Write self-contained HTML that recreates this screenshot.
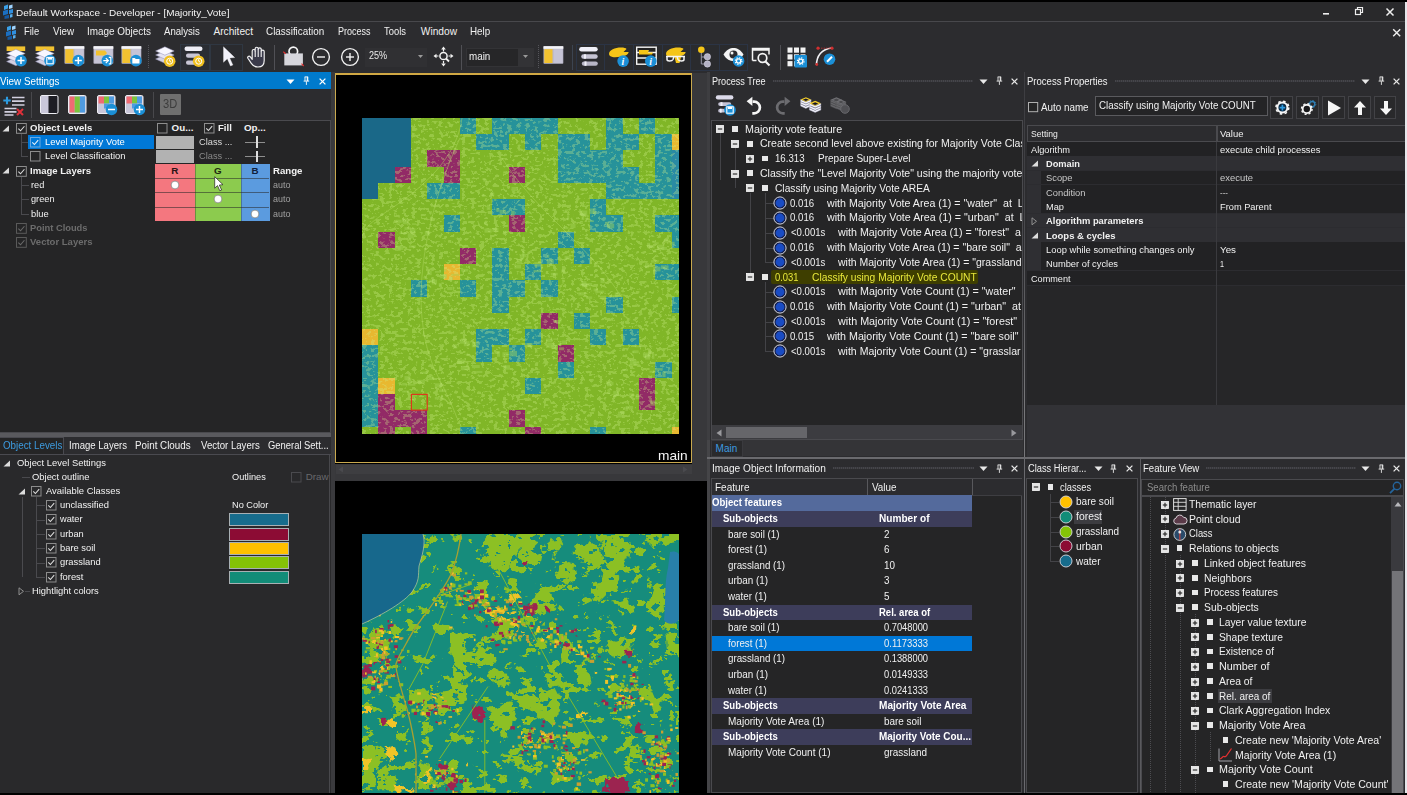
<!DOCTYPE html>
<html lang="en"><head><meta charset="utf-8"><title>Default Workspace - Developer - [Majority_Vote]</title>
<style>
html,body{margin:0;padding:0;}
body{width:1407px;height:795px;overflow:hidden;background:#2d2d30;position:relative;font-family:"Liberation Sans",sans-serif;}
body>div,body>span,body>svg{position:absolute;}
.t{white-space:pre;transform-origin:0 50%;display:block;}
svg{overflow:visible;}

</style></head>
<body>
<div style="left:0px;top:0px;width:1407px;height:795px;background:#2c2c2f;"></div>
<div style="left:0px;top:0px;width:1407px;height:2px;background:#000;"></div>
<div style="left:0px;top:2px;width:1407px;height:20px;background:#29292b;"></div>
<div style="left:0px;top:21.2px;width:1407px;height:1px;background:#48484c;"></div>
<div style="left:0px;top:22px;width:1407px;height:50px;background:#2c2c2f;"></div>
<svg style="left:2px;top:4px" width="12.0" height="15.0" viewBox="0 0 12 15"><path d="M2 2 L6 0.5 L6 4.5 L2 6z" fill="#3aa0e8"/><path d="M7 1.5 L10.5 0.5 L10.5 4 L7 5z" fill="#9fd4ff"/><path d="M1 7 L6 5.5 L6 10 L1 11.5z" fill="#1b6fc2"/><path d="M7 6 L11 5 L11 9 L7 10z" fill="#2f8fe0"/><path d="M2.5 12 L7 10.8 L7 14.2 L2.5 15z" fill="#1558a0"/><path d="M8 10.5 L10.5 10 L10.5 13 L8 13.8z" fill="#57b0f0"/></svg>
<svg style="left:5px;top:25px" width="12.0" height="15.0" viewBox="0 0 12 15"><path d="M2 2 L6 0.5 L6 4.5 L2 6z" fill="#3aa0e8"/><path d="M7 1.5 L10.5 0.5 L10.5 4 L7 5z" fill="#9fd4ff"/><path d="M1 7 L6 5.5 L6 10 L1 11.5z" fill="#1b6fc2"/><path d="M7 6 L11 5 L11 9 L7 10z" fill="#2f8fe0"/><path d="M2.5 12 L7 10.8 L7 14.2 L2.5 15z" fill="#1558a0"/><path d="M8 10.5 L10.5 10 L10.5 13 L8 13.8z" fill="#57b0f0"/></svg>
<span class="t" style="left:16.4px;top:6.6px;font-size:9.9px;line-height:11.88px;color:#f4f4f4;font-weight:400;transform:scaleX(1.011);">Default Workspace - Developer - [Majority_Vote]</span>
<svg style="left:1320px;top:5px" width="80" height="14" viewBox="0 0 80 14"><rect x="3" y="8" width="6" height="1.6" fill="#eee"/><rect x="35.5" y="4.5" width="5" height="5" fill="none" stroke="#eee" stroke-width="1.2"/><path d="M37.5 4.5V2.5h5v5h-2" fill="none" stroke="#eee" stroke-width="1.2"/><path d="M66.5 3.5l7 7M73.500 3.5l-7 7" stroke="#eee" stroke-width="1.5"/></svg>
<svg style="left:1392px;top:28px" width="10" height="10" viewBox="0 0 10 10"><path d="M1.200 1.200l7 7M8.200 1.200l-7 7" stroke="#eee" stroke-width="1.4"/></svg>
<span class="t" style="left:24.1px;top:25.71px;font-size:10.2px;line-height:12.24px;color:#f0f0f0;font-weight:400;transform:scaleX(0.926);">File</span>
<span class="t" style="left:52.7px;top:25.71px;font-size:10.2px;line-height:12.24px;color:#f0f0f0;font-weight:400;transform:scaleX(0.968);">View</span>
<span class="t" style="left:87px;top:25.71px;font-size:10.2px;line-height:12.24px;color:#f0f0f0;font-weight:400;transform:scaleX(0.974);">Image Objects</span>
<span class="t" style="left:164.4px;top:25.71px;font-size:10.2px;line-height:12.24px;color:#f0f0f0;font-weight:400;transform:scaleX(0.944);">Analysis</span>
<span class="t" style="left:213.4px;top:25.71px;font-size:10.2px;line-height:12.24px;color:#f0f0f0;font-weight:400;">Architect</span>
<span class="t" style="left:266.2px;top:25.71px;font-size:10.2px;line-height:12.24px;color:#f0f0f0;font-weight:400;transform:scaleX(0.969);">Classification</span>
<span class="t" style="left:338px;top:25.71px;font-size:10.2px;line-height:12.24px;color:#f0f0f0;font-weight:400;transform:scaleX(0.886);">Process</span>
<span class="t" style="left:384.3px;top:25.71px;font-size:10.2px;line-height:12.24px;color:#f0f0f0;font-weight:400;transform:scaleX(0.921);">Tools</span>
<span class="t" style="left:420.8px;top:25.71px;font-size:10.2px;line-height:12.24px;color:#f0f0f0;font-weight:400;">Window</span>
<span class="t" style="left:470.3px;top:25.71px;font-size:10.2px;line-height:12.24px;color:#f0f0f0;font-weight:400;transform:scaleX(0.964);">Help</span>
<svg style="left:6.4px;top:46px;" width="22" height="22" viewBox="0 0 22 22"><rect x="0.6" y="0.4" width="18.600" height="4.600" fill="#f2c230"/><path d="M0.6 15.5l9.300-4.200l9.300 4.200l-9.300 4.200z" fill="#d2d0e2" stroke="#8f8db0" stroke-width="0.500"/><path d="M0.6 11.5l9.300-4.200l9.300 4.200l-9.300 4.200z" fill="#e6e4f4" stroke="#8f8db0" stroke-width="0.500"/><path d="M0.6 7.5l9.300-4.200l9.300 4.200l-9.300 4.200z" fill="#f8f7ff" stroke="#8f8db0" stroke-width="0.500"/><circle cx="15" cy="14.6" r="5.8" fill="#1b8fd6"/><path d="M11.5 14.6h7M15 11.1v7" stroke="#fff" stroke-width="1.5"/></svg>
<svg style="left:35.2px;top:46px;" width="22" height="22" viewBox="0 0 22 22"><rect x="0.6" y="0.4" width="18.600" height="4.600" fill="#f2c230"/><path d="M0.6 15.5l9.300-4.200l9.300 4.200l-9.300 4.200z" fill="#d2d0e2" stroke="#8f8db0" stroke-width="0.500"/><path d="M0.6 11.5l9.300-4.200l9.300 4.200l-9.300 4.200z" fill="#e6e4f4" stroke="#8f8db0" stroke-width="0.500"/><path d="M0.6 7.5l9.300-4.200l9.300 4.200l-9.300 4.200z" fill="#f8f7ff" stroke="#8f8db0" stroke-width="0.500"/><circle cx="15" cy="14.6" r="5.8" fill="#1b8fd6"/><rect x="11.8" y="11.399999999999999" width="6.4" height="6.400" fill="none" stroke="#fff" stroke-width="1.100"/><rect x="13" y="11.399999999999999" width="4" height="2.200" fill="#fff"/></svg>
<svg style="left:64px;top:46px;" width="22" height="22" viewBox="0 0 22 22"><rect x="0.500" y="0.200" width="19.800" height="17.600" rx="0.800" fill="#b8b6c8"/><rect x="0.500" y="0.200" width="19.800" height="2.600" fill="#f4f4f8"/><rect x="1.300" y="3.200" width="8.200" height="13.800" fill="#f2c230"/><rect x="10.600" y="3.200" width="8.900" height="13.800" fill="#c6c4d6"/><circle cx="14.3" cy="14.6" r="5.8" fill="#1b8fd6"/><path d="M10.8 14.6h7M14.3 11.1v7" stroke="#fff" stroke-width="1.5"/></svg>
<svg style="left:92.7px;top:46px;" width="22" height="22" viewBox="0 0 22 22"><rect x="0.500" y="0.200" width="19.800" height="17.600" rx="0.800" fill="#b8b6c8"/><rect x="0.500" y="0.200" width="19.800" height="2.600" fill="#f4f4f8"/><rect x="1.300" y="3.200" width="18.200" height="13.800" fill="#c6c4d6"/><path d="M3 4.500h9l2 2.500l-2 2.500h-9z" fill="#f2c230"/><circle cx="14.3" cy="14.6" r="5.8" fill="#1b8fd6"/><path d="M10.3 14.6h4.500M12.8 12.1l2.500 2.500l-2.500 2.500" stroke="#fff" stroke-width="1.300" fill="none"/><path d="M15.8 11.399999999999999h2v6.400h-2" stroke="#fff" stroke-width="1.200" fill="none"/></svg>
<svg style="left:121.3px;top:46px;" width="22" height="22" viewBox="0 0 22 22"><rect x="0.500" y="0.200" width="19.800" height="17.600" rx="0.800" fill="#b8b6c8"/><rect x="0.500" y="0.200" width="19.800" height="2.600" fill="#f4f4f8"/><rect x="1.300" y="3.200" width="8.200" height="13.800" fill="#f2c230"/><rect x="10.600" y="3.200" width="8.900" height="13.800" fill="#c6c4d6"/><circle cx="14.9" cy="14.6" r="5.8" fill="#1b8fd6"/><path d="M11.3 12.1h2.500l1 1h3.700v4.500h-7.200z" fill="#fff"/></svg>
<div style="left:148px;top:45px;width:1px;height:24px;background:repeating-linear-gradient(#55555a 0 1px,transparent 1px 2px)"></div>
<svg style="left:154.8px;top:46px;" width="22" height="22" viewBox="0 0 22 22"><path d="M0.6 13.0l9.300-4.200l9.300 4.200l-9.300 4.200z" fill="#d2d0e2" stroke="#8f8db0" stroke-width="0.500"/><path d="M0.6 9.0l9.300-4.200l9.300 4.200l-9.300 4.200z" fill="#e6e4f4" stroke="#8f8db0" stroke-width="0.500"/><path d="M0.6 5.0l9.300-4.200l9.300 4.200l-9.300 4.200z" fill="#f8f7ff" stroke="#8f8db0" stroke-width="0.500"/><circle cx="14.7" cy="15.2" r="5.8" fill="#f0c020"/><circle cx="14.7" cy="15.2" r="3" fill="none" stroke="#fff" stroke-width="1"/><path d="M14.7 13.2v2l1.500 1" stroke="#fff" stroke-width="1" fill="none"/></svg>
<div style="left:180px;top:44px;width:30px;height:27px;background:#2a2d33;border:1px solid #2f3742;box-sizing:border-box;"></div>
<svg style="left:184px;top:46px;" width="22" height="22" viewBox="0 0 22 22"><rect x="0.500" y="0.500" width="18" height="4.500" rx="2.200" fill="#eeeef6"/><rect x="2" y="7.500" width="14" height="4.200" rx="2" fill="#c8c6d6"/><rect x="2" y="14.500" width="12" height="4.200" rx="2" fill="#c8c6d6"/><circle cx="14.7" cy="15.2" r="5.8" fill="#f0c020"/><circle cx="14.7" cy="15.2" r="3" fill="none" stroke="#fff" stroke-width="1"/><path d="M14.7 13.2v2l1.500 1" stroke="#fff" stroke-width="1" fill="none"/></svg>
<div style="left:210px;top:44px;width:32.5px;height:27px;background:#2a2b2f;border:1px solid #2f3742;box-sizing:border-box;"></div>
<svg style="left:222px;top:46px;" width="14" height="22" viewBox="0 0 14 22"><path d="M1.500 0.800v15.500l3.800-3.600l3.200 7.300l2.400-1.100l-3.200-7l5-0.300z" fill="#f2f2fa" stroke="#fff" stroke-width="0.300"/></svg>
<svg style="left:246.8px;top:46px;" width="21" height="22" viewBox="0 0 21 22"><path d="M4.300 17.400L0.900 12.300C0 10.800 2 9.400 3.100 10.700L5.200 13.400V5a1.500 1.500 0 0 1 3 0V2.700a1.500 1.500 0 0 1 3 0V3.300a1.500 1.500 0 0 1 3 0V5.600a1.500 1.500 0 0 1 3 0V14.500C17.200 18.500 15 21 11 21C8 21 6 20 4.300 17.400Z" fill="#3a3a4a" stroke="#f4f4f4" stroke-width="1.150" stroke-linejoin="round"/><path d="M8.200 5V11M11.200 3.300V11M14.200 5.600V11" stroke="#f4f4f4" stroke-width="1.100"/></svg>
<div style="left:274px;top:45px;width:1px;height:25px;background:#505055;"></div>
<svg style="left:283px;top:46px;" width="21" height="21" viewBox="0 0 21 21"><circle cx="10.300" cy="5.500" r="4.300" fill="none" stroke="#f6f6f6" stroke-width="1.700"/><path d="M1.300 7.400h18.600v12h-18.600z" fill="#d6d6dc"/><path d="M0.300 5.800l2.500 2M20.800 20l-2.300-2.300" stroke="#e03030" stroke-width="1.100"/></svg>
<svg style="left:310.8px;top:46.6px;" width="20" height="20" viewBox="0 0 20 20"><circle cx="10" cy="10" r="8.400" fill="none" stroke="#f2f2f2" stroke-width="1.400"/><path d="M6 10h8" stroke="#f2f2f2" stroke-width="1.400"/></svg>
<svg style="left:339.6px;top:46.6px;" width="20" height="20" viewBox="0 0 20 20"><circle cx="10" cy="10" r="8.400" fill="none" stroke="#f2f2f2" stroke-width="1.400"/><path d="M6 10h8" stroke="#f2f2f2" stroke-width="1.400"/><path d="M10 6v8" stroke="#f2f2f2" stroke-width="1.400"/></svg>
<div style="left:365px;top:47.5px;width:62px;height:19px;background:#303033;"></div>
<span class="t" style="left:368.6px;top:50.13px;font-size:10px;line-height:12.0px;color:#e8e8e8;font-weight:400;transform:scaleX(0.909);">25%</span>
<svg style="left:417px;top:54px;" width="8" height="5" viewBox="0 0 8 5"><path d="M1 1h5l-2.500 3z" fill="#9a9a9a"/></svg>
<svg style="left:433px;top:46px;" width="22" height="22" viewBox="0 0 22 22"><circle cx="10.500" cy="10" r="3.600" fill="none" stroke="#f2f2f2" stroke-width="1.500"/><path d="M13 12.500l3 3" stroke="#f2f2f2" stroke-width="1.800"/><path d="M10.500 0.500l2.300 3h-4.600zM10.500 20.500l2.300-3h-4.600zM0.500 10l3-2.300v4.600zM20.500 10l-3-2.300v4.600z" fill="#f2f2f2"/><path d="M10.500 3v2.500M10.500 15v2.500M3 10h2.500M15.500 10h2" stroke="#f2f2f2" stroke-width="1.200"/></svg>
<div style="left:461px;top:45px;width:1px;height:25px;background:#505055;"></div>
<div style="left:465.6px;top:47.5px;width:68.5px;height:19px;background:#333336;"></div>
<div style="left:466.6px;top:48.5px;width:51.5px;height:17px;background:#262628;"></div>
<span class="t" style="left:468.9px;top:49.91px;font-size:11.5px;line-height:13.8px;color:#f0f0f0;font-weight:400;transform:scaleX(0.854);">main</span>
<svg style="left:522px;top:54px;" width="8" height="5" viewBox="0 0 8 5"><path d="M1 1h5l-2.500 3z" fill="#9a9a9a"/></svg>
<div style="left:538px;top:45px;width:1px;height:24px;background:repeating-linear-gradient(#55555a 0 1px,transparent 1px 2px)"></div>
<svg style="left:543.3px;top:46px;" width="22" height="22" viewBox="0 0 22 22"><rect x="0.500" y="0.200" width="19.800" height="17.600" rx="0.800" fill="#b8b6c8"/><rect x="0.500" y="0.200" width="19.800" height="2.600" fill="#f4f4f8"/><rect x="1.300" y="3.200" width="8.200" height="13.800" fill="#f2c230"/><rect x="10.600" y="3.200" width="8.900" height="13.800" fill="#c6c4d6"/></svg>
<div style="left:572px;top:45px;width:1px;height:25px;background:#3c4450;"></div>
<div style="left:575.9px;top:44px;width:29.2px;height:27px;background:#2a2b2e;border:1px solid #2b3445;box-sizing:border-box;"></div>
<div style="left:604.1px;top:44px;width:29.8px;height:27px;background:#2a2b2e;border:1px solid #2b3445;box-sizing:border-box;"></div>
<div style="left:632.9px;top:44px;width:29.8px;height:27px;background:#2a2b2e;border:1px solid #2b3445;box-sizing:border-box;"></div>
<div style="left:661.7px;top:44px;width:29.1px;height:27px;background:#2a2b2e;border:1px solid #2b3445;box-sizing:border-box;"></div>
<div style="left:689.8px;top:44px;width:29.8px;height:27px;background:#2a2b2e;border:1px solid #2b3445;box-sizing:border-box;"></div>
<div style="left:718.6px;top:44px;width:29.5px;height:27px;background:#2a2b2e;border:1px solid #2b3445;box-sizing:border-box;"></div>
<svg style="left:579px;top:46px;" width="20" height="22" viewBox="0 0 20 22"><rect x="0.200" y="1" width="18.500" height="4.600" rx="2.300" fill="#f0f0f8"/><rect x="2.200" y="8.300" width="16.500" height="4.400" rx="2.200" fill="#c6c4d4"/><rect x="2.800" y="15.400" width="16" height="4.400" rx="2.200" fill="#b8b6c6"/><rect x="5" y="8.300" width="2" height="4.400" fill="#f0f0f8"/><rect x="5.500" y="15.400" width="2" height="4.400" fill="#f0f0f8"/></svg>
<svg style="left:607.5px;top:46px;" width="22" height="22" viewBox="0 0 22 22"><path d="M1 8c0-4 6-6.500 12-6.500c3 0 5 .5 5.500 1.500l-3 3h5c.5 1-1 2.500-3 3.500c-4 1.500-10 2-13 1.500c-2-.3-3.500-1.500-3.500-3z" fill="#f5c518"/><circle cx="15.1" cy="15.1" r="5.8" fill="#1b8fd6"/><text x="13.5" y="18.6" font-family="Liberation Serif,serif" font-style="italic" font-weight="700" font-size="10" fill="#fff">i</text></svg>
<svg style="left:636px;top:46px;" width="22" height="22" viewBox="0 0 22 22"><rect x="0.700" y="1.200" width="19.500" height="17" fill="#222" stroke="#f4f4f4" stroke-width="1.400"/><path d="M1 6.500h19M1 12h19" stroke="#f4f4f4" stroke-width="1.400"/><path d="M3 4h10l-1 2.500h5l-1 2h-13z" fill="#f5c518"/><circle cx="14.8" cy="15.1" r="5.8" fill="#1b8fd6"/><text x="13.200000000000001" y="18.6" font-family="Liberation Serif,serif" font-style="italic" font-weight="700" font-size="10" fill="#fff">i</text></svg>
<svg style="left:665px;top:46px;" width="22" height="22" viewBox="0 0 22 22"><path d="M1 8c0-4 6-6.500 12-6.500c3 0 5 .5 5.500 1.500l-3 3h5c.5 1-1 2.500-3 3.500c-4 1.500-10 2-13 1.500c-2-.3-3.500-1.500-3.500-3z" fill="#f5c518"/><path d="M9 9l2 8h3.500l1.500-6z" fill="#f5c518"/><path d="M1 10.500h19M2 10.500v3c0 2 5 2 6 0l1-3M12 10.500l1 3c1 2 6 2 6 0v-3" fill="none" stroke="#f4f4f4" stroke-width="1.500"/></svg>
<svg style="left:695px;top:46px;" width="22" height="22" viewBox="0 0 22 22"><path d="M6.300 6v12h5M6.300 11h5" fill="none" stroke="#9a9aa8" stroke-width="1"/><circle cx="6.300" cy="3.700" r="3.300" fill="#f5c518"/><circle cx="12.400" cy="10.800" r="3.200" fill="#b4b2c4" stroke="#dcdae8" stroke-width="0.500"/><circle cx="12.400" cy="18" r="3.200" fill="#b4b2c4" stroke="#dcdae8" stroke-width="0.500"/></svg>
<svg style="left:722.5px;top:46px;" width="24" height="22" viewBox="0 0 24 22"><path d="M0.500 8.500c3-5 6.500-6.500 10-6.500s7 1.500 10 6.500c-3 5-6.500 6.500-10 6.500s-7-1.500-10-6.500z" fill="#f4f4f4"/><circle cx="10.500" cy="8.500" r="4" fill="#2a2b2f"/><circle cx="9" cy="7" r="1.500" fill="#f4f4f4"/><circle cx="15.6" cy="15" r="5.8" fill="#1b8fd6"/><circle cx="15.6" cy="15" r="2.100" fill="none" stroke="#fff" stroke-width="1.300"/><circle cx="15.6" cy="15" r="3.300" fill="none" stroke="#fff" stroke-width="1.200" stroke-dasharray="1.296 1.296"/></svg>
<svg style="left:751px;top:46px;" width="22" height="22" viewBox="0 0 22 22"><path d="M1.500 14.500v-12h16.500v6" fill="none" stroke="#f4f4f4" stroke-width="1.500"/><path d="M1.500 3.500h16.500" stroke="#f4f4f4" stroke-width="2.500"/><circle cx="11.500" cy="12" r="4.300" fill="none" stroke="#f4f4f4" stroke-width="1.700"/><path d="M14.500 15.500l4 4" stroke="#f4f4f4" stroke-width="2.200"/><path d="M1.500 14.500h4" stroke="#f4f4f4" stroke-width="1.500"/></svg>
<div style="left:779.5px;top:45px;width:1px;height:25px;background:#505055;"></div>
<svg style="left:787px;top:46.5px;" width="22" height="22" viewBox="0 0 22 22"><rect x="0.5" y="0.5" width="5" height="5.200" fill="#f4f4f4"/><rect x="7.0" y="0.5" width="5" height="5.200" fill="#f4f4f4"/><rect x="13.5" y="0.5" width="5" height="5.200" fill="#f4f4f4"/><rect x="0.5" y="7.3" width="5" height="5.200" fill="#f4f4f4"/><rect x="7.0" y="7.3" width="5" height="5.200" fill="#f4f4f4"/><rect x="13.5" y="7.3" width="5" height="5.200" fill="#f4f4f4"/><rect x="0.5" y="14.1" width="5" height="5.200" fill="#f4f4f4"/><rect x="7.0" y="14.1" width="5" height="5.200" fill="#f4f4f4"/><rect x="13.5" y="14.1" width="5" height="5.200" fill="#f4f4f4"/><rect x="7.500" y="8" width="12.500" height="12.500" rx="1" fill="#1b8fd6"/><circle cx="13.7" cy="14.2" r="5.8" fill="#1b8fd6"/><circle cx="13.7" cy="14.2" r="2.100" fill="none" stroke="#fff" stroke-width="1.300"/><circle cx="13.7" cy="14.2" r="3.300" fill="none" stroke="#fff" stroke-width="1.200" stroke-dasharray="1.296 1.296"/></svg>
<svg style="left:815px;top:46px;" width="24" height="22" viewBox="0 0 24 22"><path d="M1.500 19c0-9 5-16 15.500-17" fill="none" stroke="#f0f0f4" stroke-width="1.600"/><path d="M3.500 2.200h13" stroke="#d03030" stroke-width="0.800" stroke-dasharray="1.500 1"/><circle cx="3" cy="2.200" r="1.600" fill="#d03030"/><circle cx="17" cy="2.200" r="1.600" fill="#d03030"/><circle cx="1.800" cy="18.500" r="1.400" fill="#d03030"/><circle cx="14.5" cy="13.2" r="5.8" fill="#1b8fd6"/><path d="M12.0 15.7l5-5" stroke="#fff" stroke-width="2"/></svg>
<div style="left:0px;top:72px;width:330.5px;height:17px;background:#007acc;"></div>
<span class="t" style="left:-0.5px;top:75.93px;font-size:10px;line-height:12.0px;color:#ffffff;font-weight:400;transform:scaleX(0.985);">View Settings</span>
<svg style="left:286.0px;top:78.5px;" width="9" height="6" viewBox="0 0 9 6"><path d="M0.500 0.500h8l-4 4.500z" fill="#ffffff"/></svg>
<svg style="left:303.3px;top:76.4px;" width="7" height="10" viewBox="0 0 7 10"><path d="M1.700 0.900h3.400M2 0.900v4.200M4.800 0.900v4.200M0.600 5.100h5.600M3.400 5.300v3.600" stroke="#ffffff" stroke-width="0.900" fill="none"/><path d="M4.300 0.900v4.200" stroke="#ffffff" stroke-width="1.100"/></svg>
<svg style="left:318.9px;top:77.5px;" width="7" height="7" viewBox="0 0 7 7"><path d="M0.600 0.600l5.800 5.800M6.400 0.600l-5.800 5.800" stroke="#ffffff" stroke-width="1.300"/></svg>
<div style="left:0px;top:89px;width:330.5px;height:31px;background:#2c2c2f;"></div>
<div style="left:330.5px;top:72px;width:4px;height:723px;background:#3a3a3d;"></div>
<svg style="left:2.5px;top:94.5px;" width="22" height="21" viewBox="0 0 22 21"><path d="M9 2.500h12.500M9 6.200h12.500M9 10h12.500M1.500 13.500h12M1.500 16.800h12M1.500 20h9" stroke="#d2d0e0" stroke-width="1.700"/><path d="M0.300 5.500h7.400M4 1.800v7.400" stroke="#2d9be0" stroke-width="2.100"/><path d="M14 14l6 6M20 14l-6 6" stroke="#e0303a" stroke-width="2"/></svg>
<div style="left:31px;top:92px;width:1px;height:26px;background:#48484c;"></div>
<svg style="left:39.5px;top:94.5px;" width="21" height="21" viewBox="0 0 21 21"><rect x="0.500" y="0.500" width="17.500" height="18" rx="1.500" fill="#1d1d24" stroke="#eeeef4" stroke-width="1"/><rect x="1" y="1" width="7.500" height="17" fill="#c9c7da"/></svg>
<svg style="left:68px;top:94.5px;" width="21" height="21" viewBox="0 0 21 21"><rect x="0.500" y="0.500" width="17.500" height="18" rx="1.500" fill="#c9c7da" stroke="#eeeef4" stroke-width="1"/><rect x="1.500" y="1.500" width="5.200" height="16" fill="#f06a72"/><rect x="6.700" y="1.500" width="5.200" height="16" fill="#7cc43c"/><rect x="11.900" y="1.500" width="5.200" height="16" fill="#4f9be0"/></svg>
<svg style="left:96.5px;top:94.5px;" width="21" height="21" viewBox="0 0 21 21"><rect x="0.500" y="0.500" width="17.500" height="18" rx="1.500" fill="#c9c7da" stroke="#eeeef4" stroke-width="1"/><rect x="1.500" y="1.500" width="5.500" height="7" fill="#f06a72"/><rect x="7" y="1.500" width="5" height="7" fill="#7cc43c"/><rect x="12" y="1.500" width="5" height="7" fill="#4f9be0"/><rect x="7" y="8.500" width="5" height="5" fill="#4f9be0"/><circle cx="14.5" cy="14.5" r="5.8" fill="#1b8fd6"/><path d="M11 14.500h7" stroke="#fff" stroke-width="1.500"/></svg>
<svg style="left:125px;top:94.5px;" width="21" height="21" viewBox="0 0 21 21"><rect x="0.500" y="0.500" width="17.500" height="18" rx="1.500" fill="#c9c7da" stroke="#eeeef4" stroke-width="1"/><rect x="1.500" y="1.500" width="5.500" height="7" fill="#f06a72"/><rect x="7" y="1.500" width="5" height="7" fill="#7cc43c"/><rect x="12" y="1.500" width="5" height="7" fill="#4f9be0"/><rect x="7" y="8.500" width="5" height="5" fill="#4f9be0"/><circle cx="14.5" cy="14.5" r="5.8" fill="#1b8fd6"/><path d="M11.0 14.5h7M14.5 11.0v7" stroke="#fff" stroke-width="1.5"/></svg>
<div style="left:152.5px;top:92px;width:1px;height:26px;background:#48484c;"></div>
<div style="left:160px;top:94.2px;width:21px;height:21px;background:#6f6f6f;border-radius:1px"></div>
<span class="t" style="left:163.2px;top:97.19px;font-size:12.5px;line-height:15.0px;color:#3c3c3c;font-weight:400;transform:scaleX(0.888);">3D</span>
<div style="left:0px;top:119.5px;width:330.5px;height:313px;background:#252526;border:1px solid #4a4a4e;box-sizing:border-box;border-left:none"></div>
<svg style="left:2px;top:124.5px;" width="8" height="7" viewBox="0 0 8 7"><path d="M7 0.500v6h-6.500z" fill="#dcdcdc"/></svg>
<svg style="left:15.7px;top:122.8px;" width="10.8" height="10.8" viewBox="0 0 10.8 10.8"><rect x="0.500" y="0.500" width="9.8" height="9.8" fill="transparent" stroke="#8c8c8c" stroke-width="1"/><path d="M2.3760000000000003 5.6160000000000005l2.16 2.16l3.888-4.5360000000000005" fill="none" stroke="#dcdcdc" stroke-width="1.100"/></svg>
<span class="t" style="left:30.2px;top:121.76px;font-size:9.8px;line-height:11.76px;color:#f2f2f2;font-weight:700;transform:scaleX(0.979);">Object Levels</span>
<svg style="left:157px;top:122.8px;" width="10.5" height="10.5" viewBox="0 0 10.5 10.5"><rect x="0.500" y="0.500" width="9.5" height="9.5" fill="transparent" stroke="#8e8e8e" stroke-width="1"/></svg>
<span class="t" style="left:171.6px;top:121.76px;font-size:9.8px;line-height:11.76px;color:#f2f2f2;font-weight:700;">Ou...</span>
<svg style="left:203.5px;top:122.8px;" width="10.5" height="10.5" viewBox="0 0 10.5 10.5"><rect x="0.500" y="0.500" width="9.5" height="9.5" fill="transparent" stroke="#8e8e8e" stroke-width="1"/><path d="M2.31 5.46l2.1 2.1l3.78-4.41" fill="none" stroke="#dcdcdc" stroke-width="1.100"/></svg>
<span class="t" style="left:217.5px;top:121.76px;font-size:9.8px;line-height:11.76px;color:#f2f2f2;font-weight:700;transform:scaleX(0.975);">Fill</span>
<span class="t" style="left:244px;top:121.76px;font-size:9.8px;line-height:11.76px;color:#f2f2f2;font-weight:700;">Op...</span>
<div style="left:27.8px;top:135.2px;width:126.4px;height:13.8px;background:#0078d7;"></div>
<svg style="left:30.2px;top:136.8px;" width="10.5" height="10.5" viewBox="0 0 10.5 10.5"><rect x="0.500" y="0.500" width="9.5" height="9.5" fill="transparent" stroke="#6aa8e0" stroke-width="1"/><path d="M2.31 5.46l2.1 2.1l3.78-4.41" fill="none" stroke="#e8f0fa" stroke-width="1.100"/></svg>
<span class="t" style="left:44.7px;top:135.96px;font-size:9.8px;line-height:11.76px;color:#fff;font-weight:400;transform:scaleX(0.964);">Level Majority Vote</span>
<svg style="left:30.2px;top:151.2px;" width="10.5" height="10.5" viewBox="0 0 10.5 10.5"><rect x="0.500" y="0.500" width="9.5" height="9.5" fill="transparent" stroke="#8c8c8c" stroke-width="1"/></svg>
<span class="t" style="left:44.7px;top:150.26px;font-size:9.8px;line-height:11.76px;color:#f2f2f2;font-weight:400;transform:scaleX(0.960);">Level Classification</span>
<div style="left:155.9px;top:135.6px;width:38.6px;height:13px;background:#b2b2b2;"></div>
<div style="left:155.9px;top:150.1px;width:38.6px;height:12.7px;background:#b2b2b2;"></div>
<span class="t" style="left:198.6px;top:135.96px;font-size:9.8px;line-height:11.76px;color:#dcdcdc;font-weight:400;transform:scaleX(0.944);">Class ...</span>
<span class="t" style="left:198.6px;top:150.26px;font-size:9.8px;line-height:11.76px;color:#8a8a8a;font-weight:400;transform:scaleX(0.944);">Class ...</span>
<div style="left:245.3px;top:141.89999999999998px;width:19.3px;height:1px;background:#8e8e8e;"></div>
<div style="left:255.6px;top:136.39999999999998px;width:2.7px;height:11.6px;background:#dedede;"></div>
<div style="left:245.3px;top:156.2px;width:19.3px;height:1px;background:#8e8e8e;"></div>
<div style="left:255.6px;top:150.7px;width:2.7px;height:11.6px;background:#dedede;"></div>
<div style="left:20.5px;top:134px;width:1px;height:22.5px;background:#4a4a4e;"></div>
<div style="left:20.5px;top:142px;width:7px;height:1px;background:#4a4a4e;"></div>
<div style="left:20.5px;top:156px;width:7px;height:1px;background:#4a4a4e;"></div>
<svg style="left:2px;top:167.3px;" width="8" height="7" viewBox="0 0 8 7"><path d="M7 0.500v6h-6.500z" fill="#dcdcdc"/></svg>
<svg style="left:15.7px;top:165.5px;" width="10.8" height="10.8" viewBox="0 0 10.8 10.8"><rect x="0.500" y="0.500" width="9.8" height="9.8" fill="transparent" stroke="#8c8c8c" stroke-width="1"/><path d="M2.3760000000000003 5.6160000000000005l2.16 2.16l3.888-4.5360000000000005" fill="none" stroke="#dcdcdc" stroke-width="1.100"/></svg>
<span class="t" style="left:30.2px;top:164.56px;font-size:9.8px;line-height:11.76px;color:#f2f2f2;font-weight:700;transform:scaleX(0.975);">Image Layers</span>
<div style="left:155.1px;top:164.2px;width:40.2px;height:56.8px;background:#f4777f;"></div>
<div style="left:195.3px;top:164.2px;width:45.7px;height:56.8px;background:#8ccb4e;"></div>
<div style="left:241px;top:164.2px;width:28.5px;height:56.8px;background:#5b9bdf;"></div>
<div style="left:155.1px;top:178.3px;width:114.4px;height:1px;background:rgba(40,40,40,.55);"></div>
<div style="left:155.1px;top:192.4px;width:114.4px;height:1px;background:rgba(40,40,40,.55);"></div>
<div style="left:155.1px;top:206.6px;width:114.4px;height:1px;background:rgba(40,40,40,.55);"></div>
<div style="left:195.3px;top:164.2px;width:1px;height:56.8px;background:rgba(40,40,40,.35);"></div>
<div style="left:241px;top:164.2px;width:1px;height:56.8px;background:rgba(40,40,40,.35);"></div>
<span class="t" style="left:171.3px;top:164.66px;font-size:9.8px;line-height:11.76px;color:#2a1416;font-weight:700;">R</span>
<span class="t" style="left:214px;top:164.66px;font-size:9.8px;line-height:11.76px;color:#1c2a10;font-weight:700;">G</span>
<span class="t" style="left:251.6px;top:164.66px;font-size:9.8px;line-height:11.76px;color:#10203a;font-weight:700;">B</span>
<span class="t" style="left:272.6px;top:164.66px;font-size:9.8px;line-height:11.76px;color:#f2f2f2;font-weight:700;transform:scaleX(0.985);">Range</span>
<span class="t" style="left:30.7px;top:178.86px;font-size:9.8px;line-height:11.76px;color:#f2f2f2;font-weight:400;transform:scaleX(0.938);">red</span>
<span class="t" style="left:272.6px;top:178.86px;font-size:9.8px;line-height:11.76px;color:#a0a0a0;font-weight:400;transform:scaleX(0.912);">auto</span>
<svg style="left:169.7px;top:180.1px;" width="10" height="10" viewBox="0 0 10 10"><circle cx="5" cy="5" r="3.900" fill="#fff" stroke="#777" stroke-width="0.700"/></svg>
<div style="left:20.5px;top:185.1px;width:8px;height:1px;background:#4a4a4e;"></div>
<span class="t" style="left:30.7px;top:193.21px;font-size:9.8px;line-height:11.76px;color:#f2f2f2;font-weight:400;transform:scaleX(0.938);">green</span>
<span class="t" style="left:272.6px;top:193.21px;font-size:9.8px;line-height:11.76px;color:#a0a0a0;font-weight:400;transform:scaleX(0.912);">auto</span>
<svg style="left:213px;top:194.45px;" width="10" height="10" viewBox="0 0 10 10"><circle cx="5" cy="5" r="3.900" fill="#fff" stroke="#777" stroke-width="0.700"/></svg>
<div style="left:20.5px;top:199.45px;width:8px;height:1px;background:#4a4a4e;"></div>
<span class="t" style="left:30.7px;top:207.56px;font-size:9.8px;line-height:11.76px;color:#f2f2f2;font-weight:400;transform:scaleX(0.950);">blue</span>
<span class="t" style="left:272.6px;top:207.56px;font-size:9.8px;line-height:11.76px;color:#a0a0a0;font-weight:400;transform:scaleX(0.912);">auto</span>
<svg style="left:250px;top:208.79999999999998px;" width="10" height="10" viewBox="0 0 10 10"><circle cx="5" cy="5" r="3.900" fill="#fff" stroke="#777" stroke-width="0.700"/></svg>
<div style="left:20.5px;top:213.79999999999998px;width:8px;height:1px;background:#4a4a4e;"></div>
<div style="left:20.5px;top:177px;width:1px;height:37px;background:#4a4a4e;"></div>
<svg style="left:15.7px;top:222.5px;" width="10.8" height="10.8" viewBox="0 0 10.8 10.8"><rect x="0.500" y="0.500" width="9.8" height="9.8" fill="transparent" stroke="#5a5a5a" stroke-width="1"/><path d="M2.3760000000000003 5.6160000000000005l2.16 2.16l3.888-4.5360000000000005" fill="none" stroke="#6a6a6a" stroke-width="1.100"/></svg>
<span class="t" style="left:30.2px;top:221.76px;font-size:9.8px;line-height:11.76px;color:#6c6c6c;font-weight:700;transform:scaleX(0.952);">Point Clouds</span>
<svg style="left:15.7px;top:237px;" width="10.8" height="10.8" viewBox="0 0 10.8 10.8"><rect x="0.500" y="0.500" width="9.8" height="9.8" fill="transparent" stroke="#5a5a5a" stroke-width="1"/><path d="M2.3760000000000003 5.6160000000000005l2.16 2.16l3.888-4.5360000000000005" fill="none" stroke="#6a6a6a" stroke-width="1.100"/></svg>
<span class="t" style="left:30.2px;top:236.26px;font-size:9.8px;line-height:11.76px;color:#6c6c6c;font-weight:700;transform:scaleX(0.973);">Vector Layers</span>
<svg style="left:213.5px;top:176px;" width="11" height="16" viewBox="0 0 11 16"><path d="M0.700 0.700v11.500l2.800-2.600l2.300 5.200l1.800-0.800l-2.300-5l3.700-0.300z" fill="#fff" stroke="#222" stroke-width="0.700"/></svg>
<div style="left:0px;top:433px;width:330.5px;height:3.5px;background:#5a5a5e;"></div>
<div style="left:0px;top:436.5px;width:330.5px;height:18.5px;background:#2c2c2f;"></div>
<div style="left:-1px;top:437.4px;width:64.6px;height:17.2px;background:#252526;border:1px solid #4a4a50;box-sizing:border-box;"></div>
<span class="t" style="left:2.9px;top:439.94px;font-size:10px;line-height:12.0px;color:#3c9be0;font-weight:400;transform:scaleX(0.980);">Object Levels</span>
<span class="t" style="left:69.4px;top:439.94px;font-size:10px;line-height:12.0px;color:#f2f2f2;font-weight:400;transform:scaleX(0.957);">Image Layers</span>
<span class="t" style="left:135.3px;top:439.94px;font-size:10px;line-height:12.0px;color:#f2f2f2;font-weight:400;transform:scaleX(0.981);">Point Clouds</span>
<span class="t" style="left:201px;top:439.94px;font-size:10px;line-height:12.0px;color:#f2f2f2;font-weight:400;transform:scaleX(0.961);">Vector Layers</span>
<span class="t" style="left:267.5px;top:439.94px;font-size:10px;line-height:12.0px;color:#f2f2f2;font-weight:400;transform:scaleX(0.941);">General Sett...</span>
<div style="left:0px;top:454.4px;width:330.5px;height:1px;background:#4a4a50;"></div>
<div style="left:0px;top:455.4px;width:330.5px;height:339.6px;background:#29292b;"></div>
<div style="left:328.8px;top:455.4px;width:1.5px;height:338px;background:#48484c;"></div>
<svg style="left:3.2px;top:459.5px;" width="8" height="7" viewBox="0 0 8 7"><path d="M7 0.500v6h-6.500z" fill="#dcdcdc"/></svg>
<span class="t" style="left:17.4px;top:456.66px;font-size:9.8px;line-height:11.76px;color:#f2f2f2;font-weight:400;transform:scaleX(0.960);">Object Level Settings</span>
<span class="t" style="left:31.9px;top:470.66px;font-size:9.8px;line-height:11.76px;color:#f2f2f2;font-weight:400;transform:scaleX(0.960);">Object outline</span>
<span class="t" style="left:231.5px;top:470.66px;font-size:9.8px;line-height:11.76px;color:#f2f2f2;font-weight:400;transform:scaleX(0.940);">Outlines</span>
<svg style="left:291.2px;top:471.6px;" width="10.5" height="10.5" viewBox="0 0 10.5 10.5"><rect x="0.500" y="0.500" width="9.5" height="9.5" fill="transparent" stroke="#4a4a4e" stroke-width="1"/></svg>
<span class="t" style="left:305.7px;top:470.66px;font-size:9.8px;line-height:11.76px;color:#68686c;font-weight:400;">Draw</span>
<svg style="left:17.7px;top:487.7px;" width="8" height="7" viewBox="0 0 8 7"><path d="M7 0.500v6h-6.500z" fill="#dcdcdc"/></svg>
<svg style="left:31.4px;top:485.8px;" width="10.5" height="10.5" viewBox="0 0 10.5 10.5"><rect x="0.500" y="0.500" width="9.5" height="9.5" fill="transparent" stroke="#8c8c8c" stroke-width="1"/><path d="M2.31 5.46l2.1 2.1l3.78-4.41" fill="none" stroke="#dcdcdc" stroke-width="1.100"/></svg>
<span class="t" style="left:45.9px;top:484.86px;font-size:9.8px;line-height:11.76px;color:#f2f2f2;font-weight:400;transform:scaleX(0.962);">Available Classes</span>
<svg style="left:45.9px;top:500.09999999999997px;" width="10.5" height="10.5" viewBox="0 0 10.5 10.5"><rect x="0.500" y="0.500" width="9.5" height="9.5" fill="transparent" stroke="#8c8c8c" stroke-width="1"/><path d="M2.31 5.46l2.1 2.1l3.78-4.41" fill="none" stroke="#dcdcdc" stroke-width="1.100"/></svg>
<span class="t" style="left:60.4px;top:499.16px;font-size:9.8px;line-height:11.76px;color:#f2f2f2;font-weight:400;transform:scaleX(0.957);">unclassified</span>
<div style="left:36px;top:505.4px;width:9px;height:1px;background:#4a4a4e;"></div>
<svg style="left:45.9px;top:514.4px;" width="10.5" height="10.5" viewBox="0 0 10.5 10.5"><rect x="0.500" y="0.500" width="9.5" height="9.5" fill="transparent" stroke="#8c8c8c" stroke-width="1"/><path d="M2.31 5.46l2.1 2.1l3.78-4.41" fill="none" stroke="#dcdcdc" stroke-width="1.100"/></svg>
<span class="t" style="left:60.4px;top:513.46px;font-size:9.8px;line-height:11.76px;color:#f2f2f2;font-weight:400;transform:scaleX(0.939);">water</span>
<div style="left:36px;top:519.6999999999999px;width:9px;height:1px;background:#4a4a4e;"></div>
<div style="left:229.1px;top:513.3px;width:59.7px;height:13px;background:#176c8c;border:1px solid #a8b0b4;box-sizing:border-box;"></div>
<svg style="left:45.9px;top:528.7px;" width="10.5" height="10.5" viewBox="0 0 10.5 10.5"><rect x="0.500" y="0.500" width="9.5" height="9.5" fill="transparent" stroke="#8c8c8c" stroke-width="1"/><path d="M2.31 5.46l2.1 2.1l3.78-4.41" fill="none" stroke="#dcdcdc" stroke-width="1.100"/></svg>
<span class="t" style="left:60.4px;top:527.76px;font-size:9.8px;line-height:11.76px;color:#f2f2f2;font-weight:400;transform:scaleX(0.946);">urban</span>
<div style="left:36px;top:534.0px;width:9px;height:1px;background:#4a4a4e;"></div>
<div style="left:229.1px;top:527.6px;width:59.7px;height:13px;background:#8c0c34;border:1px solid #a8b0b4;box-sizing:border-box;"></div>
<svg style="left:45.9px;top:543.0px;" width="10.5" height="10.5" viewBox="0 0 10.5 10.5"><rect x="0.500" y="0.500" width="9.5" height="9.5" fill="transparent" stroke="#8c8c8c" stroke-width="1"/><path d="M2.31 5.46l2.1 2.1l3.78-4.41" fill="none" stroke="#dcdcdc" stroke-width="1.100"/></svg>
<span class="t" style="left:60.4px;top:542.06px;font-size:9.8px;line-height:11.76px;color:#f2f2f2;font-weight:400;transform:scaleX(0.953);">bare soil</span>
<div style="left:36px;top:548.3px;width:9px;height:1px;background:#4a4a4e;"></div>
<div style="left:229.1px;top:541.9px;width:59.7px;height:13px;background:#ffc000;border:1px solid #a8b0b4;box-sizing:border-box;"></div>
<svg style="left:45.9px;top:557.3000000000001px;" width="10.5" height="10.5" viewBox="0 0 10.5 10.5"><rect x="0.500" y="0.500" width="9.5" height="9.5" fill="transparent" stroke="#8c8c8c" stroke-width="1"/><path d="M2.31 5.46l2.1 2.1l3.78-4.41" fill="none" stroke="#dcdcdc" stroke-width="1.100"/></svg>
<span class="t" style="left:60.4px;top:556.36px;font-size:9.8px;line-height:11.76px;color:#f2f2f2;font-weight:400;transform:scaleX(0.956);">grassland</span>
<div style="left:36px;top:562.6px;width:9px;height:1px;background:#4a4a4e;"></div>
<div style="left:229.1px;top:556.2px;width:59.7px;height:13px;background:#84c206;border:1px solid #a8b0b4;box-sizing:border-box;"></div>
<svg style="left:45.9px;top:571.6px;" width="10.5" height="10.5" viewBox="0 0 10.5 10.5"><rect x="0.500" y="0.500" width="9.5" height="9.5" fill="transparent" stroke="#8c8c8c" stroke-width="1"/><path d="M2.31 5.46l2.1 2.1l3.78-4.41" fill="none" stroke="#dcdcdc" stroke-width="1.100"/></svg>
<span class="t" style="left:60.4px;top:570.66px;font-size:9.8px;line-height:11.76px;color:#f2f2f2;font-weight:400;transform:scaleX(0.954);">forest</span>
<div style="left:36px;top:576.9px;width:9px;height:1px;background:#4a4a4e;"></div>
<div style="left:229.1px;top:570.5px;width:59.7px;height:13px;background:#128c78;border:1px solid #a8b0b4;box-sizing:border-box;"></div>
<span class="t" style="left:231.5px;top:499.16px;font-size:9.8px;line-height:11.76px;color:#f2f2f2;font-weight:400;transform:scaleX(0.939);">No Color</span>
<div style="left:21.5px;top:497px;width:1px;height:80px;background:#4a4a4e;"></div>
<div style="left:36px;top:497px;width:1px;height:80px;background:#4a4a4e;"></div>
<div style="left:21.5px;top:476.9px;width:8px;height:1px;background:#4a4a4e;"></div>
<div style="left:25px;top:591.3px;width:5px;height:1px;background:#4a4a4e;"></div>
<svg style="left:17.5px;top:587.3px;" width="7" height="9" viewBox="0 0 7 9"><path d="M1 0.800l4.500 3.500l-4.500 3.500z" fill="none" stroke="#9a9a9a" stroke-width="0.900"/></svg>
<span class="t" style="left:31.9px;top:585.16px;font-size:9.8px;line-height:11.76px;color:#f2f2f2;font-weight:400;transform:scaleX(0.957);">Hightlight colors</span>
<div style="left:334.5px;top:73px;width:372.5px;height:722px;background:#000;"></div>
<div style="left:691.5px;top:73px;width:15.5px;height:408px;background:#38383b;"></div>
<div style="left:335px;top:73.2px;width:356.5px;height:390.3px;background:#000;border:1px solid #c9a94f;box-sizing:border-box;border-top:2px solid #d0a844"></div>
<svg style="left:362.25px;top:117.8px;overflow:hidden" width="316.75" height="316.3" viewBox="0 0 316.75 316.3"><defs><filter id="tx" x="0" y="0" width="100%" height="100%" color-interpolation-filters="sRGB"><feTurbulence type="fractalNoise" baseFrequency="0.22 0.3" numOctaves="3" seed="5"/><feColorMatrix type="matrix" values="0 0 0 0 0.82  0 0 0 0 0.95  0 0 0 0 0.55  0 14 0 0 -7.6"/></filter></defs><g shape-rendering="crispEdges"><rect width="318.75" height="318.3" fill="#80b627"/><rect x="97.80" y="0.00" width="16.30" height="16.24" fill="#26929a"/><rect x="130.40" y="0.00" width="65.20" height="16.24" fill="#26929a"/><rect x="244.50" y="0.00" width="16.30" height="16.24" fill="#26929a"/><rect x="277.10" y="0.00" width="16.30" height="16.24" fill="#26929a"/><rect x="114.10" y="16.24" width="32.60" height="16.24" fill="#26929a"/><rect x="163.00" y="16.24" width="16.30" height="16.24" fill="#26929a"/><rect x="195.60" y="16.24" width="32.60" height="16.24" fill="#26929a"/><rect x="244.50" y="16.24" width="32.60" height="16.24" fill="#26929a"/><rect x="293.40" y="16.24" width="16.30" height="16.24" fill="#26929a"/><rect x="309.70" y="16.24" width="7.05" height="16.24" fill="#e8b830"/><rect x="65.20" y="32.48" width="32.60" height="16.24" fill="#922a66"/><rect x="195.60" y="32.48" width="65.20" height="16.24" fill="#26929a"/><rect x="293.40" y="32.48" width="16.30" height="16.24" fill="#26929a"/><rect x="309.70" y="32.48" width="7.05" height="16.24" fill="#2a8aa4"/><rect x="32.60" y="48.72" width="16.30" height="16.24" fill="#922a66"/><rect x="81.50" y="48.72" width="16.30" height="16.24" fill="#922a66"/><rect x="146.70" y="48.72" width="16.30" height="16.24" fill="#922a66"/><rect x="195.60" y="48.72" width="81.50" height="16.24" fill="#26929a"/><rect x="293.40" y="48.72" width="16.30" height="16.24" fill="#26929a"/><rect x="309.70" y="48.72" width="7.05" height="16.24" fill="#2a8aa4"/><rect x="65.20" y="64.96" width="32.60" height="16.24" fill="#26929a"/><rect x="244.50" y="64.96" width="65.20" height="16.24" fill="#26929a"/><rect x="309.70" y="64.96" width="7.05" height="16.24" fill="#2a8aa4"/><rect x="130.40" y="81.20" width="32.60" height="16.24" fill="#26929a"/><rect x="228.20" y="81.20" width="16.30" height="16.24" fill="#26929a"/><rect x="81.50" y="97.44" width="16.30" height="16.24" fill="#26929a"/><rect x="146.70" y="97.44" width="16.30" height="16.24" fill="#922a66"/><rect x="228.20" y="97.44" width="32.60" height="16.24" fill="#26929a"/><rect x="293.40" y="97.44" width="23.35" height="16.24" fill="#26929a"/><rect x="16.30" y="113.68" width="16.30" height="16.24" fill="#922a66"/><rect x="195.60" y="113.68" width="16.30" height="16.24" fill="#26929a"/><rect x="309.70" y="113.68" width="7.05" height="16.24" fill="#26929a"/><rect x="97.80" y="129.92" width="16.30" height="16.24" fill="#922a66"/><rect x="130.40" y="129.92" width="16.30" height="16.24" fill="#26929a"/><rect x="179.30" y="129.92" width="16.30" height="16.24" fill="#26929a"/><rect x="211.90" y="129.92" width="16.30" height="16.24" fill="#26929a"/><rect x="81.50" y="146.16" width="16.30" height="16.24" fill="#e8b830"/><rect x="130.40" y="146.16" width="16.30" height="16.24" fill="#26929a"/><rect x="163.00" y="146.16" width="16.30" height="16.24" fill="#26929a"/><rect x="293.40" y="146.16" width="23.35" height="16.24" fill="#26929a"/><rect x="48.90" y="162.40" width="16.30" height="16.24" fill="#26929a"/><rect x="97.80" y="162.40" width="16.30" height="16.24" fill="#26929a"/><rect x="130.40" y="162.40" width="32.60" height="16.24" fill="#26929a"/><rect x="179.30" y="162.40" width="16.30" height="16.24" fill="#26929a"/><rect x="130.40" y="178.64" width="16.30" height="16.24" fill="#26929a"/><rect x="244.50" y="178.64" width="16.30" height="16.24" fill="#26929a"/><rect x="309.70" y="178.64" width="7.05" height="16.24" fill="#26929a"/><rect x="179.30" y="194.88" width="16.30" height="16.24" fill="#922a66"/><rect x="211.90" y="194.88" width="16.30" height="16.24" fill="#26929a"/><rect x="0.00" y="211.12" width="16.30" height="16.24" fill="#e8b830"/><rect x="114.10" y="211.12" width="32.60" height="16.24" fill="#26929a"/><rect x="163.00" y="211.12" width="16.30" height="16.24" fill="#26929a"/><rect x="228.20" y="211.12" width="16.30" height="16.24" fill="#26929a"/><rect x="260.80" y="211.12" width="16.30" height="16.24" fill="#26929a"/><rect x="0.00" y="227.36" width="16.30" height="16.24" fill="#26929a"/><rect x="114.10" y="227.36" width="16.30" height="16.24" fill="#26929a"/><rect x="146.70" y="227.36" width="16.30" height="16.24" fill="#26929a"/><rect x="195.60" y="227.36" width="16.30" height="16.24" fill="#922a66"/><rect x="0.00" y="243.60" width="16.30" height="16.24" fill="#26929a"/><rect x="195.60" y="243.60" width="16.30" height="16.24" fill="#26929a"/><rect x="293.40" y="243.60" width="16.30" height="16.24" fill="#26929a"/><rect x="0.00" y="259.84" width="16.30" height="16.24" fill="#26929a"/><rect x="16.30" y="259.84" width="16.30" height="16.24" fill="#e8b830"/><rect x="163.00" y="259.84" width="16.30" height="16.24" fill="#26929a"/><rect x="277.10" y="259.84" width="16.30" height="16.24" fill="#922a66"/><rect x="0.00" y="276.08" width="16.30" height="16.24" fill="#26929a"/><rect x="16.30" y="276.08" width="16.30" height="16.24" fill="#922a66"/><rect x="277.10" y="276.08" width="16.30" height="16.24" fill="#922a66"/><rect x="0.00" y="292.32" width="16.30" height="16.24" fill="#26929a"/><rect x="16.30" y="292.32" width="48.90" height="16.24" fill="#922a66"/><rect x="146.70" y="292.32" width="16.30" height="16.24" fill="#922a66"/><rect x="16.30" y="308.56" width="16.30" height="7.74" fill="#922a66"/><rect x="48.90" y="308.56" width="16.30" height="7.74" fill="#922a66"/><rect x="97.80" y="308.56" width="16.30" height="7.74" fill="#26929a"/><rect x="163.00" y="308.56" width="16.30" height="7.74" fill="#922a66"/><rect x="228.20" y="308.56" width="16.30" height="7.74" fill="#26929a"/><rect x="309.70" y="308.56" width="7.05" height="7.74" fill="#e8b830"/></g><rect x="73.0" y="153.0" width="5.9" height="1.8" fill="#a6d45a" opacity="0.45"/><rect x="81.4" y="157.3" width="2.3" height="3.5" fill="#a6d45a" opacity="0.45"/><rect x="61.5" y="158.7" width="2.4" height="1.9" fill="#a6d45a" opacity="0.45"/><rect x="77.0" y="166.5" width="2.7" height="2.4" fill="#a6d45a" opacity="0.45"/><rect x="85.1" y="169.0" width="5.5" height="3.1" fill="#a6d45a" opacity="0.45"/><rect x="99.1" y="150.9" width="7.2" height="2.7" fill="#a6d45a" opacity="0.45"/><rect x="65.8" y="152.4" width="3.9" height="4.8" fill="#a6d45a" opacity="0.45"/><rect x="67.2" y="161.6" width="5.8" height="3.0" fill="#a6d45a" opacity="0.45"/><rect x="81.9" y="151.3" width="2.4" height="2.3" fill="#a6d45a" opacity="0.45"/><rect x="87.2" y="158.6" width="3.9" height="3.8" fill="#a6d45a" opacity="0.45"/><rect x="78.1" y="156.0" width="6.8" height="4.3" fill="#a6d45a" opacity="0.45"/><rect x="69.8" y="161.5" width="5.2" height="5.0" fill="#a6d45a" opacity="0.45"/><rect x="89.2" y="155.8" width="7.9" height="2.0" fill="#a6d45a" opacity="0.45"/><rect x="76.7" y="165.1" width="2.9" height="3.5" fill="#a6d45a" opacity="0.45"/><rect x="152.4" y="146.7" width="6.6" height="3.8" fill="#a6d45a" opacity="0.45"/><rect x="202.5" y="137.8" width="6.2" height="3.9" fill="#a6d45a" opacity="0.45"/><rect x="184.8" y="141.4" width="7.0" height="5.3" fill="#a6d45a" opacity="0.45"/><rect x="178.4" y="146.6" width="2.4" height="4.3" fill="#a6d45a" opacity="0.45"/><rect x="188.8" y="154.8" width="6.9" height="2.6" fill="#a6d45a" opacity="0.45"/><rect x="173.1" y="146.7" width="2.1" height="3.3" fill="#a6d45a" opacity="0.45"/><rect x="160.1" y="132.9" width="2.4" height="4.6" fill="#a6d45a" opacity="0.45"/><rect x="157.8" y="136.2" width="4.3" height="5.0" fill="#a6d45a" opacity="0.45"/><rect x="154.8" y="141.2" width="5.3" height="5.0" fill="#a6d45a" opacity="0.45"/><rect x="199.2" y="151.6" width="3.7" height="3.2" fill="#a6d45a" opacity="0.45"/><rect x="171.5" y="152.1" width="7.7" height="2.1" fill="#a6d45a" opacity="0.45"/><rect x="160.6" y="135.8" width="3.4" height="3.4" fill="#a6d45a" opacity="0.45"/><rect x="185.3" y="136.6" width="2.0" height="3.2" fill="#a6d45a" opacity="0.45"/><rect x="172.2" y="144.2" width="7.7" height="4.3" fill="#a6d45a" opacity="0.45"/><rect x="225.8" y="102.4" width="6.1" height="1.7" fill="#a6d45a" opacity="0.45"/><rect x="245.0" y="105.6" width="7.2" height="4.7" fill="#a6d45a" opacity="0.45"/><rect x="219.6" y="98.0" width="2.6" height="4.0" fill="#a6d45a" opacity="0.45"/><rect x="203.1" y="91.3" width="3.3" height="2.1" fill="#a6d45a" opacity="0.45"/><rect x="217.0" y="91.1" width="2.0" height="2.1" fill="#a6d45a" opacity="0.45"/><rect x="205.1" y="97.3" width="2.2" height="5.0" fill="#a6d45a" opacity="0.45"/><rect x="230.7" y="93.0" width="3.5" height="2.9" fill="#a6d45a" opacity="0.45"/><rect x="218.2" y="92.5" width="7.1" height="5.5" fill="#a6d45a" opacity="0.45"/><rect x="223.3" y="99.7" width="2.5" height="1.9" fill="#a6d45a" opacity="0.45"/><rect x="217.1" y="95.3" width="7.0" height="2.1" fill="#a6d45a" opacity="0.45"/><rect x="201.2" y="109.0" width="5.2" height="2.1" fill="#a6d45a" opacity="0.45"/><rect x="227.2" y="90.5" width="5.2" height="5.4" fill="#a6d45a" opacity="0.45"/><rect x="243.2" y="103.9" width="3.6" height="3.0" fill="#a6d45a" opacity="0.45"/><rect x="208.4" y="105.4" width="5.2" height="4.6" fill="#a6d45a" opacity="0.45"/><rect x="109.8" y="223.9" width="6.9" height="5.4" fill="#a6d45a" opacity="0.45"/><rect x="141.2" y="247.2" width="6.9" height="4.5" fill="#a6d45a" opacity="0.45"/><rect x="103.6" y="235.7" width="4.1" height="1.6" fill="#a6d45a" opacity="0.45"/><rect x="91.7" y="226.2" width="3.6" height="4.3" fill="#a6d45a" opacity="0.45"/><rect x="147.4" y="232.9" width="7.6" height="5.5" fill="#a6d45a" opacity="0.45"/><rect x="147.3" y="229.6" width="3.3" height="2.4" fill="#a6d45a" opacity="0.45"/><rect x="101.8" y="223.2" width="5.7" height="5.1" fill="#a6d45a" opacity="0.45"/><rect x="140.4" y="234.2" width="5.9" height="4.7" fill="#a6d45a" opacity="0.45"/><rect x="95.1" y="241.4" width="7.5" height="4.6" fill="#a6d45a" opacity="0.45"/><rect x="135.0" y="234.1" width="3.1" height="4.7" fill="#a6d45a" opacity="0.45"/><rect x="110.0" y="247.0" width="7.8" height="3.1" fill="#a6d45a" opacity="0.45"/><rect x="114.1" y="252.9" width="6.3" height="2.2" fill="#a6d45a" opacity="0.45"/><rect x="97.6" y="221.0" width="7.4" height="4.7" fill="#a6d45a" opacity="0.45"/><rect x="98.8" y="248.1" width="7.9" height="4.1" fill="#a6d45a" opacity="0.45"/><rect x="251.0" y="277.4" width="2.8" height="1.6" fill="#a6d45a" opacity="0.45"/><rect x="288.3" y="282.5" width="5.2" height="5.2" fill="#a6d45a" opacity="0.45"/><rect x="256.0" y="293.6" width="7.0" height="2.3" fill="#a6d45a" opacity="0.45"/><rect x="245.1" y="264.6" width="3.4" height="3.8" fill="#a6d45a" opacity="0.45"/><rect x="245.6" y="271.0" width="2.8" height="5.1" fill="#a6d45a" opacity="0.45"/><rect x="251.2" y="272.9" width="5.5" height="5.1" fill="#a6d45a" opacity="0.45"/><rect x="255.2" y="295.9" width="5.0" height="3.6" fill="#a6d45a" opacity="0.45"/><rect x="261.4" y="250.9" width="4.6" height="2.2" fill="#a6d45a" opacity="0.45"/><rect x="230.2" y="290.0" width="3.0" height="3.4" fill="#a6d45a" opacity="0.45"/><rect x="273.5" y="277.8" width="4.0" height="3.6" fill="#a6d45a" opacity="0.45"/><rect x="263.3" y="289.2" width="2.6" height="3.7" fill="#a6d45a" opacity="0.45"/><rect x="244.9" y="263.8" width="6.6" height="3.5" fill="#a6d45a" opacity="0.45"/><rect x="263.7" y="288.0" width="7.5" height="3.3" fill="#a6d45a" opacity="0.45"/><rect x="266.8" y="275.3" width="5.1" height="4.3" fill="#a6d45a" opacity="0.45"/><rect x="283.1" y="236.3" width="4.9" height="5.3" fill="#a6d45a" opacity="0.45"/><rect x="293.0" y="250.1" width="7.7" height="2.5" fill="#a6d45a" opacity="0.45"/><rect x="287.4" y="252.7" width="7.0" height="2.0" fill="#a6d45a" opacity="0.45"/><rect x="269.9" y="232.7" width="2.4" height="2.5" fill="#a6d45a" opacity="0.45"/><rect x="267.9" y="241.8" width="6.7" height="5.1" fill="#a6d45a" opacity="0.45"/><rect x="271.2" y="243.6" width="6.0" height="2.1" fill="#a6d45a" opacity="0.45"/><rect x="300.3" y="253.7" width="3.3" height="5.3" fill="#a6d45a" opacity="0.45"/><rect x="280.9" y="234.5" width="7.9" height="4.8" fill="#a6d45a" opacity="0.45"/><rect x="271.5" y="232.3" width="5.1" height="2.9" fill="#a6d45a" opacity="0.45"/><rect x="272.8" y="227.7" width="6.3" height="1.6" fill="#a6d45a" opacity="0.45"/><rect x="287.2" y="232.6" width="2.1" height="2.8" fill="#a6d45a" opacity="0.45"/><rect x="290.0" y="235.5" width="2.4" height="5.4" fill="#a6d45a" opacity="0.45"/><rect x="296.5" y="253.9" width="2.6" height="2.6" fill="#a6d45a" opacity="0.45"/><rect x="266.6" y="246.2" width="3.6" height="2.0" fill="#a6d45a" opacity="0.45"/><rect x="46.9" y="127.3" width="6.9" height="2.5" fill="#a6d45a" opacity="0.45"/><rect x="36.0" y="127.6" width="5.4" height="4.3" fill="#a6d45a" opacity="0.45"/><rect x="33.6" y="101.7" width="6.1" height="3.2" fill="#a6d45a" opacity="0.45"/><rect x="32.9" y="128.2" width="5.8" height="4.7" fill="#a6d45a" opacity="0.45"/><rect x="33.3" y="125.7" width="2.4" height="5.0" fill="#a6d45a" opacity="0.45"/><rect x="48.2" y="110.2" width="5.3" height="5.2" fill="#a6d45a" opacity="0.45"/><rect x="40.7" y="103.9" width="5.2" height="2.5" fill="#a6d45a" opacity="0.45"/><rect x="34.4" y="104.8" width="2.3" height="2.3" fill="#a6d45a" opacity="0.45"/><rect x="42.5" y="109.2" width="6.6" height="2.7" fill="#a6d45a" opacity="0.45"/><rect x="50.0" y="105.3" width="4.1" height="1.6" fill="#a6d45a" opacity="0.45"/><rect x="40.0" y="100.5" width="6.4" height="3.7" fill="#a6d45a" opacity="0.45"/><rect x="37.6" y="114.2" width="7.6" height="1.9" fill="#a6d45a" opacity="0.45"/><rect x="62.8" y="113.0" width="5.0" height="4.8" fill="#a6d45a" opacity="0.45"/><rect x="45.7" y="115.2" width="6.1" height="5.4" fill="#a6d45a" opacity="0.45"/><rect x="130.3" y="109.9" width="6.2" height="4.0" fill="#a6d45a" opacity="0.45"/><rect x="132.1" y="80.9" width="2.3" height="2.0" fill="#a6d45a" opacity="0.45"/><rect x="122.1" y="104.5" width="3.5" height="2.2" fill="#a6d45a" opacity="0.45"/><rect x="122.5" y="110.5" width="7.2" height="4.2" fill="#a6d45a" opacity="0.45"/><rect x="128.5" y="74.5" width="3.8" height="3.3" fill="#a6d45a" opacity="0.45"/><rect x="124.7" y="86.7" width="3.6" height="5.3" fill="#a6d45a" opacity="0.45"/><rect x="149.2" y="92.8" width="3.5" height="5.4" fill="#a6d45a" opacity="0.45"/><rect x="129.3" y="81.4" width="2.0" height="3.0" fill="#a6d45a" opacity="0.45"/><rect x="134.2" y="90.2" width="3.2" height="3.5" fill="#a6d45a" opacity="0.45"/><rect x="120.1" y="75.9" width="2.5" height="3.1" fill="#a6d45a" opacity="0.45"/><rect x="121.3" y="61.3" width="3.8" height="2.4" fill="#a6d45a" opacity="0.45"/><rect x="137.6" y="91.8" width="6.5" height="4.1" fill="#a6d45a" opacity="0.45"/><rect x="141.5" y="112.7" width="4.3" height="2.8" fill="#a6d45a" opacity="0.45"/><rect x="149.5" y="69.0" width="6.3" height="4.1" fill="#a6d45a" opacity="0.45"/><rect x="162.2" y="225.1" width="7.4" height="4.0" fill="#a6d45a" opacity="0.45"/><rect x="196.7" y="224.4" width="2.8" height="3.6" fill="#a6d45a" opacity="0.45"/><rect x="185.2" y="225.0" width="6.8" height="4.8" fill="#a6d45a" opacity="0.45"/><rect x="189.2" y="226.8" width="6.1" height="4.3" fill="#a6d45a" opacity="0.45"/><rect x="171.5" y="200.9" width="2.8" height="2.9" fill="#a6d45a" opacity="0.45"/><rect x="165.2" y="225.1" width="5.4" height="4.0" fill="#a6d45a" opacity="0.45"/><rect x="191.3" y="220.4" width="4.9" height="1.5" fill="#a6d45a" opacity="0.45"/><rect x="199.9" y="222.4" width="5.0" height="3.6" fill="#a6d45a" opacity="0.45"/><rect x="193.0" y="202.0" width="6.4" height="2.5" fill="#a6d45a" opacity="0.45"/><rect x="163.7" y="208.0" width="6.4" height="2.3" fill="#a6d45a" opacity="0.45"/><rect x="197.0" y="229.3" width="5.0" height="3.0" fill="#a6d45a" opacity="0.45"/><rect x="184.0" y="220.5" width="6.6" height="4.0" fill="#a6d45a" opacity="0.45"/><rect x="192.1" y="202.3" width="2.9" height="2.5" fill="#a6d45a" opacity="0.45"/><rect x="197.2" y="209.1" width="5.4" height="1.5" fill="#a6d45a" opacity="0.45"/><rect x="42.4" y="258.1" width="6.0" height="4.3" fill="#a6d45a" opacity="0.45"/><rect x="67.0" y="258.7" width="5.1" height="3.4" fill="#a6d45a" opacity="0.45"/><rect x="58.7" y="253.6" width="7.4" height="2.3" fill="#a6d45a" opacity="0.45"/><rect x="79.1" y="278.1" width="2.1" height="3.3" fill="#a6d45a" opacity="0.45"/><rect x="72.8" y="279.0" width="4.7" height="2.6" fill="#a6d45a" opacity="0.45"/><rect x="48.4" y="278.4" width="3.3" height="3.8" fill="#a6d45a" opacity="0.45"/><rect x="45.7" y="265.7" width="7.7" height="2.0" fill="#a6d45a" opacity="0.45"/><rect x="72.8" y="265.3" width="7.3" height="4.3" fill="#a6d45a" opacity="0.45"/><rect x="49.3" y="276.9" width="4.9" height="1.6" fill="#a6d45a" opacity="0.45"/><rect x="40.1" y="264.8" width="4.7" height="2.7" fill="#a6d45a" opacity="0.45"/><rect x="45.6" y="260.3" width="3.9" height="4.9" fill="#a6d45a" opacity="0.45"/><rect x="40.1" y="272.5" width="7.0" height="2.0" fill="#a6d45a" opacity="0.45"/><rect x="77.1" y="271.4" width="7.4" height="2.7" fill="#a6d45a" opacity="0.45"/><rect x="54.9" y="261.8" width="8.0" height="3.9" fill="#a6d45a" opacity="0.45"/><rect x="290.8" y="132.8" width="3.7" height="1.7" fill="#a6d45a" opacity="0.45"/><rect x="283.1" y="145.0" width="3.7" height="5.2" fill="#a6d45a" opacity="0.45"/><rect x="287.5" y="128.0" width="5.1" height="2.3" fill="#a6d45a" opacity="0.45"/><rect x="291.2" y="148.7" width="7.3" height="4.7" fill="#a6d45a" opacity="0.45"/><rect x="298.9" y="147.4" width="7.6" height="3.7" fill="#a6d45a" opacity="0.45"/><rect x="301.6" y="121.5" width="6.4" height="3.3" fill="#a6d45a" opacity="0.45"/><rect x="302.6" y="139.3" width="3.7" height="1.7" fill="#a6d45a" opacity="0.45"/><rect x="307.8" y="123.8" width="4.8" height="2.9" fill="#a6d45a" opacity="0.45"/><rect x="288.9" y="142.2" width="7.9" height="2.5" fill="#a6d45a" opacity="0.45"/><rect x="299.7" y="129.0" width="5.3" height="3.1" fill="#a6d45a" opacity="0.45"/><rect x="285.0" y="124.8" width="3.2" height="5.1" fill="#a6d45a" opacity="0.45"/><rect x="294.9" y="126.6" width="7.4" height="5.5" fill="#a6d45a" opacity="0.45"/><rect x="293.5" y="124.2" width="3.2" height="1.9" fill="#a6d45a" opacity="0.45"/><rect x="290.3" y="122.7" width="3.4" height="2.5" fill="#a6d45a" opacity="0.45"/><rect x="237.8" y="177.7" width="6.5" height="3.2" fill="#a6d45a" opacity="0.45"/><rect x="231.6" y="170.5" width="4.3" height="2.9" fill="#a6d45a" opacity="0.45"/><rect x="217.5" y="165.6" width="7.8" height="2.0" fill="#a6d45a" opacity="0.45"/><rect x="235.1" y="172.6" width="7.2" height="2.4" fill="#a6d45a" opacity="0.45"/><rect x="225.8" y="165.0" width="4.4" height="3.3" fill="#a6d45a" opacity="0.45"/><rect x="253.2" y="177.0" width="7.2" height="1.6" fill="#a6d45a" opacity="0.45"/><rect x="216.3" y="174.2" width="7.4" height="3.4" fill="#a6d45a" opacity="0.45"/><rect x="238.5" y="160.0" width="4.3" height="5.2" fill="#a6d45a" opacity="0.45"/><rect x="248.0" y="177.1" width="7.8" height="2.5" fill="#a6d45a" opacity="0.45"/><rect x="219.4" y="163.1" width="5.1" height="4.2" fill="#a6d45a" opacity="0.45"/><rect x="252.7" y="174.4" width="5.9" height="4.6" fill="#a6d45a" opacity="0.45"/><rect x="233.3" y="171.0" width="2.2" height="4.6" fill="#a6d45a" opacity="0.45"/><rect x="224.3" y="178.4" width="5.9" height="2.7" fill="#a6d45a" opacity="0.45"/><rect x="220.1" y="165.0" width="5.8" height="4.3" fill="#a6d45a" opacity="0.45"/><path d="M100 0C95 40 60 70 30 90S5 110 0 118M98 20C70 80 55 150 60 200S80 260 95 300M140 40C170 90 230 130 260 180" fill="none" stroke="#b4dc64" stroke-width="1" opacity="0.45"/><rect width="316.75" height="316.3" filter="url(#tx)" opacity="0.3"/><g shape-rendering="crispEdges"><rect x="0.00" y="0.00" width="48.90" height="16.24" fill="#1a6888"/><rect x="0.00" y="16.24" width="48.90" height="16.24" fill="#1a6888"/><rect x="0.00" y="32.48" width="48.90" height="16.24" fill="#1a6888"/><rect x="0.00" y="48.72" width="32.60" height="16.24" fill="#1a6888"/><rect x="0.00" y="64.96" width="16.30" height="16.24" fill="#1a6888"/></g><rect x="49.40" y="276.38" width="15.80" height="15.74" fill="none" stroke="#e2301c" stroke-width="1.100"/></svg>
<span class="t" style="left:658.3px;top:447.59px;font-size:13px;line-height:15.6px;color:#f4f4f4;font-weight:400;transform:scaleX(1.054);">main</span>
<div style="left:335px;top:463.5px;width:372px;height:17.5px;background:#38383b;"></div>
<div style="left:335.5px;top:465px;width:356px;height:9px;background:#3e3e41;"></div>
<svg style="left:338px;top:466px;" width="6" height="7" viewBox="0 0 6 7"><path d="M5 0.500v6l-4.500-3z" fill="#4a4a4e"/></svg>
<svg style="left:682px;top:466px;" width="6" height="7" viewBox="0 0 6 7"><path d="M1 0.500v6l4.500-3z" fill="#4a4a4e"/></svg>
<div style="left:707px;top:72px;width:2.6px;height:368px;background:#3e3e41;"></div>
<div style="left:706.7px;top:440px;width:3.3px;height:355px;background:#454548;"></div>
<svg style="left:362px;top:534px;" width="317" height="259" viewBox="0 0 317 259"><defs><filter id="rough" x="-5%" y="-5%" width="110%" height="110%" color-interpolation-filters="sRGB"><feTurbulence type="fractalNoise" baseFrequency="0.09" numOctaves="3" seed="4" result="n"/><feDisplacementMap in="SourceGraphic" in2="n" scale="14" xChannelSelector="R" yChannelSelector="G"/></filter><filter id="spk" x="0" y="0" width="100%" height="100%" color-interpolation-filters="sRGB"><feTurbulence type="fractalNoise" baseFrequency="0.07 0.1" numOctaves="4" seed="11"/><feColorMatrix type="matrix" values="0 0 0 0 0.55  0 0 0 0 0.753  0 0 0 0 0.14  0 40 0 0 -24.3"/></filter><filter id="spk2" x="0" y="0" width="100%" height="100%" color-interpolation-filters="sRGB"><feTurbulence type="fractalNoise" baseFrequency="0.1 0.14" numOctaves="3" seed="23"/><feColorMatrix type="matrix" values="0 0 0 0 0.086  0 0 0 0 0.55  0 0 0 0 0.486  40 0 0 0 -25.2"/></filter><clipPath id="mc"><rect width="317" height="259"/></clipPath></defs><g clip-path="url(#mc)"><rect width="317" height="259" fill="#168c7c"/><rect width="317" height="259" filter="url(#spk)"/><g filter="url(#rough)"><polygon points="121.7,2.3 135.2,0.0 178.0,0.0 173.5,6.8 157.7,13.5 153.2,24.8 144.2,40.6 132.9,36.0 126.2,22.5 119.4,13.5" fill="#8cc024"/><polygon points="157.7,9.0 171.2,6.8 180.2,13.5 178.0,29.3 166.7,33.8 157.7,24.8" fill="#8cc024"/><polygon points="187.0,4.5 198.3,3.4 200.5,13.5 191.5,22.5 185.9,15.8" fill="#8cc024"/><polygon points="211.8,13.5 225.3,6.8 238.8,13.5 242.2,29.3 234.3,36.0 223.0,27.0 211.8,24.8" fill="#8cc024"/><polygon points="234.3,0.0 265.9,0.0 268.1,18.0 261.3,38.3 247.8,56.3 236.6,67.6 227.6,58.6 238.8,42.8 243.3,22.5" fill="#8cc024"/><polygon points="196.0,29.3 214.0,31.5 216.3,45.1 202.8,51.8 193.8,42.8" fill="#8cc024"/><polygon points="171.2,56.3 189.3,58.6 196.0,74.3 180.2,81.1 169.0,72.1" fill="#8cc024"/><polygon points="290.6,49.6 301.9,47.3 303.0,74.3 292.9,85.6 283.9,74.3 288.4,60.8" fill="#8cc024"/><polygon points="270.4,31.5 277.1,29.3 278.2,45.1 270.4,47.3" fill="#8cc024"/><polygon points="277.1,0.0 315.4,0.0 315.4,6.8 292.9,11.3 279.4,9.0" fill="#8cc024"/><polygon points="130.7,85.6 146.4,83.4 153.2,99.1 146.4,108.1 135.2,105.9" fill="#8cc024"/><polygon points="87.9,99.1 99.1,96.9 105.9,117.2 126.2,112.7 135.2,121.7 130.7,130.0 90.1,130.0" fill="#8cc024"/><polygon points="247.8,105.9 265.9,101.4 270.4,117.2 256.8,126.2 245.6,119.4" fill="#8cc024"/><polygon points="301.9,90.1 317.0,87.9 317.0,121.7 304.2,119.4" fill="#8cc024"/><polygon points="198.3,112.7 209.5,117.2 211.8,130.0 198.3,130.0" fill="#8cc024"/><polygon points="144.2,45.1 157.7,47.3 155.5,58.6 141.9,56.3" fill="#8cc024"/><polygon points="252.3,67.6 265.9,65.3 270.4,76.6 259.1,81.1" fill="#8cc024"/><polygon points="6.8,99.1 18.0,94.6 27.0,105.9 24.8,121.7 9.0,126.2" fill="#8cc024"/><polygon points="56.3,74.3 67.6,72.1 69.8,81.1 58.6,85.6" fill="#8cc024"/><polygon points="90.1,130.0 105.9,130.0 108.1,139.0 99.1,152.5 90.1,148.0" fill="#8cc024"/><polygon points="74.3,157.0 105.9,152.5 108.1,168.3 90.1,172.8 72.1,168.3" fill="#8cc024"/><polygon points="157.7,154.8 180.2,152.5 196.0,159.3 198.3,175.1 193.8,193.1 180.2,186.3 166.7,175.1 155.5,168.3" fill="#8cc024"/><polygon points="128.4,172.8 146.4,168.3 153.2,179.6 148.7,197.6 139.7,204.3 130.7,188.6" fill="#8cc024"/><polygon points="211.8,195.3 225.3,193.1 227.6,204.3 216.3,215.6 207.3,208.9" fill="#8cc024"/><polygon points="265.9,208.9 277.1,211.1 279.4,224.6 268.1,226.9" fill="#8cc024"/><polygon points="283.9,152.5 290.6,154.8 299.7,175.1 292.9,177.3 283.9,163.8" fill="#8cc024"/><polygon points="0.0,204.3 13.5,206.6 18.0,224.6 13.5,256.2 0.0,256.2" fill="#8cc024"/><polygon points="18.0,240.4 36.0,242.7 38.3,256.2 18.0,256.2" fill="#8cc024"/><polygon points="139.7,220.1 157.7,222.4 178.0,235.9 175.7,242.7 155.5,231.4 139.7,226.9" fill="#8cc024"/><polygon points="36.0,195.3 45.1,197.6 42.8,206.6 33.8,204.3" fill="#8cc024"/><polygon points="180.2,139.0 202.8,141.3 205.0,152.5 191.5,154.8" fill="#8cc024"/><polygon points="211.8,134.5 225.3,139.0 227.6,152.5 216.3,148.0" fill="#8cc024"/><polygon points="58.6,226.9 67.6,229.1 69.8,256.2 56.3,256.2" fill="#8cc024"/><polygon points="313.2,172.8 317.0,172.8 317.0,190.8 313.2,188.6" fill="#8cc024"/><polygon points="45.1,154.8 67.6,157.0 69.8,168.3 49.6,170.6" fill="#8cc024"/><polygon points="126.2,134.5 144.2,136.8 146.4,150.3 135.2,154.8" fill="#8cc024"/><polygon points="0.0,170.6 9.0,172.8 9.0,181.8 0.0,182.9" fill="#f0c428"/><polygon points="29.3,184.1 36.0,188.6 31.5,195.3 24.8,190.8" fill="#f0c428"/><polygon points="22.5,213.4 33.8,211.1 38.3,222.4 27.0,229.1" fill="#f0c428"/><polygon points="0.0,224.6 9.0,222.4 6.8,235.9 0.0,235.9" fill="#f0c428"/><polygon points="214.0,179.6 225.3,177.3 223.0,186.3 214.0,186.3" fill="#f0c428"/><polygon points="31.5,251.7 49.6,252.8 51.8,258.4 33.8,258.4" fill="#f0c428"/><polygon points="60.8,235.9 67.6,235.9 67.6,247.2 60.8,247.2" fill="#f0c428"/><polygon points="126.2,74.3 144.2,78.9 141.9,84.5 126.2,78.9" fill="#f0c428"/><polygon points="146.4,60.8 155.5,63.1 153.2,69.8 146.4,67.6" fill="#f0c428"/><polygon points="268.1,94.6 272.6,93.5 271.5,101.4 268.1,101.4" fill="#f0c428"/><polygon points="9.0,103.6 15.8,102.5 15.8,108.1 9.0,108.1" fill="#f0c428"/><polygon points="110.4,172.8 122.8,172.8 122.8,186.3 110.4,186.3" fill="#9c2450"/><polygon points="74.3,229.1 85.6,230.3 85.6,242.7 74.3,242.7" fill="#9c2450"/><polygon points="87.9,240.4 96.9,241.5 96.9,256.2 87.9,256.2" fill="#9c2450"/><polygon points="241.1,244.9 268.1,244.9 268.1,258.4 241.1,258.4" fill="#9c2450"/><polygon points="18.0,181.8 24.8,181.8 24.8,190.8 18.0,190.8" fill="#9c2450"/><polygon points="272.6,154.8 279.4,155.9 279.4,163.8 272.6,163.8" fill="#9c2450"/><polygon points="274.9,188.6 281.6,189.7 279.4,199.8 273.7,198.7" fill="#9c2450"/><polygon points="0.0,132.3 6.8,133.4 6.8,143.5 0.0,143.5" fill="#9c2450"/><polygon points="295.1,222.4 301.9,222.4 301.9,231.4 295.1,231.4" fill="#9c2450"/><polygon points="105.9,65.3 113.8,65.3 113.8,73.2 105.9,73.2" fill="#9c2450"/><polygon points="161.1,72.1 174.6,71.0 174.6,78.9 161.1,78.9" fill="#9c2450"/><polygon points="181.4,73.2 188.1,74.3 188.1,80.0 181.4,79.3" fill="#9c2450"/><polygon points="263.6,113.8 269.2,113.8 269.2,121.7 263.6,121.7" fill="#9c2450"/><polygon points="160.0,27.0 164.5,27.0 164.5,32.7 160.0,32.7" fill="#9c2450"/></g><rect x="109.2" y="63.3" width="2.9" height="3.0" fill="#c8a030"/><rect x="177.5" y="87.3" width="2.2" height="4.0" fill="#c8a030"/><rect x="154.7" y="75.0" width="2.2" height="1.9" fill="#8cc024"/><rect x="217.9" y="115.4" width="2.0" height="3.9" fill="#8cc024"/><rect x="88.9" y="38.3" width="2.9" height="3.3" fill="#f0c428"/><rect x="208.3" y="95.9" width="3.7" height="2.9" fill="#9c2450"/><rect x="229.1" y="122.4" width="1.9" height="2.0" fill="#8cc024"/><rect x="215.8" y="121.4" width="2.8" height="3.6" fill="#f0c428"/><rect x="159.1" y="87.8" width="4.2" height="3.2" fill="#8cc024"/><rect x="232.7" y="98.0" width="3.6" height="2.3" fill="#8cc024"/><rect x="158.3" y="85.6" width="3.4" height="4.0" fill="#8cc024"/><rect x="125.8" y="72.9" width="1.8" height="3.5" fill="#9c2450"/><rect x="145.0" y="82.3" width="4.1" height="1.6" fill="#9c2450"/><rect x="182.9" y="95.4" width="3.2" height="3.8" fill="#f0c428"/><rect x="122.0" y="70.0" width="1.7" height="3.0" fill="#8cc024"/><rect x="87.0" y="57.0" width="2.3" height="3.2" fill="#c8a030"/><rect x="223.4" y="124.1" width="4.2" height="2.4" fill="#8cc024"/><rect x="139.1" y="79.9" width="3.5" height="1.8" fill="#c8a030"/><rect x="228.0" y="112.9" width="4.3" height="2.6" fill="#8cc024"/><rect x="116.7" y="72.6" width="4.5" height="2.3" fill="#9c2450"/><rect x="133.3" y="73.1" width="2.9" height="3.2" fill="#f0c428"/><rect x="129.8" y="62.3" width="3.3" height="3.9" fill="#8cc024"/><rect x="76.5" y="56.7" width="3.3" height="2.3" fill="#f0c428"/><rect x="132.0" y="80.4" width="2.3" height="3.5" fill="#c8a030"/><rect x="102.9" y="38.3" width="2.4" height="2.1" fill="#8cc024"/><rect x="200.9" y="110.4" width="3.4" height="1.7" fill="#9c2450"/><rect x="180.1" y="88.0" width="2.8" height="3.6" fill="#8cc024"/><rect x="100.1" y="68.9" width="2.9" height="2.1" fill="#c8a030"/><rect x="93.7" y="55.9" width="2.1" height="2.2" fill="#c8a030"/><rect x="193.1" y="96.3" width="3.3" height="2.6" fill="#f0c428"/><rect x="162.4" y="79.0" width="2.4" height="2.9" fill="#9c2450"/><rect x="81.3" y="53.0" width="4.3" height="3.7" fill="#9c2450"/><rect x="212.3" y="125.9" width="1.6" height="2.6" fill="#8cc024"/><rect x="192.8" y="84.2" width="2.5" height="2.1" fill="#c8a030"/><rect x="85.3" y="49.9" width="1.6" height="3.8" fill="#8cc024"/><rect x="197.3" y="91.1" width="3.2" height="1.5" fill="#9c2450"/><rect x="194.6" y="106.9" width="3.1" height="2.5" fill="#8cc024"/><rect x="216.0" y="111.5" width="4.4" height="2.9" fill="#f0c428"/><rect x="206.3" y="108.3" width="3.1" height="3.5" fill="#8cc024"/><rect x="109.8" y="45.1" width="4.0" height="1.5" fill="#8cc024"/><rect x="175.7" y="91.6" width="2.2" height="3.0" fill="#f0c428"/><rect x="163.8" y="87.4" width="4.1" height="3.4" fill="#8cc024"/><rect x="94.6" y="53.8" width="4.1" height="1.7" fill="#8cc024"/><rect x="152.9" y="89.7" width="2.7" height="2.5" fill="#f0c428"/><rect x="123.7" y="90.6" width="1.9" height="2.9" fill="#9c2450"/><rect x="185.3" y="101.5" width="1.6" height="2.7" fill="#8cc024"/><rect x="167.9" y="92.3" width="3.4" height="2.6" fill="#8cc024"/><rect x="125.0" y="75.1" width="4.4" height="2.5" fill="#9c2450"/><rect x="83.8" y="54.7" width="1.7" height="2.6" fill="#c8a030"/><rect x="155.8" y="67.4" width="4.4" height="2.9" fill="#f0c428"/><rect x="218.3" y="118.1" width="3.9" height="3.2" fill="#c8a030"/><rect x="187.1" y="99.6" width="3.6" height="2.7" fill="#c8a030"/><rect x="108.8" y="70.5" width="1.8" height="3.7" fill="#c8a030"/><rect x="120.2" y="62.9" width="1.6" height="1.8" fill="#8cc024"/><rect x="150.4" y="77.3" width="3.9" height="1.6" fill="#f0c428"/><rect x="184.0" y="102.5" width="3.2" height="1.7" fill="#8cc024"/><rect x="149.6" y="83.5" width="4.0" height="2.1" fill="#8cc024"/><rect x="107.0" y="70.6" width="2.3" height="3.0" fill="#9c2450"/><rect x="203.7" y="109.2" width="3.0" height="3.9" fill="#9c2450"/><rect x="141.9" y="73.6" width="3.8" height="3.2" fill="#c8a030"/><rect x="147.6" y="86.3" width="2.0" height="2.7" fill="#8cc024"/><rect x="147.1" y="66.5" width="3.7" height="2.0" fill="#c8a030"/><rect x="123.0" y="76.1" width="4.3" height="3.6" fill="#f0c428"/><rect x="162.6" y="76.5" width="3.3" height="3.0" fill="#9c2450"/><rect x="232.2" y="115.0" width="2.9" height="2.5" fill="#f0c428"/><rect x="101.9" y="65.1" width="2.8" height="3.2" fill="#8cc024"/><rect x="187.8" y="107.4" width="1.6" height="4.0" fill="#c8a030"/><rect x="102.4" y="49.3" width="2.9" height="2.1" fill="#8cc024"/><rect x="113.1" y="54.6" width="4.1" height="2.1" fill="#8cc024"/><rect x="108.2" y="66.2" width="4.2" height="2.1" fill="#8cc024"/><rect x="206.9" y="117.1" width="1.9" height="2.2" fill="#8cc024"/><rect x="224.5" y="115.5" width="1.5" height="2.3" fill="#f0c428"/><rect x="140.6" y="79.8" width="3.7" height="2.7" fill="#c8a030"/><rect x="92.7" y="70.2" width="3.5" height="1.8" fill="#8cc024"/><rect x="215.7" y="110.2" width="3.5" height="2.4" fill="#f0c428"/><rect x="142.1" y="71.5" width="1.8" height="3.9" fill="#f0c428"/><rect x="123.0" y="68.9" width="3.0" height="1.6" fill="#9c2450"/><rect x="122.6" y="57.8" width="2.0" height="3.7" fill="#8cc024"/><rect x="189.9" y="106.5" width="4.3" height="3.1" fill="#8cc024"/><rect x="172.2" y="97.6" width="2.9" height="2.3" fill="#8cc024"/><rect x="116.5" y="65.3" width="3.1" height="3.3" fill="#c8a030"/><rect x="133.2" y="80.7" width="1.6" height="2.8" fill="#8cc024"/><rect x="117.9" y="59.3" width="4.3" height="2.6" fill="#f0c428"/><rect x="208.8" y="109.7" width="2.0" height="3.0" fill="#8cc024"/><rect x="168.1" y="91.0" width="2.1" height="2.0" fill="#8cc024"/><rect x="142.0" y="65.1" width="3.3" height="1.9" fill="#8cc024"/><rect x="142.7" y="84.7" width="2.0" height="3.7" fill="#c8a030"/><rect x="131.8" y="87.6" width="4.2" height="3.9" fill="#9c2450"/><rect x="128.7" y="72.6" width="4.4" height="3.2" fill="#9c2450"/><rect x="130.0" y="63.4" width="2.1" height="3.1" fill="#c8a030"/><rect x="96.3" y="50.6" width="3.1" height="2.7" fill="#8cc024"/><rect x="107.1" y="61.6" width="4.3" height="3.9" fill="#c8a030"/><rect x="94.6" y="66.1" width="1.9" height="3.5" fill="#8cc024"/><rect x="179.8" y="94.9" width="3.0" height="2.7" fill="#8cc024"/><rect x="79.5" y="54.6" width="3.6" height="1.8" fill="#f0c428"/><rect x="195.9" y="100.3" width="3.7" height="2.4" fill="#8cc024"/><rect x="213.7" y="100.3" width="3.6" height="2.1" fill="#9c2450"/><rect x="129.0" y="63.8" width="3.6" height="2.5" fill="#8cc024"/><rect x="163.4" y="87.7" width="3.4" height="2.3" fill="#8cc024"/><rect x="150.0" y="74.4" width="2.9" height="1.6" fill="#8cc024"/><rect x="122.9" y="60.3" width="3.3" height="2.1" fill="#f0c428"/><rect x="83.5" y="60.0" width="4.1" height="2.8" fill="#8cc024"/><rect x="113.1" y="60.7" width="2.0" height="1.6" fill="#c8a030"/><rect x="100.5" y="63.0" width="4.0" height="2.5" fill="#8cc024"/><rect x="138.5" y="73.2" width="2.7" height="2.5" fill="#8cc024"/><rect x="88.8" y="48.9" width="2.7" height="2.0" fill="#8cc024"/><rect x="141.5" y="82.3" width="1.7" height="3.3" fill="#c8a030"/><rect x="123.1" y="60.2" width="3.0" height="2.9" fill="#f0c428"/><rect x="73.1" y="69.0" width="1.8" height="3.2" fill="#f0c428"/><rect x="224.9" y="117.5" width="3.5" height="1.5" fill="#8cc024"/><rect x="151.0" y="84.7" width="4.2" height="2.0" fill="#c8a030"/><rect x="213.6" y="119.9" width="4.3" height="1.6" fill="#f0c428"/><rect x="112.4" y="59.4" width="4.3" height="2.0" fill="#8cc024"/><rect x="133.2" y="77.3" width="3.5" height="3.8" fill="#c8a030"/><rect x="105.5" y="49.2" width="2.6" height="2.0" fill="#c8a030"/><rect x="193.2" y="108.6" width="2.5" height="3.6" fill="#9c2450"/><rect x="156.3" y="69.0" width="4.3" height="1.6" fill="#9c2450"/><rect x="105.9" y="47.3" width="3.8" height="3.2" fill="#8cc024"/><rect x="95.6" y="68.4" width="4.1" height="3.7" fill="#8cc024"/><rect x="156.6" y="73.5" width="4.5" height="1.5" fill="#f0c428"/><rect x="112.8" y="46.9" width="3.2" height="1.8" fill="#f0c428"/><rect x="89.1" y="49.6" width="4.4" height="3.8" fill="#8cc024"/><rect x="104.9" y="58.0" width="4.4" height="2.1" fill="#f0c428"/><rect x="153.7" y="94.4" width="2.5" height="3.7" fill="#c8a030"/><rect x="187.8" y="106.3" width="4.0" height="1.8" fill="#8cc024"/><rect x="88.2" y="48.8" width="1.8" height="2.7" fill="#f0c428"/><rect x="118.0" y="55.5" width="3.8" height="3.7" fill="#9c2450"/><rect x="125.8" y="68.3" width="2.4" height="3.9" fill="#8cc024"/><rect x="144.0" y="82.3" width="2.9" height="3.3" fill="#8cc024"/><rect x="87.0" y="60.2" width="4.3" height="3.2" fill="#8cc024"/><rect x="135.3" y="71.7" width="2.1" height="2.4" fill="#c8a030"/><rect x="225.6" y="126.1" width="2.3" height="2.3" fill="#8cc024"/><rect x="193.7" y="106.7" width="2.9" height="3.3" fill="#c8a030"/><rect x="204.8" y="112.8" width="4.3" height="2.7" fill="#c8a030"/><rect x="175.9" y="117.0" width="2.4" height="3.8" fill="#8cc024"/><rect x="116.9" y="67.6" width="3.0" height="1.7" fill="#f0c428"/><rect x="152.4" y="86.5" width="2.8" height="2.4" fill="#9c2450"/><rect x="191.2" y="95.7" width="2.8" height="3.8" fill="#8cc024"/><rect x="148.8" y="87.7" width="4.4" height="3.9" fill="#f0c428"/><rect x="208.5" y="114.1" width="4.3" height="2.7" fill="#f0c428"/><rect x="232.8" y="137.2" width="2.4" height="2.7" fill="#f0c428"/><rect x="215.1" y="106.3" width="4.3" height="2.8" fill="#8cc024"/><rect x="79.4" y="46.1" width="2.0" height="1.6" fill="#8cc024"/><rect x="111.6" y="54.9" width="4.4" height="1.6" fill="#f0c428"/><rect x="115.2" y="61.9" width="4.0" height="3.0" fill="#f0c428"/><rect x="196.5" y="108.1" width="2.8" height="2.2" fill="#9c2450"/><rect x="77.7" y="55.4" width="4.2" height="3.5" fill="#8cc024"/><rect x="124.9" y="74.7" width="3.0" height="3.6" fill="#9c2450"/><rect x="162.0" y="91.9" width="3.0" height="1.7" fill="#8cc024"/><rect x="194.2" y="108.9" width="3.0" height="2.4" fill="#c8a030"/><rect x="174.1" y="96.2" width="4.5" height="2.9" fill="#8cc024"/><rect x="136.6" y="83.6" width="2.9" height="3.9" fill="#f0c428"/><rect x="99.9" y="67.0" width="3.0" height="2.1" fill="#9c2450"/><rect x="144.0" y="78.2" width="3.2" height="2.9" fill="#f0c428"/><rect x="151.1" y="93.9" width="1.8" height="3.2" fill="#f0c428"/><rect x="120.9" y="73.4" width="2.1" height="3.8" fill="#9c2450"/><rect x="97.4" y="69.8" width="1.6" height="2.0" fill="#f0c428"/><rect x="81.8" y="59.5" width="2.3" height="1.8" fill="#c8a030"/><rect x="120.4" y="65.7" width="4.4" height="3.3" fill="#8cc024"/><rect x="192.2" y="104.8" width="3.4" height="3.5" fill="#8cc024"/><rect x="77.2" y="65.9" width="2.8" height="4.0" fill="#8cc024"/><rect x="147.1" y="89.9" width="2.2" height="3.9" fill="#8cc024"/><rect x="105.3" y="55.9" width="3.5" height="3.1" fill="#9c2450"/><rect x="112.5" y="62.2" width="2.4" height="3.1" fill="#8cc024"/><rect x="104.8" y="64.2" width="3.1" height="2.5" fill="#8cc024"/><rect x="80.1" y="68.9" width="1.8" height="1.8" fill="#f0c428"/><rect x="112.0" y="80.3" width="1.7" height="2.0" fill="#c8a030"/><rect x="240.5" y="115.2" width="1.7" height="2.9" fill="#8cc024"/><rect x="225.0" y="120.7" width="1.6" height="2.4" fill="#9c2450"/><rect x="194.0" y="93.0" width="3.1" height="2.3" fill="#9c2450"/><rect x="95.7" y="60.6" width="2.4" height="3.4" fill="#c8a030"/><rect x="187.8" y="115.0" width="2.5" height="3.6" fill="#8cc024"/><rect x="97.7" y="55.9" width="4.1" height="1.8" fill="#c8a030"/><rect x="90.6" y="39.9" width="3.6" height="2.8" fill="#c8a030"/><rect x="202.2" y="107.9" width="2.5" height="3.0" fill="#9c2450"/><rect x="104.1" y="66.2" width="3.3" height="3.3" fill="#f0c428"/><rect x="194.6" y="97.2" width="2.4" height="3.9" fill="#f0c428"/><rect x="126.4" y="73.2" width="3.7" height="2.1" fill="#f0c428"/><rect x="144.8" y="83.0" width="3.1" height="3.7" fill="#f0c428"/><rect x="220.5" y="117.7" width="1.7" height="2.5" fill="#c8a030"/><rect x="158.0" y="83.9" width="4.1" height="2.5" fill="#8cc024"/><rect x="223.9" y="122.3" width="3.0" height="1.8" fill="#c8a030"/><rect x="182.9" y="106.5" width="2.4" height="2.8" fill="#8cc024"/><rect x="132.8" y="84.0" width="3.3" height="1.9" fill="#8cc024"/><rect x="106.3" y="70.8" width="4.2" height="2.0" fill="#8cc024"/><rect x="145.8" y="80.9" width="3.1" height="3.3" fill="#f0c428"/><rect x="212.4" y="94.5" width="2.5" height="3.0" fill="#9c2450"/><rect x="160.9" y="82.5" width="4.2" height="2.2" fill="#8cc024"/><rect x="112.7" y="53.2" width="2.8" height="3.5" fill="#8cc024"/><rect x="117.1" y="76.8" width="2.3" height="2.5" fill="#9c2450"/><rect x="147.8" y="88.9" width="2.8" height="1.7" fill="#f0c428"/><rect x="225.8" y="115.8" width="4.1" height="3.4" fill="#9c2450"/><rect x="131.8" y="66.1" width="3.4" height="1.7" fill="#9c2450"/><rect x="170.1" y="84.1" width="4.2" height="2.0" fill="#8cc024"/><rect x="147.3" y="81.5" width="4.2" height="2.8" fill="#8cc024"/><rect x="118.0" y="61.4" width="4.0" height="3.8" fill="#9c2450"/><rect x="135.1" y="82.9" width="2.2" height="2.9" fill="#c8a030"/><rect x="123.5" y="67.8" width="3.4" height="2.4" fill="#f0c428"/><rect x="207.0" y="95.9" width="2.1" height="1.6" fill="#c8a030"/><rect x="143.2" y="83.4" width="2.1" height="1.8" fill="#8cc024"/><rect x="156.0" y="77.3" width="2.4" height="3.4" fill="#8cc024"/><rect x="129.3" y="86.0" width="2.2" height="2.4" fill="#8cc024"/><rect x="112.1" y="70.4" width="3.6" height="2.4" fill="#8cc024"/><rect x="98.1" y="63.4" width="2.0" height="2.7" fill="#c8a030"/><rect x="113.9" y="56.9" width="2.0" height="3.4" fill="#8cc024"/><rect x="130.0" y="74.1" width="2.8" height="1.6" fill="#f0c428"/><rect x="203.2" y="98.4" width="2.0" height="2.8" fill="#c8a030"/><rect x="136.0" y="78.4" width="4.5" height="2.4" fill="#c8a030"/><rect x="225.0" y="120.1" width="2.5" height="3.3" fill="#9c2450"/><rect x="174.2" y="95.4" width="2.9" height="2.8" fill="#f0c428"/><rect x="201.8" y="112.8" width="2.5" height="3.1" fill="#c8a030"/><rect x="167.8" y="74.7" width="2.4" height="3.7" fill="#c8a030"/><rect x="192.5" y="106.3" width="4.3" height="2.6" fill="#f0c428"/><rect x="164.4" y="80.9" width="3.2" height="2.1" fill="#f0c428"/><rect x="178.3" y="95.6" width="2.5" height="1.9" fill="#8cc024"/><rect x="208.6" y="114.7" width="2.1" height="2.5" fill="#9c2450"/><rect x="168.3" y="91.0" width="3.6" height="1.9" fill="#9c2450"/><rect x="186.3" y="102.0" width="4.3" height="3.7" fill="#8cc024"/><rect x="155.3" y="86.7" width="3.6" height="2.1" fill="#f0c428"/><rect x="119.9" y="70.1" width="2.8" height="2.2" fill="#f0c428"/><rect x="227.9" y="125.7" width="4.3" height="3.2" fill="#c8a030"/><rect x="116.7" y="72.2" width="4.2" height="1.7" fill="#f0c428"/><rect x="185.5" y="93.7" width="2.5" height="1.8" fill="#9c2450"/><rect x="205.6" y="109.3" width="2.3" height="2.8" fill="#9c2450"/><rect x="143.8" y="66.4" width="3.2" height="2.9" fill="#c8a030"/><rect x="221.4" y="120.9" width="3.3" height="2.5" fill="#f0c428"/><rect x="91.8" y="60.1" width="3.9" height="1.8" fill="#8cc024"/><rect x="192.2" y="110.9" width="2.3" height="3.1" fill="#f0c428"/><rect x="171.0" y="87.2" width="2.0" height="4.0" fill="#8cc024"/><rect x="179.5" y="102.3" width="1.9" height="2.3" fill="#8cc024"/><rect x="201.6" y="101.3" width="3.4" height="3.7" fill="#8cc024"/><rect x="103.6" y="58.1" width="2.7" height="2.6" fill="#c8a030"/><rect x="224.9" y="116.1" width="1.7" height="3.2" fill="#8cc024"/><rect x="148.6" y="78.2" width="4.0" height="2.4" fill="#f0c428"/><rect x="86.9" y="52.2" width="2.8" height="3.2" fill="#c8a030"/><rect x="130.2" y="79.1" width="2.5" height="2.1" fill="#8cc024"/><rect x="147.4" y="81.4" width="1.8" height="3.2" fill="#c8a030"/><rect x="122.4" y="69.6" width="2.5" height="2.0" fill="#c8a030"/><rect x="164.2" y="100.8" width="2.6" height="3.7" fill="#c8a030"/><rect x="102.8" y="57.9" width="2.0" height="2.6" fill="#8cc024"/><rect x="156.0" y="102.4" width="1.9" height="2.8" fill="#c8a030"/><rect x="121.3" y="69.5" width="4.5" height="1.8" fill="#c8a030"/><rect x="149.7" y="84.6" width="1.6" height="1.6" fill="#9c2450"/><rect x="181.0" y="95.7" width="4.2" height="1.6" fill="#9c2450"/><rect x="178.6" y="104.1" width="3.8" height="3.5" fill="#f0c428"/><rect x="119.8" y="67.5" width="1.8" height="3.2" fill="#8cc024"/><rect x="119.4" y="71.0" width="1.9" height="1.9" fill="#c8a030"/><rect x="220.0" y="130.3" width="1.5" height="1.7" fill="#c8a030"/><rect x="188.0" y="93.4" width="3.2" height="2.5" fill="#f0c428"/><rect x="148.5" y="80.5" width="2.9" height="3.1" fill="#f0c428"/><rect x="197.9" y="99.9" width="3.5" height="3.4" fill="#8cc024"/><rect x="218.9" y="117.6" width="3.3" height="3.2" fill="#f0c428"/><rect x="236.5" y="122.0" width="2.0" height="1.7" fill="#9c2450"/><rect x="101.4" y="60.8" width="3.2" height="2.4" fill="#9c2450"/><rect x="155.7" y="81.9" width="2.6" height="3.3" fill="#9c2450"/><rect x="121.8" y="72.6" width="3.8" height="1.6" fill="#8cc024"/><rect x="147.4" y="69.9" width="2.9" height="2.4" fill="#9c2450"/><rect x="151.2" y="86.1" width="1.7" height="2.9" fill="#9c2450"/><rect x="113.2" y="60.9" width="4.4" height="1.8" fill="#8cc024"/><rect x="199.4" y="101.8" width="2.1" height="3.8" fill="#c8a030"/><rect x="14.0" y="108.1" width="2.8" height="1.9" fill="#9c2450"/><rect x="23.0" y="132.1" width="3.0" height="3.1" fill="#9c2450"/><rect x="16.6" y="109.7" width="1.6" height="3.9" fill="#c8a030"/><rect x="15.0" y="120.8" width="2.3" height="1.7" fill="#8cc024"/><rect x="24.7" y="104.2" width="4.1" height="2.3" fill="#8cc024"/><rect x="18.7" y="104.7" width="2.4" height="2.0" fill="#c8a030"/><rect x="6.6" y="106.0" width="1.5" height="3.1" fill="#9c2450"/><rect x="22.0" y="101.9" width="3.8" height="3.5" fill="#8cc024"/><rect x="25.9" y="113.9" width="2.4" height="2.4" fill="#8cc024"/><rect x="20.4" y="117.8" width="3.8" height="2.6" fill="#c8a030"/><rect x="18.9" y="124.8" width="2.3" height="2.2" fill="#9c2450"/><rect x="25.3" y="107.3" width="2.4" height="3.2" fill="#8cc024"/><rect x="35.8" y="125.9" width="3.6" height="3.5" fill="#9c2450"/><rect x="20.3" y="101.3" width="3.3" height="1.8" fill="#8cc024"/><rect x="23.1" y="119.3" width="2.0" height="2.3" fill="#c8a030"/><rect x="25.6" y="116.9" width="1.7" height="3.7" fill="#c8a030"/><rect x="17.1" y="109.2" width="3.8" height="2.6" fill="#9c2450"/><rect x="20.3" y="96.3" width="3.8" height="2.4" fill="#8cc024"/><rect x="23.9" y="102.3" width="2.1" height="2.7" fill="#c8a030"/><rect x="3.8" y="113.1" width="4.3" height="2.3" fill="#8cc024"/><rect x="7.6" y="104.2" width="2.9" height="3.3" fill="#8cc024"/><rect x="30.0" y="141.2" width="3.5" height="1.9" fill="#8cc024"/><rect x="16.9" y="79.4" width="1.7" height="2.9" fill="#f0c428"/><rect x="29.3" y="90.3" width="4.4" height="1.6" fill="#8cc024"/><rect x="15.6" y="113.9" width="2.9" height="3.4" fill="#c8a030"/><rect x="29.5" y="67.3" width="4.1" height="2.9" fill="#9c2450"/><rect x="37.4" y="122.3" width="3.5" height="2.0" fill="#8cc024"/><rect x="22.3" y="113.0" width="1.6" height="2.0" fill="#f0c428"/><rect x="18.4" y="106.8" width="4.2" height="3.3" fill="#c8a030"/><rect x="14.0" y="121.6" width="2.4" height="2.3" fill="#c8a030"/><rect x="38.0" y="103.3" width="3.4" height="1.5" fill="#c8a030"/><rect x="19.3" y="97.2" width="2.8" height="2.8" fill="#f0c428"/><rect x="16.4" y="104.3" width="4.1" height="2.2" fill="#f0c428"/><rect x="19.6" y="117.2" width="2.8" height="2.5" fill="#f0c428"/><rect x="3.6" y="107.6" width="2.4" height="2.4" fill="#f0c428"/><rect x="19.0" y="102.6" width="1.7" height="3.8" fill="#f0c428"/><rect x="17.3" y="94.0" width="4.4" height="2.8" fill="#9c2450"/><rect x="28.7" y="85.6" width="1.5" height="3.3" fill="#f0c428"/><rect x="15.9" y="111.5" width="3.1" height="3.6" fill="#9c2450"/><rect x="18.8" y="135.2" width="3.1" height="2.7" fill="#c8a030"/><rect x="22.2" y="103.2" width="1.8" height="3.2" fill="#f0c428"/><rect x="25.7" y="90.7" width="3.6" height="2.0" fill="#9c2450"/><rect x="18.6" y="116.4" width="4.2" height="2.2" fill="#c8a030"/><rect x="42.5" y="108.5" width="2.9" height="2.9" fill="#8cc024"/><rect x="15.4" y="127.1" width="3.5" height="1.5" fill="#c8a030"/><rect x="8.2" y="115.2" width="4.2" height="3.1" fill="#8cc024"/><rect x="20.3" y="102.6" width="3.3" height="2.7" fill="#9c2450"/><rect x="26.7" y="98.8" width="2.2" height="2.0" fill="#f0c428"/><rect x="39.1" y="115.4" width="2.5" height="1.5" fill="#8cc024"/><rect x="24.7" y="111.7" width="2.0" height="2.4" fill="#8cc024"/><rect x="24.1" y="97.8" width="3.4" height="1.7" fill="#c8a030"/><rect x="19.1" y="101.3" width="1.9" height="2.2" fill="#f0c428"/><rect x="19.1" y="133.9" width="3.2" height="1.9" fill="#f0c428"/><rect x="5.0" y="118.1" width="2.9" height="2.5" fill="#8cc024"/><rect x="33.3" y="112.4" width="1.7" height="3.8" fill="#c8a030"/><rect x="10.7" y="115.6" width="2.0" height="3.5" fill="#8cc024"/><rect x="32.6" y="121.2" width="3.6" height="2.6" fill="#9c2450"/><rect x="19.0" y="114.8" width="1.6" height="2.2" fill="#9c2450"/><rect x="11.8" y="119.3" width="4.1" height="3.4" fill="#f0c428"/><rect x="32.9" y="102.0" width="4.4" height="2.1" fill="#f0c428"/><rect x="28.4" y="106.4" width="2.4" height="1.9" fill="#f0c428"/><rect x="8.3" y="124.8" width="3.4" height="2.7" fill="#8cc024"/><rect x="23.4" y="124.7" width="4.4" height="3.4" fill="#9c2450"/><rect x="0.7" y="105.9" width="4.2" height="1.9" fill="#9c2450"/><rect x="27.8" y="89.9" width="3.8" height="2.5" fill="#9c2450"/><rect x="22.9" y="126.8" width="4.1" height="3.2" fill="#8cc024"/><rect x="7.5" y="126.2" width="2.4" height="3.8" fill="#f0c428"/><rect x="13.9" y="100.0" width="3.8" height="1.9" fill="#c8a030"/><rect x="16.8" y="113.9" width="4.2" height="3.4" fill="#f0c428"/><rect x="17.8" y="117.8" width="3.5" height="2.0" fill="#9c2450"/><rect x="16.7" y="95.6" width="4.1" height="2.2" fill="#f0c428"/><rect x="19.5" y="135.9" width="4.4" height="1.8" fill="#8cc024"/><rect x="-2.7" y="97.5" width="2.7" height="3.6" fill="#c8a030"/><rect x="37.0" y="103.6" width="3.3" height="2.3" fill="#c8a030"/><rect x="15.2" y="105.8" width="1.9" height="3.8" fill="#c8a030"/><rect x="33.4" y="142.7" width="2.3" height="2.1" fill="#9c2450"/><rect x="13.1" y="95.7" width="1.7" height="3.5" fill="#9c2450"/><rect x="31.9" y="111.2" width="4.1" height="2.9" fill="#9c2450"/><rect x="14.5" y="112.4" width="2.4" height="3.5" fill="#9c2450"/><rect x="5.9" y="130.2" width="4.1" height="2.7" fill="#9c2450"/><rect x="24.2" y="127.1" width="3.8" height="1.8" fill="#9c2450"/><rect x="-0.0" y="103.5" width="3.1" height="2.2" fill="#c8a030"/><rect x="14.2" y="103.0" width="4.1" height="1.6" fill="#f0c428"/><rect x="30.6" y="117.1" width="2.1" height="2.1" fill="#8cc024"/><rect x="20.8" y="102.3" width="3.1" height="1.7" fill="#8cc024"/><rect x="9.7" y="118.7" width="4.2" height="3.5" fill="#8cc024"/><rect x="23.7" y="130.3" width="3.8" height="1.8" fill="#9c2450"/><rect x="22.2" y="112.4" width="3.5" height="3.6" fill="#f0c428"/><rect x="21.6" y="117.0" width="1.7" height="2.7" fill="#f0c428"/><rect x="16.0" y="104.4" width="3.4" height="2.2" fill="#8cc024"/><rect x="21.7" y="107.2" width="3.4" height="3.6" fill="#8cc024"/><rect x="16.7" y="113.6" width="2.0" height="3.1" fill="#8cc024"/><rect x="2.7" y="116.5" width="4.1" height="3.6" fill="#8cc024"/><rect x="25.6" y="97.0" width="3.6" height="2.9" fill="#f0c428"/><rect x="17.0" y="111.2" width="2.8" height="2.8" fill="#8cc024"/><rect x="19.9" y="122.2" width="3.4" height="3.0" fill="#c8a030"/><rect x="26.9" y="124.9" width="2.3" height="1.8" fill="#c8a030"/><rect x="25.5" y="86.0" width="1.6" height="2.5" fill="#9c2450"/><rect x="25.2" y="96.9" width="1.8" height="3.8" fill="#8cc024"/><rect x="45.0" y="115.9" width="2.5" height="3.0" fill="#8cc024"/><rect x="26.5" y="104.1" width="2.4" height="3.6" fill="#9c2450"/><rect x="35.1" y="125.7" width="3.2" height="1.6" fill="#c8a030"/><rect x="17.3" y="112.5" width="2.3" height="1.6" fill="#8cc024"/><rect x="15.9" y="128.5" width="3.4" height="3.6" fill="#9c2450"/><rect x="25.9" y="92.9" width="1.7" height="2.4" fill="#9c2450"/><rect x="24.2" y="100.7" width="2.5" height="2.9" fill="#8cc024"/><rect x="5.5" y="105.1" width="2.7" height="1.7" fill="#8cc024"/><rect x="9.0" y="102.9" width="4.4" height="2.5" fill="#c8a030"/><rect x="32.4" y="106.0" width="3.1" height="2.3" fill="#c8a030"/><rect x="19.1" y="118.5" width="2.7" height="3.9" fill="#c8a030"/><rect x="170.3" y="199.0" width="2.0" height="3.2" fill="#8cc024"/><rect x="168.5" y="195.2" width="2.0" height="3.9" fill="#8cc024"/><rect x="162.8" y="213.0" width="3.9" height="3.4" fill="#c8a030"/><rect x="166.2" y="203.4" width="3.1" height="3.5" fill="#9c2450"/><rect x="170.7" y="215.9" width="3.4" height="2.3" fill="#c8a030"/><rect x="202.5" y="215.0" width="3.3" height="2.1" fill="#9c2450"/><rect x="171.8" y="204.8" width="2.9" height="2.9" fill="#8cc024"/><rect x="165.6" y="198.1" width="3.3" height="3.3" fill="#8cc024"/><rect x="181.6" y="212.3" width="3.7" height="3.0" fill="#8cc024"/><rect x="172.1" y="217.7" width="1.9" height="3.7" fill="#8cc024"/><rect x="177.3" y="201.7" width="3.1" height="3.0" fill="#9c2450"/><rect x="155.2" y="217.0" width="2.0" height="1.5" fill="#8cc024"/><rect x="192.0" y="202.0" width="2.2" height="3.6" fill="#8cc024"/><rect x="169.8" y="193.5" width="3.5" height="2.4" fill="#8cc024"/><rect x="158.6" y="188.0" width="3.4" height="2.3" fill="#f0c428"/><rect x="165.1" y="195.1" width="2.3" height="2.3" fill="#c8a030"/><rect x="191.7" y="204.1" width="4.1" height="3.9" fill="#8cc024"/><rect x="188.6" y="204.3" width="3.2" height="1.7" fill="#f0c428"/><rect x="176.8" y="203.3" width="2.4" height="3.8" fill="#8cc024"/><rect x="184.1" y="201.4" width="2.2" height="2.6" fill="#9c2450"/><rect x="172.7" y="204.0" width="2.2" height="1.5" fill="#8cc024"/><rect x="173.6" y="197.5" width="1.6" height="2.1" fill="#c8a030"/><rect x="184.1" y="205.8" width="2.6" height="3.6" fill="#8cc024"/><rect x="182.1" y="199.7" width="2.6" height="2.3" fill="#f0c428"/><rect x="200.9" y="213.7" width="1.8" height="3.6" fill="#9c2450"/><rect x="174.3" y="206.9" width="2.9" height="2.3" fill="#8cc024"/><rect x="166.7" y="205.5" width="2.7" height="2.0" fill="#8cc024"/><rect x="190.9" y="188.6" width="2.2" height="2.3" fill="#c8a030"/><rect x="172.6" y="200.1" width="3.1" height="3.3" fill="#c8a030"/><rect x="184.0" y="200.0" width="3.9" height="3.4" fill="#f0c428"/><rect x="202.3" y="211.2" width="3.7" height="2.1" fill="#9c2450"/><rect x="175.7" y="210.7" width="2.9" height="3.8" fill="#f0c428"/><rect x="172.1" y="209.9" width="2.8" height="4.0" fill="#c8a030"/><rect x="195.1" y="191.6" width="3.6" height="2.2" fill="#8cc024"/><rect x="187.2" y="201.7" width="2.4" height="2.0" fill="#9c2450"/><rect x="189.4" y="200.0" width="2.9" height="1.8" fill="#8cc024"/><rect x="169.1" y="204.1" width="1.7" height="1.7" fill="#8cc024"/><rect x="177.2" y="203.6" width="2.4" height="3.7" fill="#8cc024"/><rect x="184.5" y="211.8" width="4.5" height="2.3" fill="#8cc024"/><rect x="196.8" y="203.1" width="2.1" height="2.3" fill="#c8a030"/><rect x="164.9" y="219.4" width="3.9" height="2.1" fill="#8cc024"/><rect x="185.1" y="203.5" width="4.5" height="1.8" fill="#c8a030"/><rect x="179.7" y="205.1" width="2.3" height="2.3" fill="#9c2450"/><rect x="181.6" y="211.8" width="4.2" height="1.8" fill="#8cc024"/><rect x="155.9" y="210.3" width="3.7" height="1.9" fill="#8cc024"/><rect x="167.6" y="203.8" width="3.4" height="3.3" fill="#f0c428"/><rect x="187.7" y="206.1" width="4.0" height="2.9" fill="#9c2450"/><rect x="170.9" y="223.3" width="4.2" height="2.4" fill="#8cc024"/><rect x="179.0" y="207.2" width="3.9" height="3.0" fill="#8cc024"/><rect x="179.6" y="204.5" width="4.4" height="3.9" fill="#9c2450"/><rect x="179.0" y="198.1" width="3.8" height="3.1" fill="#f0c428"/><rect x="174.8" y="203.8" width="2.2" height="3.4" fill="#c8a030"/><rect x="165.9" y="198.7" width="3.4" height="3.1" fill="#9c2450"/><rect x="179.3" y="190.8" width="2.9" height="2.4" fill="#9c2450"/><rect x="200.7" y="200.5" width="4.0" height="2.1" fill="#f0c428"/><rect x="166.1" y="202.6" width="1.8" height="2.9" fill="#c8a030"/><rect x="177.3" y="217.5" width="1.8" height="2.6" fill="#c8a030"/><rect x="173.6" y="212.9" width="2.3" height="1.6" fill="#c8a030"/><rect x="150.3" y="211.5" width="2.0" height="2.1" fill="#f0c428"/><rect x="181.9" y="211.4" width="1.6" height="2.7" fill="#8cc024"/><rect x="159.6" y="209.3" width="3.6" height="2.4" fill="#9c2450"/><rect x="163.1" y="213.3" width="1.7" height="2.8" fill="#c8a030"/><rect x="169.1" y="203.9" width="2.0" height="2.3" fill="#8cc024"/><rect x="223.2" y="214.9" width="3.1" height="2.5" fill="#c8a030"/><rect x="170.7" y="209.7" width="1.5" height="1.5" fill="#8cc024"/><rect x="166.4" y="206.1" width="4.0" height="2.6" fill="#f0c428"/><rect x="192.3" y="210.7" width="2.5" height="1.8" fill="#8cc024"/><rect x="199.7" y="191.7" width="4.4" height="2.9" fill="#c8a030"/><rect x="168.9" y="193.6" width="2.4" height="2.0" fill="#9c2450"/><rect x="160.1" y="201.0" width="3.4" height="3.5" fill="#f0c428"/><rect x="166.9" y="212.3" width="2.6" height="2.4" fill="#8cc024"/><rect x="171.0" y="221.0" width="3.7" height="2.5" fill="#f0c428"/><rect x="159.5" y="216.7" width="1.8" height="3.7" fill="#9c2450"/><rect x="164.4" y="207.7" width="3.1" height="2.4" fill="#c8a030"/><rect x="189.8" y="200.6" width="2.0" height="3.8" fill="#f0c428"/><rect x="182.2" y="204.8" width="2.6" height="2.8" fill="#f0c428"/><rect x="159.0" y="197.4" width="1.5" height="3.6" fill="#f0c428"/><rect x="184.0" y="199.8" width="3.4" height="2.3" fill="#c8a030"/><rect x="177.9" y="196.2" width="3.9" height="2.5" fill="#c8a030"/><rect x="162.0" y="215.3" width="4.3" height="2.1" fill="#9c2450"/><rect x="189.8" y="221.2" width="1.9" height="3.4" fill="#8cc024"/><rect x="187.9" y="201.3" width="2.4" height="3.5" fill="#9c2450"/><rect x="162.2" y="203.5" width="2.8" height="2.4" fill="#8cc024"/><rect x="167.9" y="205.2" width="1.8" height="2.1" fill="#9c2450"/><rect x="201.1" y="203.7" width="3.7" height="1.8" fill="#8cc024"/><rect x="152.2" y="216.9" width="4.0" height="3.3" fill="#8cc024"/><rect x="180.6" y="186.3" width="2.5" height="3.0" fill="#9c2450"/><rect x="191.9" y="211.5" width="2.6" height="3.8" fill="#c8a030"/><rect x="170.4" y="194.7" width="3.6" height="3.7" fill="#c8a030"/><rect x="189.4" y="197.7" width="1.7" height="3.8" fill="#c8a030"/><rect x="164.2" y="195.4" width="2.4" height="2.3" fill="#8cc024"/><rect x="186.1" y="198.8" width="3.7" height="2.3" fill="#c8a030"/><rect x="176.2" y="210.0" width="2.9" height="1.9" fill="#c8a030"/><rect x="166.9" y="212.2" width="4.0" height="1.7" fill="#f0c428"/><rect x="166.0" y="200.9" width="2.4" height="3.7" fill="#8cc024"/><rect x="194.0" y="200.4" width="4.3" height="3.4" fill="#8cc024"/><rect x="155.6" y="201.8" width="3.0" height="2.9" fill="#c8a030"/><rect x="192.1" y="211.2" width="3.2" height="2.7" fill="#8cc024"/><rect x="161.6" y="209.4" width="2.2" height="3.3" fill="#f0c428"/><rect x="203.8" y="196.8" width="1.7" height="3.9" fill="#9c2450"/><rect x="170.2" y="206.9" width="2.7" height="2.0" fill="#8cc024"/><rect x="200.5" y="204.0" width="3.8" height="2.4" fill="#8cc024"/><rect x="191.3" y="210.1" width="2.1" height="3.0" fill="#9c2450"/><rect x="165.7" y="201.7" width="3.5" height="3.8" fill="#9c2450"/><rect x="148.4" y="192.2" width="4.4" height="3.4" fill="#9c2450"/><rect x="162.3" y="201.4" width="4.2" height="1.5" fill="#c8a030"/><rect x="161.6" y="207.7" width="1.8" height="4.0" fill="#8cc024"/><rect x="142.8" y="224.4" width="2.3" height="2.0" fill="#c8a030"/><rect x="207.8" y="189.6" width="2.9" height="3.4" fill="#c8a030"/><rect x="194.2" y="202.2" width="2.4" height="3.6" fill="#c8a030"/><rect x="214.0" y="227.2" width="4.1" height="2.1" fill="#8cc024"/><rect x="211.1" y="227.7" width="3.6" height="1.9" fill="#9c2450"/><rect x="191.6" y="228.6" width="4.2" height="2.2" fill="#8cc024"/><rect x="181.8" y="230.7" width="4.0" height="3.0" fill="#8cc024"/><rect x="193.0" y="242.5" width="3.6" height="3.6" fill="#8cc024"/><rect x="204.8" y="228.3" width="3.6" height="3.7" fill="#8cc024"/><rect x="208.6" y="218.4" width="3.1" height="1.8" fill="#c8a030"/><rect x="199.9" y="253.7" width="2.1" height="3.9" fill="#f0c428"/><rect x="206.8" y="227.8" width="2.3" height="3.4" fill="#9c2450"/><rect x="205.3" y="228.6" width="3.1" height="2.8" fill="#8cc024"/><rect x="214.2" y="237.2" width="1.6" height="2.6" fill="#8cc024"/><rect x="203.2" y="238.1" width="3.5" height="3.6" fill="#f0c428"/><rect x="199.9" y="221.2" width="3.9" height="3.7" fill="#f0c428"/><rect x="198.5" y="238.6" width="1.7" height="2.6" fill="#9c2450"/><rect x="219.0" y="225.2" width="4.4" height="1.6" fill="#f0c428"/><rect x="206.1" y="224.8" width="4.2" height="2.2" fill="#8cc024"/><rect x="199.4" y="216.7" width="4.5" height="3.0" fill="#8cc024"/><rect x="200.9" y="227.6" width="4.4" height="2.2" fill="#8cc024"/><rect x="208.4" y="241.6" width="2.4" height="3.7" fill="#c8a030"/><rect x="196.3" y="228.1" width="2.9" height="2.0" fill="#8cc024"/><rect x="195.6" y="234.1" width="2.4" height="2.4" fill="#9c2450"/><rect x="194.2" y="231.6" width="1.9" height="2.1" fill="#f0c428"/><rect x="202.7" y="219.1" width="4.4" height="2.8" fill="#8cc024"/><rect x="200.7" y="232.9" width="4.5" height="3.2" fill="#8cc024"/><rect x="212.8" y="224.2" width="1.7" height="2.2" fill="#f0c428"/><rect x="212.5" y="228.4" width="4.5" height="2.0" fill="#8cc024"/><rect x="200.6" y="207.6" width="2.6" height="2.6" fill="#c8a030"/><rect x="190.4" y="226.3" width="2.6" height="1.6" fill="#f0c428"/><rect x="203.2" y="229.0" width="2.7" height="3.5" fill="#8cc024"/><rect x="208.2" y="234.0" width="1.9" height="2.2" fill="#8cc024"/><rect x="201.4" y="227.7" width="2.2" height="4.0" fill="#9c2450"/><rect x="216.4" y="242.6" width="2.3" height="3.4" fill="#8cc024"/><rect x="204.4" y="217.5" width="2.4" height="3.0" fill="#c8a030"/><rect x="209.8" y="233.0" width="2.9" height="3.7" fill="#9c2450"/><rect x="200.0" y="242.6" width="2.1" height="2.5" fill="#c8a030"/><rect x="192.6" y="238.0" width="3.1" height="2.6" fill="#c8a030"/><rect x="198.7" y="212.4" width="2.2" height="3.8" fill="#8cc024"/><rect x="194.7" y="233.1" width="3.3" height="2.0" fill="#8cc024"/><rect x="198.1" y="236.1" width="2.2" height="2.2" fill="#f0c428"/><rect x="201.7" y="243.0" width="3.0" height="2.8" fill="#f0c428"/><rect x="210.6" y="224.5" width="3.5" height="3.3" fill="#c8a030"/><rect x="202.7" y="221.0" width="2.6" height="3.3" fill="#8cc024"/><rect x="205.4" y="233.6" width="1.7" height="3.5" fill="#f0c428"/><rect x="221.0" y="215.2" width="1.8" height="4.0" fill="#8cc024"/><rect x="206.3" y="244.7" width="2.1" height="2.0" fill="#f0c428"/><rect x="210.4" y="232.4" width="2.1" height="1.6" fill="#c8a030"/><rect x="202.1" y="233.0" width="2.5" height="1.9" fill="#f0c428"/><rect x="196.8" y="234.6" width="3.6" height="2.1" fill="#f0c428"/><rect x="205.6" y="235.8" width="2.6" height="2.9" fill="#9c2450"/><rect x="200.0" y="222.8" width="2.8" height="3.4" fill="#9c2450"/><rect x="200.3" y="223.1" width="1.6" height="2.7" fill="#8cc024"/><rect x="214.7" y="215.1" width="3.1" height="1.7" fill="#9c2450"/><rect x="196.9" y="224.7" width="1.7" height="3.9" fill="#c8a030"/><rect x="213.7" y="253.7" width="2.2" height="2.2" fill="#f0c428"/><rect x="214.7" y="248.4" width="4.4" height="3.5" fill="#c8a030"/><rect x="195.2" y="244.3" width="1.7" height="1.9" fill="#f0c428"/><rect x="210.1" y="213.0" width="4.0" height="2.2" fill="#c8a030"/><rect x="226.4" y="237.2" width="3.3" height="2.2" fill="#c8a030"/><rect x="215.7" y="216.8" width="3.7" height="3.9" fill="#8cc024"/><rect x="208.8" y="240.9" width="4.0" height="2.2" fill="#9c2450"/><rect x="205.7" y="243.2" width="4.4" height="2.3" fill="#8cc024"/><rect x="198.9" y="222.8" width="4.1" height="3.4" fill="#f0c428"/><rect x="201.7" y="230.5" width="3.3" height="3.7" fill="#c8a030"/><rect x="194.9" y="228.7" width="3.9" height="3.6" fill="#f0c428"/><rect x="199.7" y="229.7" width="3.1" height="3.0" fill="#9c2450"/><rect x="215.3" y="223.1" width="3.5" height="1.8" fill="#f0c428"/><rect x="203.3" y="232.9" width="2.2" height="2.8" fill="#8cc024"/><rect x="217.5" y="237.6" width="2.6" height="3.2" fill="#8cc024"/><rect x="191.2" y="235.0" width="2.9" height="3.3" fill="#8cc024"/><rect x="206.9" y="266.4" width="3.2" height="1.5" fill="#8cc024"/><rect x="260.6" y="160.6" width="1.8" height="1.9" fill="#9c2450"/><rect x="279.5" y="149.9" width="2.4" height="2.8" fill="#9c2450"/><rect x="269.5" y="171.5" width="4.4" height="1.8" fill="#8cc024"/><rect x="257.1" y="152.5" width="3.0" height="3.3" fill="#8cc024"/><rect x="261.9" y="153.7" width="3.1" height="4.0" fill="#8cc024"/><rect x="260.0" y="163.5" width="1.6" height="3.5" fill="#c8a030"/><rect x="257.7" y="149.1" width="3.9" height="1.5" fill="#f0c428"/><rect x="260.2" y="126.8" width="4.2" height="2.6" fill="#9c2450"/><rect x="257.1" y="156.3" width="3.5" height="2.5" fill="#8cc024"/><rect x="267.0" y="162.3" width="3.4" height="1.7" fill="#9c2450"/><rect x="257.8" y="159.9" width="2.3" height="3.2" fill="#f0c428"/><rect x="272.3" y="159.1" width="2.5" height="3.2" fill="#c8a030"/><rect x="241.6" y="168.1" width="4.0" height="2.6" fill="#c8a030"/><rect x="252.3" y="168.1" width="4.3" height="2.9" fill="#c8a030"/><rect x="257.1" y="160.2" width="3.3" height="2.5" fill="#f0c428"/><rect x="266.6" y="171.8" width="3.2" height="2.6" fill="#f0c428"/><rect x="254.0" y="169.5" width="1.7" height="2.4" fill="#8cc024"/><rect x="258.5" y="148.6" width="3.1" height="1.9" fill="#8cc024"/><rect x="257.8" y="155.3" width="3.3" height="3.6" fill="#f0c428"/><rect x="270.1" y="145.6" width="3.5" height="2.9" fill="#8cc024"/><rect x="282.6" y="169.0" width="3.3" height="1.9" fill="#8cc024"/><rect x="249.0" y="141.8" width="3.0" height="3.5" fill="#f0c428"/><rect x="275.9" y="153.4" width="1.9" height="2.1" fill="#8cc024"/><rect x="261.2" y="141.1" width="2.3" height="2.8" fill="#8cc024"/><rect x="239.1" y="165.6" width="4.4" height="2.6" fill="#9c2450"/><rect x="242.4" y="134.1" width="2.0" height="1.8" fill="#8cc024"/><rect x="262.3" y="165.9" width="3.1" height="2.7" fill="#8cc024"/><rect x="253.0" y="170.3" width="1.7" height="1.9" fill="#9c2450"/><rect x="267.1" y="161.5" width="4.1" height="3.4" fill="#9c2450"/><rect x="265.9" y="171.1" width="2.6" height="2.9" fill="#8cc024"/><rect x="265.5" y="181.7" width="3.0" height="2.6" fill="#f0c428"/><rect x="268.1" y="142.9" width="2.8" height="2.6" fill="#8cc024"/><rect x="268.6" y="167.8" width="4.2" height="3.8" fill="#f0c428"/><rect x="262.1" y="155.5" width="4.3" height="2.2" fill="#f0c428"/><rect x="257.2" y="174.2" width="2.3" height="2.4" fill="#f0c428"/><rect x="254.7" y="162.4" width="1.8" height="2.4" fill="#8cc024"/><rect x="259.8" y="160.0" width="3.7" height="2.5" fill="#f0c428"/><rect x="277.8" y="163.2" width="3.9" height="3.1" fill="#f0c428"/><rect x="254.6" y="156.5" width="2.4" height="1.6" fill="#c8a030"/><rect x="272.0" y="172.4" width="1.6" height="3.7" fill="#f0c428"/><rect x="263.4" y="153.0" width="1.6" height="3.0" fill="#8cc024"/><rect x="259.9" y="156.8" width="2.5" height="3.1" fill="#8cc024"/><rect x="275.9" y="174.7" width="2.3" height="3.3" fill="#f0c428"/><rect x="271.8" y="158.1" width="3.6" height="2.2" fill="#8cc024"/><rect x="242.8" y="167.7" width="3.6" height="3.8" fill="#9c2450"/><rect x="263.8" y="171.6" width="1.8" height="3.6" fill="#c8a030"/><rect x="271.5" y="141.6" width="2.9" height="1.8" fill="#9c2450"/><rect x="273.0" y="146.1" width="2.7" height="2.4" fill="#c8a030"/><rect x="251.8" y="163.3" width="3.3" height="2.1" fill="#f0c428"/><rect x="263.0" y="167.9" width="1.5" height="2.4" fill="#9c2450"/><rect x="243.8" y="151.7" width="4.4" height="2.1" fill="#f0c428"/><rect x="265.3" y="161.1" width="3.0" height="4.0" fill="#f0c428"/><rect x="256.4" y="167.0" width="2.8" height="3.4" fill="#f0c428"/><rect x="264.2" y="153.8" width="2.3" height="3.2" fill="#c8a030"/><rect x="267.2" y="155.5" width="2.4" height="3.3" fill="#c8a030"/><rect x="271.4" y="155.2" width="2.7" height="2.6" fill="#8cc024"/><rect x="273.1" y="152.6" width="2.9" height="2.7" fill="#8cc024"/><rect x="246.3" y="161.2" width="3.9" height="2.3" fill="#8cc024"/><rect x="268.9" y="153.5" width="3.7" height="3.8" fill="#8cc024"/><rect x="261.0" y="162.5" width="2.3" height="2.8" fill="#c8a030"/><rect x="260.3" y="171.3" width="2.2" height="3.3" fill="#8cc024"/><rect x="246.2" y="173.2" width="3.3" height="1.6" fill="#8cc024"/><rect x="267.5" y="145.4" width="2.8" height="2.6" fill="#8cc024"/><rect x="264.5" y="150.4" width="1.5" height="2.1" fill="#8cc024"/><rect x="259.7" y="151.1" width="3.0" height="1.7" fill="#c8a030"/><rect x="254.4" y="159.0" width="2.8" height="3.8" fill="#f0c428"/><rect x="274.7" y="142.3" width="1.7" height="2.7" fill="#8cc024"/><rect x="249.7" y="143.0" width="1.9" height="4.0" fill="#f0c428"/><rect x="265.0" y="160.9" width="1.8" height="2.8" fill="#9c2450"/><rect x="267.5" y="139.3" width="3.7" height="2.3" fill="#f0c428"/><rect x="274.5" y="155.3" width="1.9" height="3.8" fill="#f0c428"/><rect x="259.3" y="168.0" width="2.5" height="2.3" fill="#9c2450"/><rect x="243.3" y="159.2" width="4.4" height="1.9" fill="#8cc024"/><rect x="259.6" y="155.3" width="2.6" height="3.1" fill="#8cc024"/><rect x="277.9" y="164.1" width="1.6" height="4.0" fill="#8cc024"/><rect x="259.0" y="150.7" width="3.2" height="3.1" fill="#8cc024"/><rect x="251.6" y="173.8" width="2.8" height="3.8" fill="#9c2450"/><rect x="245.2" y="133.9" width="4.5" height="2.7" fill="#f0c428"/><rect x="274.0" y="151.9" width="3.8" height="1.9" fill="#8cc024"/><rect x="266.1" y="130.0" width="3.0" height="3.6" fill="#c8a030"/><rect x="270.5" y="140.7" width="2.7" height="3.5" fill="#f0c428"/><rect x="246.5" y="160.5" width="4.0" height="3.6" fill="#8cc024"/><rect x="263.1" y="160.8" width="3.2" height="3.6" fill="#8cc024"/><rect x="270.2" y="139.1" width="3.2" height="3.5" fill="#9c2450"/><rect x="268.3" y="148.7" width="3.2" height="2.7" fill="#9c2450"/><rect x="259.8" y="163.2" width="3.3" height="1.9" fill="#9c2450"/><rect x="256.6" y="158.9" width="2.0" height="2.4" fill="#9c2450"/><rect x="253.3" y="154.1" width="2.5" height="2.6" fill="#8cc024"/><rect x="260.1" y="145.7" width="2.5" height="2.9" fill="#8cc024"/><rect x="243.1" y="145.9" width="3.0" height="4.0" fill="#f0c428"/><rect x="292.9" y="209.0" width="4.3" height="1.7" fill="#9c2450"/><rect x="294.6" y="243.6" width="3.9" height="4.0" fill="#8cc024"/><rect x="305.8" y="230.1" width="4.0" height="1.5" fill="#9c2450"/><rect x="302.1" y="230.3" width="2.5" height="2.6" fill="#f0c428"/><rect x="278.7" y="215.9" width="4.1" height="4.0" fill="#8cc024"/><rect x="295.7" y="211.3" width="2.4" height="1.9" fill="#9c2450"/><rect x="297.2" y="235.6" width="4.2" height="1.5" fill="#8cc024"/><rect x="303.7" y="244.7" width="2.5" height="3.5" fill="#8cc024"/><rect x="307.6" y="190.5" width="2.6" height="2.0" fill="#8cc024"/><rect x="281.6" y="228.5" width="3.6" height="2.8" fill="#9c2450"/><rect x="305.3" y="218.1" width="1.7" height="3.7" fill="#c8a030"/><rect x="308.5" y="248.1" width="2.4" height="2.5" fill="#8cc024"/><rect x="297.4" y="208.6" width="2.3" height="2.6" fill="#f0c428"/><rect x="284.1" y="227.6" width="2.2" height="3.5" fill="#f0c428"/><rect x="304.7" y="225.5" width="3.2" height="3.2" fill="#c8a030"/><rect x="292.4" y="222.7" width="1.9" height="3.8" fill="#8cc024"/><rect x="300.0" y="205.2" width="2.3" height="3.7" fill="#8cc024"/><rect x="294.1" y="187.7" width="2.6" height="3.2" fill="#f0c428"/><rect x="286.7" y="238.0" width="2.9" height="2.5" fill="#9c2450"/><rect x="312.0" y="245.7" width="2.1" height="3.4" fill="#9c2450"/><rect x="293.0" y="215.2" width="3.1" height="2.0" fill="#8cc024"/><rect x="280.0" y="226.0" width="3.9" height="2.4" fill="#9c2450"/><rect x="304.3" y="225.1" width="2.2" height="3.2" fill="#c8a030"/><rect x="318.2" y="219.9" width="2.3" height="2.3" fill="#9c2450"/><rect x="296.9" y="228.5" width="4.3" height="2.2" fill="#c8a030"/><rect x="301.8" y="233.2" width="4.2" height="3.4" fill="#f0c428"/><rect x="297.5" y="235.9" width="2.4" height="1.8" fill="#f0c428"/><rect x="304.0" y="202.3" width="4.0" height="4.0" fill="#9c2450"/><rect x="299.6" y="208.8" width="3.4" height="2.1" fill="#9c2450"/><rect x="297.2" y="202.2" width="2.2" height="2.4" fill="#f0c428"/><rect x="305.5" y="205.7" width="3.3" height="2.2" fill="#f0c428"/><rect x="298.5" y="229.5" width="4.1" height="2.3" fill="#f0c428"/><rect x="288.4" y="250.1" width="4.3" height="3.1" fill="#8cc024"/><rect x="308.2" y="194.5" width="2.5" height="2.6" fill="#f0c428"/><rect x="300.2" y="218.4" width="1.6" height="2.9" fill="#f0c428"/><rect x="289.4" y="263.5" width="2.8" height="2.2" fill="#8cc024"/><rect x="289.4" y="241.0" width="3.4" height="3.7" fill="#8cc024"/><rect x="314.6" y="218.2" width="3.8" height="2.1" fill="#c8a030"/><rect x="288.8" y="209.2" width="3.4" height="2.3" fill="#c8a030"/><rect x="296.7" y="213.1" width="2.5" height="2.7" fill="#c8a030"/><rect x="290.3" y="242.6" width="4.3" height="3.0" fill="#8cc024"/><rect x="304.9" y="218.8" width="4.3" height="2.0" fill="#9c2450"/><rect x="294.3" y="230.9" width="3.8" height="2.1" fill="#c8a030"/><rect x="304.9" y="231.5" width="3.6" height="3.2" fill="#9c2450"/><rect x="295.1" y="224.0" width="2.0" height="2.8" fill="#c8a030"/><rect x="297.8" y="236.0" width="4.2" height="2.4" fill="#c8a030"/><rect x="293.0" y="223.6" width="3.3" height="2.2" fill="#8cc024"/><rect x="300.2" y="251.7" width="1.5" height="3.0" fill="#8cc024"/><rect x="295.9" y="253.4" width="3.8" height="1.7" fill="#9c2450"/><rect x="290.7" y="206.8" width="2.1" height="2.0" fill="#f0c428"/><rect x="281.4" y="215.3" width="2.2" height="3.6" fill="#9c2450"/><rect x="305.4" y="245.6" width="1.6" height="1.9" fill="#9c2450"/><rect x="294.5" y="231.1" width="2.7" height="2.0" fill="#c8a030"/><rect x="304.8" y="203.5" width="3.6" height="1.9" fill="#f0c428"/><rect x="300.7" y="225.5" width="3.0" height="3.9" fill="#c8a030"/><rect x="293.0" y="240.0" width="4.0" height="2.6" fill="#9c2450"/><rect x="288.6" y="226.7" width="2.1" height="3.7" fill="#8cc024"/><rect x="306.6" y="237.4" width="2.9" height="3.4" fill="#9c2450"/><rect x="293.8" y="228.5" width="1.8" height="3.8" fill="#f0c428"/><rect x="301.0" y="238.6" width="3.1" height="3.2" fill="#8cc024"/><rect x="302.1" y="238.9" width="1.7" height="1.5" fill="#8cc024"/><rect x="290.6" y="223.9" width="4.5" height="1.6" fill="#c8a030"/><rect x="302.0" y="214.3" width="3.6" height="2.0" fill="#c8a030"/><rect x="297.5" y="220.5" width="4.2" height="3.1" fill="#c8a030"/><rect x="292.7" y="201.4" width="3.9" height="2.9" fill="#9c2450"/><rect x="303.2" y="231.1" width="4.1" height="3.9" fill="#8cc024"/><rect x="287.5" y="256.2" width="1.6" height="2.9" fill="#f0c428"/><rect x="300.0" y="228.9" width="4.0" height="3.1" fill="#9c2450"/><rect x="313.2" y="193.1" width="3.1" height="1.8" fill="#f0c428"/><rect x="297.7" y="227.5" width="2.5" height="3.7" fill="#f0c428"/><rect x="293.1" y="240.9" width="4.1" height="3.5" fill="#9c2450"/><rect x="304.5" y="230.8" width="4.1" height="1.6" fill="#8cc024"/><rect x="301.8" y="210.5" width="3.2" height="2.4" fill="#8cc024"/><rect x="295.0" y="224.4" width="3.4" height="3.1" fill="#c8a030"/><rect x="296.2" y="206.8" width="1.8" height="3.8" fill="#8cc024"/><rect x="298.3" y="226.2" width="2.0" height="2.3" fill="#8cc024"/><rect x="294.8" y="246.5" width="2.6" height="3.7" fill="#c8a030"/><rect x="304.1" y="207.2" width="3.7" height="2.6" fill="#8cc024"/><rect x="309.2" y="236.3" width="4.4" height="2.9" fill="#f0c428"/><rect x="297.7" y="232.3" width="1.7" height="2.3" fill="#8cc024"/><rect x="295.6" y="190.1" width="3.1" height="2.4" fill="#8cc024"/><rect x="305.0" y="245.9" width="2.3" height="3.1" fill="#c8a030"/><rect x="294.0" y="250.6" width="2.1" height="1.9" fill="#8cc024"/><rect x="296.7" y="226.0" width="3.9" height="1.8" fill="#8cc024"/><rect x="294.2" y="207.6" width="4.5" height="2.0" fill="#c8a030"/><rect x="302.1" y="226.3" width="2.7" height="2.3" fill="#f0c428"/><rect x="299.0" y="196.6" width="2.3" height="2.9" fill="#c8a030"/><rect x="284.8" y="222.1" width="4.1" height="2.3" fill="#9c2450"/><rect x="313.5" y="238.9" width="2.5" height="3.1" fill="#c8a030"/><rect x="299.1" y="213.9" width="1.6" height="2.1" fill="#c8a030"/><rect x="301.9" y="236.1" width="2.4" height="2.1" fill="#f0c428"/><rect x="299.8" y="215.0" width="3.2" height="1.5" fill="#8cc024"/><rect x="280.4" y="197.3" width="3.4" height="2.8" fill="#c8a030"/><rect x="298.9" y="207.2" width="4.1" height="2.8" fill="#8cc024"/><rect x="282.9" y="224.7" width="2.0" height="2.6" fill="#c8a030"/><rect x="314.3" y="226.1" width="3.9" height="2.3" fill="#8cc024"/><rect x="292.2" y="222.6" width="3.8" height="3.0" fill="#9c2450"/><rect x="291.5" y="232.2" width="1.9" height="2.7" fill="#9c2450"/><rect x="287.0" y="229.3" width="4.4" height="2.5" fill="#8cc024"/><rect x="304.8" y="246.2" width="2.8" height="3.7" fill="#f0c428"/><rect x="302.2" y="218.8" width="2.5" height="3.3" fill="#8cc024"/><rect x="302.5" y="212.1" width="2.4" height="2.2" fill="#9c2450"/><rect x="298.1" y="218.0" width="4.1" height="2.5" fill="#8cc024"/><rect x="294.5" y="219.3" width="2.6" height="3.5" fill="#c8a030"/><rect x="310.0" y="250.8" width="2.7" height="2.0" fill="#9c2450"/><rect x="283.1" y="244.3" width="2.9" height="3.4" fill="#8cc024"/><rect x="294.4" y="234.8" width="3.3" height="3.0" fill="#8cc024"/><rect x="298.8" y="205.7" width="2.0" height="3.2" fill="#8cc024"/><rect x="291.1" y="223.0" width="4.1" height="1.9" fill="#8cc024"/><rect x="301.3" y="210.7" width="4.0" height="3.1" fill="#c8a030"/><rect x="300.7" y="264.5" width="3.8" height="3.3" fill="#9c2450"/><rect x="293.3" y="211.7" width="3.6" height="1.9" fill="#8cc024"/><rect x="300.5" y="208.3" width="3.8" height="3.8" fill="#8cc024"/><rect x="278.0" y="220.9" width="1.8" height="2.9" fill="#c8a030"/><rect x="289.0" y="224.0" width="3.5" height="2.5" fill="#f0c428"/><rect x="303.0" y="220.4" width="4.2" height="1.7" fill="#f0c428"/><rect x="289.1" y="243.8" width="2.2" height="1.6" fill="#f0c428"/><rect x="291.0" y="230.4" width="2.3" height="2.0" fill="#8cc024"/><rect x="295.8" y="214.1" width="3.1" height="1.9" fill="#8cc024"/><rect x="287.6" y="169.4" width="3.6" height="2.1" fill="#f0c428"/><rect x="18.3" y="149.5" width="1.7" height="2.5" fill="#f0c428"/><rect x="16.9" y="136.2" width="4.1" height="2.4" fill="#c8a030"/><rect x="18.7" y="149.6" width="2.7" height="2.6" fill="#8cc024"/><rect x="1.5" y="138.8" width="3.0" height="1.8" fill="#8cc024"/><rect x="7.5" y="142.1" width="2.9" height="2.4" fill="#c8a030"/><rect x="21.6" y="134.5" width="3.1" height="2.3" fill="#8cc024"/><rect x="10.8" y="135.4" width="4.3" height="3.2" fill="#8cc024"/><rect x="0.1" y="146.4" width="3.8" height="3.4" fill="#8cc024"/><rect x="37.1" y="149.2" width="4.1" height="3.1" fill="#8cc024"/><rect x="11.6" y="132.8" width="2.9" height="3.1" fill="#9c2450"/><rect x="29.8" y="138.8" width="4.3" height="2.5" fill="#9c2450"/><rect x="8.8" y="148.7" width="3.9" height="2.4" fill="#8cc024"/><rect x="22.5" y="145.7" width="3.1" height="3.5" fill="#8cc024"/><rect x="21.8" y="132.5" width="4.4" height="3.1" fill="#f0c428"/><rect x="9.1" y="152.5" width="4.2" height="3.9" fill="#9c2450"/><rect x="14.9" y="147.1" width="3.1" height="1.9" fill="#9c2450"/><rect x="-3.4" y="144.4" width="4.0" height="1.9" fill="#f0c428"/><rect x="23.9" y="142.9" width="1.9" height="1.7" fill="#f0c428"/><rect x="1.6" y="137.6" width="2.8" height="3.8" fill="#9c2450"/><rect x="21.4" y="149.9" width="2.2" height="1.6" fill="#c8a030"/><rect x="16.3" y="151.5" width="2.3" height="2.8" fill="#c8a030"/><rect x="11.7" y="145.3" width="1.5" height="3.4" fill="#f0c428"/><rect x="22.5" y="137.6" width="4.4" height="1.9" fill="#9c2450"/><rect x="21.9" y="147.7" width="4.2" height="3.4" fill="#c8a030"/><rect x="26.3" y="151.9" width="3.7" height="2.1" fill="#8cc024"/><rect x="13.2" y="144.1" width="3.9" height="2.3" fill="#9c2450"/><rect x="7.6" y="136.8" width="3.0" height="2.4" fill="#9c2450"/><rect x="16.3" y="132.1" width="2.5" height="1.9" fill="#c8a030"/><rect x="17.3" y="153.8" width="3.3" height="3.9" fill="#f0c428"/><rect x="16.7" y="157.4" width="2.6" height="3.7" fill="#8cc024"/><rect x="22.0" y="135.5" width="3.1" height="2.9" fill="#8cc024"/><rect x="15.6" y="151.3" width="3.2" height="3.3" fill="#c8a030"/><rect x="17.1" y="131.2" width="4.1" height="3.0" fill="#f0c428"/><rect x="14.2" y="143.9" width="1.7" height="3.8" fill="#8cc024"/><rect x="22.5" y="132.8" width="2.3" height="3.0" fill="#9c2450"/><rect x="24.5" y="140.9" width="4.4" height="3.6" fill="#8cc024"/><rect x="11.6" y="127.9" width="4.2" height="3.1" fill="#9c2450"/><rect x="10.1" y="137.3" width="3.8" height="2.0" fill="#f0c428"/><rect x="15.7" y="139.9" width="2.8" height="3.6" fill="#8cc024"/><rect x="9.6" y="147.2" width="3.5" height="1.9" fill="#f0c428"/><rect x="3.0" y="138.4" width="1.6" height="2.3" fill="#f0c428"/><rect x="16.4" y="138.7" width="1.7" height="2.7" fill="#f0c428"/><rect x="3.7" y="147.7" width="4.4" height="2.8" fill="#8cc024"/><rect x="12.4" y="141.7" width="4.1" height="2.8" fill="#c8a030"/><rect x="17.2" y="142.8" width="2.3" height="2.0" fill="#8cc024"/><rect x="5.8" y="141.8" width="3.7" height="2.1" fill="#c8a030"/><rect x="14.9" y="150.5" width="4.3" height="3.7" fill="#f0c428"/><rect x="11.5" y="143.7" width="1.8" height="2.3" fill="#9c2450"/><rect x="28.5" y="139.0" width="4.3" height="4.0" fill="#c8a030"/><rect x="-3.7" y="136.4" width="2.9" height="2.7" fill="#f0c428"/><rect x="57.5" y="243.3" width="3.9" height="2.2" fill="#f0c428"/><rect x="82.2" y="227.0" width="2.3" height="1.8" fill="#8cc024"/><rect x="81.7" y="240.6" width="3.5" height="1.5" fill="#f0c428"/><rect x="90.4" y="244.8" width="3.6" height="3.5" fill="#f0c428"/><rect x="76.0" y="252.3" width="2.5" height="3.3" fill="#9c2450"/><rect x="67.3" y="246.1" width="2.1" height="3.7" fill="#8cc024"/><rect x="67.9" y="247.8" width="4.3" height="2.3" fill="#8cc024"/><rect x="74.0" y="234.0" width="4.2" height="4.0" fill="#8cc024"/><rect x="82.0" y="238.3" width="2.8" height="1.5" fill="#8cc024"/><rect x="61.5" y="246.0" width="3.4" height="3.8" fill="#f0c428"/><rect x="82.3" y="244.5" width="4.0" height="3.8" fill="#8cc024"/><rect x="81.3" y="235.4" width="2.8" height="3.8" fill="#c8a030"/><rect x="71.4" y="249.2" width="3.8" height="3.4" fill="#8cc024"/><rect x="99.2" y="256.6" width="2.9" height="3.3" fill="#8cc024"/><rect x="74.5" y="242.3" width="2.6" height="2.9" fill="#f0c428"/><rect x="70.3" y="250.3" width="3.2" height="3.7" fill="#f0c428"/><rect x="79.3" y="238.5" width="3.5" height="2.3" fill="#8cc024"/><rect x="82.6" y="239.2" width="3.5" height="1.6" fill="#c8a030"/><rect x="74.2" y="261.5" width="2.5" height="3.0" fill="#f0c428"/><rect x="87.2" y="242.4" width="3.7" height="2.9" fill="#9c2450"/><rect x="82.0" y="228.4" width="1.8" height="2.6" fill="#8cc024"/><rect x="97.5" y="246.0" width="3.5" height="3.2" fill="#9c2450"/><rect x="80.9" y="239.2" width="2.7" height="3.7" fill="#9c2450"/><rect x="83.9" y="238.4" width="2.2" height="2.4" fill="#9c2450"/><rect x="79.8" y="235.8" width="2.0" height="3.7" fill="#f0c428"/><rect x="83.8" y="253.4" width="1.6" height="3.7" fill="#9c2450"/><rect x="60.0" y="238.6" width="4.5" height="1.8" fill="#8cc024"/><rect x="90.2" y="251.8" width="4.4" height="3.4" fill="#9c2450"/><rect x="86.1" y="238.6" width="2.2" height="3.5" fill="#f0c428"/><rect x="87.2" y="228.1" width="2.3" height="1.7" fill="#8cc024"/><rect x="78.2" y="235.7" width="3.7" height="2.0" fill="#f0c428"/><rect x="75.6" y="241.0" width="4.2" height="2.2" fill="#8cc024"/><rect x="81.8" y="239.2" width="4.3" height="2.2" fill="#9c2450"/><rect x="64.9" y="244.8" width="2.8" height="3.8" fill="#f0c428"/><rect x="71.1" y="246.2" width="2.8" height="3.9" fill="#8cc024"/><rect x="93.8" y="240.4" width="2.7" height="3.5" fill="#8cc024"/><rect x="63.2" y="221.9" width="2.8" height="1.7" fill="#f0c428"/><rect x="84.3" y="246.3" width="3.9" height="2.6" fill="#8cc024"/><rect x="91.5" y="245.5" width="3.0" height="1.8" fill="#9c2450"/><rect x="77.3" y="248.5" width="3.3" height="2.1" fill="#f0c428"/><rect x="88.7" y="244.4" width="2.2" height="2.3" fill="#8cc024"/><rect x="75.0" y="250.2" width="4.3" height="3.9" fill="#8cc024"/><rect x="76.3" y="224.9" width="2.8" height="2.1" fill="#c8a030"/><rect x="78.6" y="236.0" width="3.6" height="3.5" fill="#8cc024"/><rect x="73.0" y="238.2" width="2.2" height="1.9" fill="#f0c428"/><rect x="87.5" y="243.3" width="4.2" height="3.5" fill="#8cc024"/><rect x="82.9" y="242.5" width="4.4" height="1.7" fill="#c8a030"/><rect x="102.5" y="244.5" width="2.1" height="3.5" fill="#9c2450"/><rect x="68.3" y="244.9" width="2.8" height="2.7" fill="#8cc024"/><rect x="67.6" y="255.8" width="3.9" height="2.0" fill="#9c2450"/><rect x="52.9" y="237.6" width="1.5" height="3.9" fill="#c8a030"/><rect x="92.3" y="257.6" width="3.6" height="2.1" fill="#8cc024"/><rect x="80.7" y="238.2" width="3.5" height="2.9" fill="#c8a030"/><rect x="72.3" y="260.6" width="2.1" height="3.4" fill="#9c2450"/><rect x="73.5" y="243.9" width="2.6" height="2.2" fill="#8cc024"/><rect x="104.1" y="228.7" width="1.8" height="3.6" fill="#f0c428"/><rect x="89.3" y="233.8" width="2.2" height="2.5" fill="#f0c428"/><rect x="73.7" y="253.9" width="3.3" height="1.8" fill="#9c2450"/><rect x="83.3" y="246.7" width="3.0" height="3.7" fill="#8cc024"/><rect x="80.5" y="249.3" width="2.0" height="3.9" fill="#8cc024"/><rect x="77.8" y="248.2" width="2.9" height="2.2" fill="#8cc024"/><rect x="80.8" y="243.7" width="2.4" height="2.7" fill="#9c2450"/><rect x="81.4" y="230.7" width="4.3" height="2.1" fill="#9c2450"/><rect x="93.8" y="241.1" width="1.6" height="1.8" fill="#f0c428"/><rect x="87.4" y="243.9" width="3.3" height="3.5" fill="#8cc024"/><rect x="86.6" y="237.1" width="3.2" height="3.2" fill="#8cc024"/><rect x="72.1" y="234.3" width="3.1" height="3.5" fill="#c8a030"/><rect x="91.4" y="245.0" width="3.9" height="2.9" fill="#9c2450"/><rect x="86.2" y="242.6" width="2.6" height="2.7" fill="#8cc024"/><rect x="90.4" y="256.5" width="1.7" height="3.8" fill="#f0c428"/><rect x="42.0" y="166.8" width="1.8" height="2.7" fill="#f0c428"/><rect x="66.4" y="174.4" width="4.3" height="2.5" fill="#9c2450"/><rect x="71.4" y="176.7" width="4.3" height="3.3" fill="#9c2450"/><rect x="55.2" y="158.3" width="3.6" height="2.4" fill="#f0c428"/><rect x="59.5" y="174.2" width="4.0" height="2.2" fill="#8cc024"/><rect x="54.1" y="172.1" width="4.0" height="1.6" fill="#8cc024"/><rect x="43.1" y="179.4" width="1.9" height="1.7" fill="#9c2450"/><rect x="54.1" y="171.6" width="4.1" height="2.7" fill="#c8a030"/><rect x="78.4" y="162.5" width="3.2" height="1.9" fill="#f0c428"/><rect x="73.0" y="163.9" width="2.2" height="2.9" fill="#8cc024"/><rect x="58.2" y="178.4" width="2.9" height="3.0" fill="#8cc024"/><rect x="72.9" y="172.7" width="2.3" height="1.6" fill="#9c2450"/><rect x="73.5" y="185.2" width="3.2" height="3.8" fill="#9c2450"/><rect x="66.5" y="173.5" width="3.5" height="2.0" fill="#8cc024"/><rect x="71.6" y="179.7" width="3.5" height="2.6" fill="#8cc024"/><rect x="55.5" y="169.2" width="2.2" height="2.1" fill="#9c2450"/><rect x="63.0" y="161.7" width="1.8" height="1.9" fill="#8cc024"/><rect x="69.8" y="158.1" width="3.7" height="1.6" fill="#c8a030"/><rect x="76.9" y="178.6" width="1.5" height="1.7" fill="#8cc024"/><rect x="67.9" y="165.2" width="2.3" height="2.2" fill="#9c2450"/><rect x="76.2" y="187.7" width="2.2" height="3.2" fill="#c8a030"/><rect x="63.3" y="178.2" width="4.1" height="1.9" fill="#f0c428"/><rect x="70.3" y="158.1" width="4.0" height="3.1" fill="#f0c428"/><rect x="75.2" y="170.6" width="4.2" height="2.1" fill="#f0c428"/><rect x="66.4" y="171.7" width="2.1" height="2.1" fill="#c8a030"/><rect x="72.6" y="178.0" width="2.6" height="2.5" fill="#f0c428"/><rect x="77.7" y="167.8" width="3.9" height="2.9" fill="#8cc024"/><rect x="59.6" y="178.0" width="4.2" height="3.4" fill="#f0c428"/><rect x="69.9" y="162.2" width="1.7" height="2.0" fill="#c8a030"/><rect x="61.2" y="165.7" width="1.6" height="3.9" fill="#9c2450"/><rect x="94.8" y="175.0" width="1.9" height="3.2" fill="#f0c428"/><rect x="86.2" y="169.8" width="3.6" height="3.3" fill="#8cc024"/><rect x="59.5" y="170.2" width="1.5" height="3.4" fill="#f0c428"/><rect x="59.7" y="177.4" width="4.5" height="1.6" fill="#f0c428"/><rect x="81.3" y="166.1" width="3.6" height="2.1" fill="#c8a030"/><rect x="71.8" y="170.9" width="2.7" height="2.3" fill="#c8a030"/><rect x="50.0" y="175.0" width="2.5" height="2.9" fill="#9c2450"/><rect x="65.3" y="179.5" width="3.7" height="1.9" fill="#8cc024"/><rect x="76.6" y="171.4" width="4.1" height="4.0" fill="#c8a030"/><rect x="61.8" y="166.9" width="3.0" height="3.3" fill="#8cc024"/><rect x="66.8" y="177.1" width="2.0" height="2.4" fill="#8cc024"/><rect x="77.7" y="187.4" width="2.1" height="2.8" fill="#c8a030"/><rect x="76.2" y="163.8" width="3.7" height="2.6" fill="#8cc024"/><rect x="80.3" y="160.8" width="3.4" height="2.6" fill="#8cc024"/><rect x="44.9" y="178.3" width="2.9" height="1.9" fill="#f0c428"/><rect x="68.8" y="170.8" width="4.0" height="1.6" fill="#c8a030"/><rect x="70.9" y="162.7" width="3.4" height="2.3" fill="#f0c428"/><rect x="86.5" y="172.0" width="1.6" height="3.0" fill="#9c2450"/><rect x="62.5" y="176.3" width="4.3" height="3.0" fill="#8cc024"/><rect x="79.7" y="171.2" width="4.2" height="2.2" fill="#9c2450"/><rect x="48.8" y="167.4" width="4.0" height="2.1" fill="#f0c428"/><rect x="71.9" y="169.9" width="1.6" height="2.0" fill="#9c2450"/><rect x="75.8" y="169.2" width="3.6" height="1.6" fill="#8cc024"/><rect x="68.1" y="158.7" width="1.9" height="3.1" fill="#8cc024"/><rect x="39.7" y="180.1" width="3.9" height="3.6" fill="#8cc024"/><rect x="49.4" y="174.7" width="4.3" height="3.8" fill="#8cc024"/><rect x="74.5" y="181.3" width="2.8" height="3.6" fill="#8cc024"/><rect x="78.1" y="175.0" width="3.9" height="3.7" fill="#8cc024"/><rect x="64.0" y="178.0" width="4.1" height="3.5" fill="#9c2450"/><rect x="92.4" y="159.7" width="3.0" height="3.5" fill="#9c2450"/><rect x="86.5" y="182.2" width="3.6" height="1.5" fill="#f0c428"/><rect x="71.9" y="182.9" width="3.9" height="2.5" fill="#8cc024"/><rect x="87.6" y="165.7" width="3.0" height="1.9" fill="#8cc024"/><rect x="68.8" y="172.2" width="3.1" height="2.8" fill="#c8a030"/><rect x="90.1" y="176.2" width="2.9" height="1.6" fill="#9c2450"/><rect x="62.6" y="181.0" width="2.1" height="1.9" fill="#8cc024"/><rect x="45.9" y="166.6" width="4.3" height="3.8" fill="#9c2450"/><rect x="51.9" y="177.8" width="3.1" height="3.2" fill="#9c2450"/><rect x="65.4" y="179.3" width="2.5" height="3.0" fill="#9c2450"/><rect x="83.4" y="171.1" width="2.8" height="2.9" fill="#9c2450"/><rect x="87.2" y="92.5" width="3.4" height="2.2" fill="#f0c428"/><rect x="161.3" y="100.3" width="2.6" height="2.4" fill="#f0c428"/><rect x="139.1" y="105.8" width="4.2" height="4.0" fill="#8cc024"/><rect x="151.0" y="86.3" width="1.8" height="1.6" fill="#f0c428"/><rect x="121.7" y="102.3" width="2.7" height="3.0" fill="#c8a030"/><rect x="155.5" y="90.3" width="1.9" height="3.5" fill="#c8a030"/><rect x="123.2" y="103.3" width="3.5" height="2.0" fill="#8cc024"/><rect x="163.9" y="104.5" width="3.2" height="2.4" fill="#c8a030"/><rect x="159.7" y="103.3" width="2.3" height="1.7" fill="#9c2450"/><rect x="140.2" y="82.3" width="3.6" height="3.9" fill="#f0c428"/><rect x="146.5" y="96.1" width="2.3" height="3.4" fill="#9c2450"/><rect x="152.4" y="99.2" width="2.3" height="3.1" fill="#c8a030"/><rect x="133.3" y="109.9" width="4.3" height="2.6" fill="#9c2450"/><rect x="148.1" y="97.2" width="3.6" height="1.7" fill="#8cc024"/><rect x="152.1" y="90.7" width="3.9" height="3.6" fill="#f0c428"/><rect x="128.6" y="104.5" width="3.9" height="2.6" fill="#9c2450"/><rect x="177.5" y="103.5" width="2.4" height="1.8" fill="#8cc024"/><rect x="137.8" y="101.4" width="4.2" height="2.5" fill="#8cc024"/><rect x="139.8" y="100.5" width="2.3" height="2.7" fill="#9c2450"/><rect x="143.7" y="100.7" width="3.4" height="1.7" fill="#c8a030"/><rect x="169.4" y="98.0" width="1.8" height="1.9" fill="#9c2450"/><rect x="157.2" y="103.7" width="2.0" height="3.5" fill="#8cc024"/><rect x="140.3" y="83.0" width="1.6" height="1.5" fill="#f0c428"/><rect x="141.3" y="114.2" width="4.5" height="2.0" fill="#c8a030"/><rect x="122.9" y="102.4" width="2.2" height="2.2" fill="#8cc024"/><rect x="137.4" y="88.4" width="3.6" height="2.5" fill="#9c2450"/><rect x="160.3" y="90.3" width="3.4" height="2.0" fill="#8cc024"/><rect x="143.2" y="96.5" width="2.0" height="3.0" fill="#c8a030"/><rect x="156.4" y="101.3" width="4.0" height="1.6" fill="#c8a030"/><rect x="174.7" y="93.7" width="3.5" height="2.4" fill="#f0c428"/><rect x="161.2" y="101.9" width="2.6" height="1.6" fill="#c8a030"/><rect x="167.0" y="108.6" width="4.4" height="3.5" fill="#8cc024"/><rect x="133.2" y="89.6" width="2.5" height="3.1" fill="#9c2450"/><rect x="151.3" y="105.2" width="3.9" height="2.5" fill="#8cc024"/><rect x="181.5" y="98.2" width="2.0" height="3.2" fill="#8cc024"/><rect x="135.0" y="89.2" width="2.2" height="1.8" fill="#f0c428"/><rect x="136.9" y="97.9" width="4.2" height="2.7" fill="#9c2450"/><rect x="159.7" y="89.7" width="3.7" height="1.7" fill="#c8a030"/><rect x="145.9" y="107.0" width="3.8" height="3.1" fill="#8cc024"/><rect x="159.3" y="95.8" width="4.0" height="3.1" fill="#f0c428"/><rect x="183.9" y="101.3" width="4.0" height="2.6" fill="#f0c428"/><rect x="134.8" y="89.3" width="2.7" height="2.7" fill="#9c2450"/><rect x="170.9" y="105.7" width="2.0" height="1.8" fill="#c8a030"/><rect x="165.1" y="106.9" width="3.0" height="1.9" fill="#c8a030"/><rect x="111.9" y="104.7" width="1.6" height="2.4" fill="#f0c428"/><rect x="194.5" y="95.8" width="2.7" height="3.3" fill="#9c2450"/><rect x="150.8" y="102.5" width="2.2" height="3.7" fill="#f0c428"/><rect x="141.7" y="106.5" width="1.6" height="3.9" fill="#8cc024"/><rect x="147.3" y="102.0" width="2.0" height="3.2" fill="#f0c428"/><rect x="151.4" y="102.8" width="2.1" height="4.0" fill="#8cc024"/><rect width="317" height="259" filter="url(#spk2)"/><path d="M99 0C97 15 93 30 90 38S80 56 74 65S62 82 56 90S44 110 40 117S35 126 34 130S42 165 45 175S53 210 54 220V259" fill="none" stroke="#a8a030" stroke-width="1.300"/><path d="M85.600 67.600L60.800 130L47 155M133 29L187 130L254.600 242.600M126 152.500L77.700 224.600M122.800 186V260M110 50L75 62" fill="none" stroke="#8cc024" stroke-width="1" opacity=".9"/><path d="M0 0H61C64 10 60 22 57 32C56 42 58 46 50 58C42 68 22 80 0 90z" fill="#17688c"/><path d="M61 0C64 10 60 22 57 32C56 42 58 46 50 58C42 68 22 80 0 90" fill="none" stroke="#e8e0a0" stroke-width="0.800" opacity=".7"/><path d="M308 18C314 16 317 20 317 20V86C312 92 304 90 302 86C304 70 302 50 306 34z" fill="#2880aa"/></g></svg>
<div style="left:334.5px;top:793px;width:372.5px;height:2px;background:#000;"></div>
<div style="left:711px;top:72px;width:312px;height:17px;background:#2c2c2f;"></div>
<span class="t" style="left:711.6px;top:76.13px;font-size:10px;line-height:12.0px;color:#f0f0f0;font-weight:400;transform:scaleX(0.911);">Process Tree</span>
<div style="left:773.3px;top:80.2px;width:200.20000000000005px;height:2px;background:repeating-linear-gradient(90deg,#4a4a50 0 1px,#39393d 1px 2px);opacity:.85"></div>
<svg style="left:978.5px;top:78.5px;" width="9" height="6" viewBox="0 0 9 6"><path d="M0.500 0.500h8l-4 4.500z" fill="#e8e8e8"/></svg>
<svg style="left:995.8px;top:76.4px;" width="7" height="10" viewBox="0 0 7 10"><path d="M1.700 0.900h3.400M2 0.900v4.200M4.800 0.900v4.200M0.600 5.100h5.600M3.400 5.300v3.600" stroke="#e8e8e8" stroke-width="0.900" fill="none"/><path d="M4.300 0.900v4.200" stroke="#e8e8e8" stroke-width="1.100"/></svg>
<svg style="left:1011.1px;top:77.5px;" width="7" height="7" viewBox="0 0 7 7"><path d="M0.600 0.600l5.800 5.800M6.400 0.600l-5.800 5.800" stroke="#e8e8e8" stroke-width="1.300"/></svg>
<svg style="left:714.5px;top:95px;" width="21" height="21" viewBox="0 0 21 21"><rect x="0.800" y="0.300" width="17.600" height="4.200" rx="2.100" fill="#dcdaea"/><rect x="3.200" y="7.200" width="13" height="3.800" rx="1.900" fill="#c4c2d4"/><rect x="3.200" y="13.800" width="7" height="3.800" rx="1.900" fill="#c4c2d4"/><rect x="5.500" y="7.200" width="2" height="3.800" fill="#f0f0f8"/><rect x="5" y="13.800" width="1.600" height="3.800" fill="#f0f0f8"/><circle cx="15" cy="15" r="5.8" fill="#1b8fd6"/><rect x="11.8" y="11.8" width="6.4" height="6.400" fill="none" stroke="#fff" stroke-width="1.100"/><rect x="13" y="11.8" width="4" height="2.200" fill="#fff"/></svg>
<svg style="left:746px;top:96px;" width="16" height="19" viewBox="0 0 16 19"><path d="M6.600 5.700h1.500a5.800 5.800 0 0 1 0 11.600h-1.800" fill="none" stroke="#f6f6f6" stroke-width="2.700"/><path d="M0.600 5.200l5.800-4.400v9.300z" fill="#f6f6f6"/></svg>
<svg style="left:774.500px;top:96px;transform:scaleX(-1)" width="16" height="19" viewBox="0 0 16 19"><path d="M6.600 5.700h1.500a5.800 5.800 0 0 1 0 11.600h-1.800" fill="none" stroke="#6c6c70" stroke-width="2.700"/><path d="M0.600 5.200l5.800-4.400v9.300z" fill="#6c6c70"/></svg>
<svg style="left:800px;top:96px;" width="22" height="20" viewBox="0 0 22 20"><path d="M0.6 8.11l5.25 2.31l5.25 -2.31v2l-5.25 2.31l-5.25 -2.31z" fill="#f4f4fc" stroke="#a09eb8" stroke-width="0.400"/><path d="M0.6 5.81l5.25 2.31l5.25 -2.31v2l-5.25 2.31l-5.25 -2.31z" fill="#f4f4fc" stroke="#a09eb8" stroke-width="0.400"/><path d="M0.6 3.51l5.25 2.31l5.25 -2.31v2l-5.25 2.31l-5.25 -2.31z" fill="#f4f4fc" stroke="#a09eb8" stroke-width="0.400"/><path d="M0.6 3.51l5.25 -2.31l5.25 2.31l-5.25 2.31z" fill="#f2cc2a"/><path d="M2.91 3.8099999999999996l2.9400000000000004 -1.2936l2.9400000000000004 1.2936l-2.9400000000000004 1.2936z" fill="#16162a"/><path d="M9.4 11.93l5.75 2.53l5.75 -2.53v2l-5.75 2.53l-5.75 -2.53z" fill="#f4f4fc" stroke="#a09eb8" stroke-width="0.400"/><path d="M9.4 9.629999999999999l5.75 2.53l5.75 -2.53v2l-5.75 2.53l-5.75 -2.53z" fill="#f4f4fc" stroke="#a09eb8" stroke-width="0.400"/><path d="M9.4 7.33l5.75 2.53l5.75 -2.53v2l-5.75 2.53l-5.75 -2.53z" fill="#f4f4fc" stroke="#a09eb8" stroke-width="0.400"/><path d="M9.4 7.33l5.75 -2.53l5.75 2.53l-5.75 2.53z" fill="#f2cc2a"/><path d="M11.93 7.63l3.22 -1.4168l3.22 1.4168l-3.22 1.4168z" fill="#16162a"/></svg>
<svg style="left:830px;top:96px;" width="22" height="20" viewBox="0 0 22 20"><path d="M0.6 8.329999999999998l5.75 2.53l5.75 -2.53v2l-5.75 2.53l-5.75 -2.53z" fill="#66666a" stroke="#505054" stroke-width="0.400"/><path d="M0.6 6.029999999999999l5.75 2.53l5.75 -2.53v2l-5.75 2.53l-5.75 -2.53z" fill="#66666a" stroke="#505054" stroke-width="0.400"/><path d="M0.6 3.7299999999999995l5.75 2.53l5.75 -2.53v2l-5.75 2.53l-5.75 -2.53z" fill="#66666a" stroke="#505054" stroke-width="0.400"/><path d="M0.6 3.7299999999999995l5.75 -2.53l5.75 2.53l-5.75 2.53z" fill="#707074"/><path d="M3.13 4.029999999999999l3.22 -1.4168l3.22 1.4168l-3.22 1.4168z" fill="#4a4a4e"/><path d="M6 10.3l5.0 2.2l5.0 -2.2v2l-5.0 2.2l-5.0 -2.2z" fill="#66666a" stroke="#505054" stroke-width="0.400"/><path d="M6 8.0l5.0 2.2l5.0 -2.2v2l-5.0 2.2l-5.0 -2.2z" fill="#66666a" stroke="#505054" stroke-width="0.400"/><path d="M6 5.7l5.0 2.2l5.0 -2.2v2l-5.0 2.2l-5.0 -2.2z" fill="#66666a" stroke="#505054" stroke-width="0.400"/><path d="M6 5.7l5.0 -2.2l5.0 2.2l-5.0 2.2z" fill="#707074"/><path d="M8.2 6.0l2.8000000000000003 -1.2320000000000002l2.8000000000000003 1.2320000000000002l-2.8000000000000003 1.2320000000000002z" fill="#4a4a4e"/><circle cx="15" cy="13" r="4.300" fill="#505054" stroke="#6c6c70" stroke-width="0.900"/></svg>
<div style="left:710.5px;top:119.8px;width:312.5px;height:320.5px;background:#252526;border:1px solid #4a4a4e;box-sizing:border-box;"></div>
<div style="left:719.5px;top:133px;width:1px;height:47px;background:#434347;"></div>
<div style="left:734.5px;top:148px;width:1px;height:40px;background:#434347;"></div>
<div style="left:749.5px;top:193px;width:1px;height:84px;background:#434347;"></div>
<div style="left:764.5px;top:193px;width:1px;height:70px;background:#434347;"></div>
<div style="left:764.5px;top:282px;width:1px;height:69px;background:#434347;"></div>
<div style="left:764.5px;top:203.14999999999998px;width:9px;height:1px;background:#434347;"></div>
<div style="left:764.5px;top:217.95999999999998px;width:9px;height:1px;background:#434347;"></div>
<div style="left:764.5px;top:232.76999999999998px;width:9px;height:1px;background:#434347;"></div>
<div style="left:764.5px;top:247.57999999999998px;width:9px;height:1px;background:#434347;"></div>
<div style="left:764.5px;top:262.39px;width:9px;height:1px;background:#434347;"></div>
<div style="left:764.5px;top:292.01px;width:9px;height:1px;background:#434347;"></div>
<div style="left:764.5px;top:306.82px;width:9px;height:1px;background:#434347;"></div>
<div style="left:764.5px;top:321.63px;width:9px;height:1px;background:#434347;"></div>
<div style="left:764.5px;top:336.44px;width:9px;height:1px;background:#434347;"></div>
<div style="left:764.5px;top:351.25px;width:9px;height:1px;background:#434347;"></div>
<svg style="left:715.7px;top:125.1px;" width="8" height="8" viewBox="0 0 8 8"><rect x="0.500" y="0.500" width="7" height="7" fill="#e4e4e4" stroke="#fafafa" stroke-width="0.800"/><path d="M1.800 4h4.400" stroke="#222" stroke-width="1.100"/></svg>
<div style="left:732px;top:125.89999999999999px;width:5.8px;height:5.8px;background:#e8e8e8;"></div>
<span class="t" style="left:744.5px;top:122.53px;font-size:11.3px;line-height:13.56px;color:#f0f0f0;font-weight:400;transform:scaleX(0.949);">Majority vote feature</span>
<svg style="left:731px;top:139.91px;" width="8" height="8" viewBox="0 0 8 8"><rect x="0.500" y="0.500" width="7" height="7" fill="#e4e4e4" stroke="#fafafa" stroke-width="0.800"/><path d="M1.800 4h4.400" stroke="#222" stroke-width="1.100"/></svg>
<div style="left:747px;top:140.71px;width:5.8px;height:5.8px;background:#e8e8e8;"></div>
<span class="t" style="left:759.6px;top:137.34px;font-size:11.3px;line-height:13.56px;color:#f0f0f0;font-weight:400;transform:scaleX(0.930);">Create second level above existing for Majority Vote Clas</span>
<svg style="left:746px;top:154.72px;" width="8" height="8" viewBox="0 0 8 8"><rect x="0.500" y="0.500" width="7" height="7" fill="#e4e4e4" stroke="#fafafa" stroke-width="0.800"/><path d="M1.800 4h4.400" stroke="#222" stroke-width="1.100"/><path d="M4 1.800v4.400" stroke="#222" stroke-width="1.100"/></svg>
<div style="left:762.2px;top:155.52px;width:5.8px;height:5.8px;background:#e8e8e8;"></div>
<span class="t" style="left:774.9px;top:152.15px;font-size:11.3px;line-height:13.56px;color:#f0f0f0;font-weight:400;transform:scaleX(0.854);">16.313</span>
<span class="t" style="left:817.5px;top:152.15px;font-size:11.3px;line-height:13.56px;color:#f0f0f0;font-weight:400;transform:scaleX(0.887);">Prepare Super-Level</span>
<svg style="left:731px;top:169.53px;" width="8" height="8" viewBox="0 0 8 8"><rect x="0.500" y="0.500" width="7" height="7" fill="#e4e4e4" stroke="#fafafa" stroke-width="0.800"/><path d="M1.800 4h4.400" stroke="#222" stroke-width="1.100"/></svg>
<div style="left:747px;top:170.33px;width:5.8px;height:5.8px;background:#e8e8e8;"></div>
<span class="t" style="left:759.6px;top:166.96px;font-size:11.3px;line-height:13.56px;color:#f0f0f0;font-weight:400;transform:scaleX(0.933);">Classify the "Level Majority Vote" using the majority vote</span>
<svg style="left:746px;top:184.34px;" width="8" height="8" viewBox="0 0 8 8"><rect x="0.500" y="0.500" width="7" height="7" fill="#e4e4e4" stroke="#fafafa" stroke-width="0.800"/><path d="M1.800 4h4.400" stroke="#222" stroke-width="1.100"/></svg>
<div style="left:762.2px;top:185.14000000000001px;width:5.8px;height:5.8px;background:#e8e8e8;"></div>
<span class="t" style="left:774.9px;top:181.77px;font-size:11.3px;line-height:13.56px;color:#f0f0f0;font-weight:400;transform:scaleX(0.903);">Classify using Majority Vote AREA</span>
<svg style="left:772.5px;top:196.14999999999998px;" width="14" height="14" viewBox="0 0 14 14"><circle cx="7" cy="7" r="6.100" fill="#16204c" stroke="#ececf4" stroke-width="0.900"/><circle cx="7" cy="7" r="4.400" fill="#1a4cc4"/></svg>
<span class="t" style="left:789.8px;top:196.58px;font-size:11.3px;line-height:13.56px;color:#f0f0f0;font-weight:400;transform:scaleX(0.852);">0.016</span>
<span class="t" style="left:827px;top:196.58px;font-size:11.3px;line-height:13.56px;color:#f0f0f0;font-weight:400;transform:scaleX(0.943);">with Majority Vote Area (1) = "water"  at  L</span>
<svg style="left:772.5px;top:210.95999999999998px;" width="14" height="14" viewBox="0 0 14 14"><circle cx="7" cy="7" r="6.100" fill="#16204c" stroke="#ececf4" stroke-width="0.900"/><circle cx="7" cy="7" r="4.400" fill="#1a4cc4"/></svg>
<span class="t" style="left:789.8px;top:211.39px;font-size:11.3px;line-height:13.56px;color:#f0f0f0;font-weight:400;transform:scaleX(0.852);">0.016</span>
<span class="t" style="left:827px;top:211.39px;font-size:11.3px;line-height:13.56px;color:#f0f0f0;font-weight:400;transform:scaleX(0.946);">with Majority Vote Area (1) = "urban"  at  L</span>
<svg style="left:772.5px;top:225.76999999999998px;" width="14" height="14" viewBox="0 0 14 14"><circle cx="7" cy="7" r="6.100" fill="#16204c" stroke="#ececf4" stroke-width="0.900"/><circle cx="7" cy="7" r="4.400" fill="#1a4cc4"/></svg>
<span class="t" style="left:791px;top:226.2px;font-size:11.3px;line-height:13.56px;color:#f0f0f0;font-weight:400;transform:scaleX(0.847);">&lt;0.001s</span>
<span class="t" style="left:838.3px;top:226.2px;font-size:11.3px;line-height:13.56px;color:#f0f0f0;font-weight:400;transform:scaleX(0.945);">with Majority Vote Area (1) = "forest"  a</span>
<svg style="left:772.5px;top:240.57999999999998px;" width="14" height="14" viewBox="0 0 14 14"><circle cx="7" cy="7" r="6.100" fill="#16204c" stroke="#ececf4" stroke-width="0.900"/><circle cx="7" cy="7" r="4.400" fill="#1a4cc4"/></svg>
<span class="t" style="left:789.8px;top:241.01px;font-size:11.3px;line-height:13.56px;color:#f0f0f0;font-weight:400;transform:scaleX(0.852);">0.016</span>
<span class="t" style="left:827px;top:241.01px;font-size:11.3px;line-height:13.56px;color:#f0f0f0;font-weight:400;transform:scaleX(0.936);">with Majority Vote Area (1) = "bare soil"  a</span>
<svg style="left:772.5px;top:255.39px;" width="14" height="14" viewBox="0 0 14 14"><circle cx="7" cy="7" r="6.100" fill="#16204c" stroke="#ececf4" stroke-width="0.900"/><circle cx="7" cy="7" r="4.400" fill="#1a4cc4"/></svg>
<span class="t" style="left:791px;top:255.82px;font-size:11.3px;line-height:13.56px;color:#f0f0f0;font-weight:400;transform:scaleX(0.847);">&lt;0.001s</span>
<span class="t" style="left:838.3px;top:255.82px;font-size:11.3px;line-height:13.56px;color:#f0f0f0;font-weight:400;transform:scaleX(0.928);">with Majority Vote Area (1) = "grassland</span>
<div style="left:770.5px;top:269.6px;width:207.5px;height:14.4px;background:#3e3e00;border-radius:2px"></div>
<svg style="left:746px;top:273.2px;" width="8" height="8" viewBox="0 0 8 8"><rect x="0.500" y="0.500" width="7" height="7" fill="#e4e4e4" stroke="#fafafa" stroke-width="0.800"/><path d="M1.800 4h4.400" stroke="#222" stroke-width="1.100"/></svg>
<div style="left:762.2px;top:274.0px;width:5.8px;height:5.8px;background:#e8e8e8;"></div>
<span class="t" style="left:775px;top:270.63px;font-size:11.3px;line-height:13.56px;color:#e8e83a;font-weight:400;transform:scaleX(0.834);">0.031</span>
<span class="t" style="left:811.9px;top:270.63px;font-size:11.3px;line-height:13.56px;color:#e8e83a;font-weight:400;transform:scaleX(0.908);">Classify using Majority Vote COUNT</span>
<svg style="left:772.5px;top:285.01px;" width="14" height="14" viewBox="0 0 14 14"><circle cx="7" cy="7" r="6.100" fill="#16204c" stroke="#ececf4" stroke-width="0.900"/><circle cx="7" cy="7" r="4.400" fill="#1a4cc4"/></svg>
<span class="t" style="left:791px;top:285.44px;font-size:11.3px;line-height:13.56px;color:#f0f0f0;font-weight:400;transform:scaleX(0.847);">&lt;0.001s</span>
<span class="t" style="left:838.3px;top:285.44px;font-size:11.3px;line-height:13.56px;color:#f0f0f0;font-weight:400;transform:scaleX(0.948);">with Majority Vote Count (1) = "water"</span>
<svg style="left:772.5px;top:299.82px;" width="14" height="14" viewBox="0 0 14 14"><circle cx="7" cy="7" r="6.100" fill="#16204c" stroke="#ececf4" stroke-width="0.900"/><circle cx="7" cy="7" r="4.400" fill="#1a4cc4"/></svg>
<span class="t" style="left:789.8px;top:300.25px;font-size:11.3px;line-height:13.56px;color:#f0f0f0;font-weight:400;transform:scaleX(0.852);">0.016</span>
<span class="t" style="left:827px;top:300.25px;font-size:11.3px;line-height:13.56px;color:#f0f0f0;font-weight:400;transform:scaleX(0.950);">with Majority Vote Count (1) = "urban"  at</span>
<svg style="left:772.5px;top:314.63px;" width="14" height="14" viewBox="0 0 14 14"><circle cx="7" cy="7" r="6.100" fill="#16204c" stroke="#ececf4" stroke-width="0.900"/><circle cx="7" cy="7" r="4.400" fill="#1a4cc4"/></svg>
<span class="t" style="left:791px;top:315.06px;font-size:11.3px;line-height:13.56px;color:#f0f0f0;font-weight:400;transform:scaleX(0.847);">&lt;0.001s</span>
<span class="t" style="left:838.3px;top:315.06px;font-size:11.3px;line-height:13.56px;color:#f0f0f0;font-weight:400;transform:scaleX(0.953);">with Majority Vote Count (1) = "forest"</span>
<svg style="left:772.5px;top:329.44px;" width="14" height="14" viewBox="0 0 14 14"><circle cx="7" cy="7" r="6.100" fill="#16204c" stroke="#ececf4" stroke-width="0.900"/><circle cx="7" cy="7" r="4.400" fill="#1a4cc4"/></svg>
<span class="t" style="left:789.8px;top:329.87px;font-size:11.3px;line-height:13.56px;color:#f0f0f0;font-weight:400;transform:scaleX(0.852);">0.015</span>
<span class="t" style="left:827px;top:329.87px;font-size:11.3px;line-height:13.56px;color:#f0f0f0;font-weight:400;transform:scaleX(0.946);">with Majority Vote Count (1) = "bare soil"</span>
<svg style="left:772.5px;top:344.25px;" width="14" height="14" viewBox="0 0 14 14"><circle cx="7" cy="7" r="6.100" fill="#16204c" stroke="#ececf4" stroke-width="0.900"/><circle cx="7" cy="7" r="4.400" fill="#1a4cc4"/></svg>
<span class="t" style="left:791px;top:344.68px;font-size:11.3px;line-height:13.56px;color:#f0f0f0;font-weight:400;transform:scaleX(0.847);">&lt;0.001s</span>
<span class="t" style="left:838.3px;top:344.68px;font-size:11.3px;line-height:13.56px;color:#f0f0f0;font-weight:400;transform:scaleX(0.932);">with Majority Vote Count (1) = "grasslar</span>
<div style="left:1021.5px;top:121px;width:1.5px;height:304px;background:#252526;"></div>
<div style="left:1022.5px;top:119.8px;width:4.5px;height:340px;background:#2c2c2f;"></div>
<div style="left:1022.3px;top:119.8px;width:0.9px;height:320.5px;background:#4a4a4e;"></div>
<div style="left:711.5px;top:424.8px;width:310.5px;height:14.5px;background:#3c3c40;"></div>
<div style="left:726.4px;top:427px;width:80.5px;height:11px;background:#66666a;"></div>
<svg style="left:715.5px;top:428.5px;" width="6" height="8" viewBox="0 0 6 8"><path d="M5.500 0.500v7l-5-3.500z" fill="#9a9a9e"/></svg>
<svg style="left:1010.5px;top:428.5px;" width="6" height="8" viewBox="0 0 6 8"><path d="M0.500 0.500v7l5-3.500z" fill="#9a9a9e"/></svg>
<div style="left:710.5px;top:440.3px;width:312.5px;height:16.2px;background:#343437;"></div>
<div style="left:710.5px;top:439.5px;width:32px;height:17px;background:#2a2a2c;border:1px solid #3a3a3e;box-sizing:border-box;"></div>
<span class="t" style="left:715.6px;top:443.33px;font-size:10px;line-height:12.0px;color:#3c9be0;font-weight:400;">Main</span>
<div style="left:1024px;top:72px;width:1.2px;height:386px;background:linear-gradient(#3e3e42 0%,#404044 30%,#77777a 85%);"></div>
<div style="left:1026px;top:72px;width:381px;height:386px;background:#2c2c2f;"></div>
<span class="t" style="left:1027.4px;top:76.13px;font-size:10px;line-height:12.0px;color:#f0f0f0;font-weight:400;transform:scaleX(0.954);">Process Properties</span>
<div style="left:1114.9px;top:80.2px;width:240.5999999999999px;height:2px;background:repeating-linear-gradient(90deg,#4a4a50 0 1px,#39393d 1px 2px);opacity:.85"></div>
<svg style="left:1360.9px;top:78.5px;" width="9" height="6" viewBox="0 0 9 6"><path d="M0.500 0.500h8l-4 4.500z" fill="#e8e8e8"/></svg>
<svg style="left:1377.6px;top:76.4px;" width="7" height="10" viewBox="0 0 7 10"><path d="M1.700 0.900h3.400M2 0.900v4.200M4.800 0.900v4.200M0.600 5.100h5.600M3.400 5.300v3.600" stroke="#e8e8e8" stroke-width="0.900" fill="none"/><path d="M4.300 0.900v4.200" stroke="#e8e8e8" stroke-width="1.100"/></svg>
<svg style="left:1392.7px;top:77.5px;" width="7" height="7" viewBox="0 0 7 7"><path d="M0.600 0.600l5.800 5.800M6.400 0.600l-5.800 5.800" stroke="#e8e8e8" stroke-width="1.300"/></svg>
<svg style="left:1027.7px;top:101.8px;" width="10.2" height="10.2" viewBox="0 0 10.2 10.2"><rect x="0.500" y="0.500" width="9.2" height="9.2" fill="#252526" stroke="#b0b0b0" stroke-width="1"/></svg>
<span class="t" style="left:1040.6px;top:101.53px;font-size:10px;line-height:12.0px;color:#f0f0f0;font-weight:400;transform:scaleX(0.984);">Auto name</span>
<div style="left:1095px;top:96.3px;width:172.5px;height:20.2px;background:#242426;border:1px solid #5a5a5e;box-sizing:border-box;"></div>
<span class="t" style="left:1099px;top:98.84px;font-size:10.8px;line-height:12.96px;color:#f0f0f0;font-weight:400;transform:scaleX(0.904);">Classify using Majority Vote COUNT</span>
<div style="left:1270.3px;top:96.3px;width:22.4px;height:22.4px;background:#29292b;border:1px solid #424246;box-sizing:border-box;"></div>
<div style="left:1296.25px;top:96.3px;width:22.4px;height:22.4px;background:#29292b;border:1px solid #424246;box-sizing:border-box;"></div>
<div style="left:1322.2px;top:96.3px;width:22.4px;height:22.4px;background:#29292b;border:1px solid #424246;box-sizing:border-box;"></div>
<div style="left:1348.1499999999999px;top:96.3px;width:22.4px;height:22.4px;background:#29292b;border:1px solid #424246;box-sizing:border-box;"></div>
<div style="left:1374.1px;top:96.3px;width:22.4px;height:22.4px;background:#29292b;border:1px solid #424246;box-sizing:border-box;"></div>
<svg style="left:1272.5px;top:98.5px;" width="18" height="18" viewBox="0 0 18 18"><circle cx="9.400" cy="8.600" r="5" fill="#0c2a44" stroke="#f6f6f6" stroke-width="2"/><circle cx="9.400" cy="8.600" r="6.400" fill="none" stroke="#f6f6f6" stroke-width="1.600" stroke-dasharray="2.510 2.510"/><path d="M6.600 8.600h5.600M9.400 5.800v5.600" stroke="#2d9be0" stroke-width="1.700"/></svg>
<svg style="left:1298.5px;top:98.5px;" width="18" height="18" viewBox="0 0 18 18"><circle cx="13.200" cy="5.100" r="2.600" fill="none" stroke="#2f7fb4" stroke-width="1.300"/><circle cx="13.200" cy="5.100" r="3.600" fill="none" stroke="#2f7fb4" stroke-width="1" stroke-dasharray="1.400 1.400"/><circle cx="7.800" cy="10" r="4.100" fill="#18181a" stroke="#f6f6f6" stroke-width="1.800"/><circle cx="7.800" cy="10" r="5.300" fill="none" stroke="#f6f6f6" stroke-width="1.400" stroke-dasharray="2.080 2.080"/></svg>
<svg style="left:1324.5px;top:98.5px;" width="18" height="18" viewBox="0 0 18 18"><path d="M3 1.500l13 7.500l-13 7.500z" fill="#f6f6f6"/></svg>
<svg style="left:1350.5px;top:98.5px;" width="18" height="18" viewBox="0 0 18 18"><path d="M9 2l6 6.500h-4v7.500h-4v-7.500h-4z" fill="#f6f6f6"/></svg>
<svg style="left:1376.5px;top:98.5px;" width="18" height="18" viewBox="0 0 18 18"><path d="M9 16l6-6.500h-4v-7.500h-4v7.500h-4z" fill="#f6f6f6"/></svg>
<div style="left:1027px;top:124.7px;width:380px;height:280.3px;background:#262628;"></div>
<div style="left:1027px;top:124.7px;width:190px;height:17.5px;background:#2c2c2f;border:1px solid #4a4a4e;box-sizing:border-box;"></div>
<div style="left:1216.5px;top:124.7px;width:192px;height:17.5px;background:#2c2c2f;border:1px solid #4a4a4e;box-sizing:border-box;"></div>
<span class="t" style="left:1030.7px;top:128.32px;font-size:9.7px;line-height:11.64px;color:#f0f0f0;font-weight:400;transform:scaleX(0.888);">Setting</span>
<span class="t" style="left:1220px;top:128.32px;font-size:9.7px;line-height:11.64px;color:#f0f0f0;font-weight:400;transform:scaleX(0.977);">Value</span>
<div style="left:1027px;top:142.0px;width:380px;height:14.3px;background:#222224;"></div>
<div style="left:1027px;top:155.8px;width:380px;height:0.7px;background:#2c2c30;"></div>
<span class="t" style="left:1030.7px;top:143.82px;font-size:9.7px;line-height:11.64px;color:#f0f0f0;font-weight:400;transform:scaleX(0.953);">Algorithm</span>
<span class="t" style="left:1219.6px;top:143.82px;font-size:9.7px;line-height:11.64px;color:#f0f0f0;font-weight:400;transform:scaleX(0.972);">execute child processes</span>
<div style="left:1027px;top:156.3px;width:380px;height:14.3px;background:#2f2f33;"></div>
<div style="left:1027px;top:170.10000000000002px;width:380px;height:0.7px;background:#2c2c30;"></div>
<span class="t" style="left:1045.5px;top:158.12px;font-size:9.7px;line-height:11.64px;color:#f0f0f0;font-weight:700;transform:scaleX(0.957);">Domain</span>
<svg style="left:1030.5px;top:160.10000000000002px;" width="8" height="7" viewBox="0 0 8 7"><path d="M7 0.500v6h-6.500z" fill="#dcdcdc"/></svg>
<div style="left:1027px;top:170.6px;width:14px;height:14.3px;background:#2f2f33;"></div>
<div style="left:1041px;top:170.6px;width:366px;height:14.3px;background:#222224;"></div>
<div style="left:1027px;top:184.4px;width:380px;height:0.7px;background:#2c2c30;"></div>
<span class="t" style="left:1045.5px;top:172.42px;font-size:9.7px;line-height:11.64px;color:#c8c8c8;font-weight:400;transform:scaleX(0.965);">Scope</span>
<span class="t" style="left:1219.6px;top:172.42px;font-size:9.7px;line-height:11.64px;color:#c8c8c8;font-weight:400;transform:scaleX(0.972);">execute</span>
<div style="left:1027px;top:184.9px;width:14px;height:14.3px;background:#2f2f33;"></div>
<div style="left:1041px;top:184.9px;width:366px;height:14.3px;background:#222224;"></div>
<div style="left:1027px;top:198.70000000000002px;width:380px;height:0.7px;background:#2c2c30;"></div>
<span class="t" style="left:1045.5px;top:186.72px;font-size:9.7px;line-height:11.64px;color:#c8c8c8;font-weight:400;transform:scaleX(0.965);">Condition</span>
<span class="t" style="left:1219.6px;top:186.72px;font-size:9.7px;line-height:11.64px;color:#c8c8c8;font-weight:400;transform:scaleX(0.826);">---</span>
<div style="left:1027px;top:199.2px;width:14px;height:14.3px;background:#2f2f33;"></div>
<div style="left:1041px;top:199.2px;width:366px;height:14.3px;background:#222224;"></div>
<div style="left:1027px;top:213.0px;width:380px;height:0.7px;background:#2c2c30;"></div>
<span class="t" style="left:1045.5px;top:201.02px;font-size:9.7px;line-height:11.64px;color:#f0f0f0;font-weight:400;transform:scaleX(0.954);">Map</span>
<span class="t" style="left:1219.6px;top:201.02px;font-size:9.7px;line-height:11.64px;color:#f0f0f0;font-weight:400;transform:scaleX(0.956);">From Parent</span>
<div style="left:1027px;top:213.5px;width:380px;height:14.3px;background:#2f2f33;"></div>
<div style="left:1027px;top:227.3px;width:380px;height:0.7px;background:#2c2c30;"></div>
<span class="t" style="left:1045.5px;top:215.32px;font-size:9.7px;line-height:11.64px;color:#f0f0f0;font-weight:700;transform:scaleX(0.968);">Algorithm parameters</span>
<svg style="left:1030.5px;top:216.8px;" width="7" height="9" viewBox="0 0 7 9"><path d="M1 0.800l4.500 3.500l-4.500 3.500z" fill="none" stroke="#9a9a9a" stroke-width="0.900"/></svg>
<div style="left:1027px;top:227.8px;width:380px;height:14.3px;background:#2f2f33;"></div>
<div style="left:1027px;top:241.60000000000002px;width:380px;height:0.7px;background:#2c2c30;"></div>
<span class="t" style="left:1045.5px;top:229.62px;font-size:9.7px;line-height:11.64px;color:#f0f0f0;font-weight:700;transform:scaleX(0.978);">Loops &amp; cycles</span>
<svg style="left:1030.5px;top:231.60000000000002px;" width="8" height="7" viewBox="0 0 8 7"><path d="M7 0.500v6h-6.500z" fill="#dcdcdc"/></svg>
<div style="left:1027px;top:242.10000000000002px;width:14px;height:14.3px;background:#2f2f33;"></div>
<div style="left:1041px;top:242.10000000000002px;width:366px;height:14.3px;background:#222224;"></div>
<div style="left:1027px;top:255.90000000000003px;width:380px;height:0.7px;background:#2c2c30;"></div>
<span class="t" style="left:1045.5px;top:243.92px;font-size:9.7px;line-height:11.64px;color:#f0f0f0;font-weight:400;transform:scaleX(0.967);">Loop while something changes only</span>
<span class="t" style="left:1219.6px;top:243.92px;font-size:9.7px;line-height:11.64px;color:#f0f0f0;font-weight:400;transform:scaleX(1.012);">Yes</span>
<div style="left:1027px;top:256.4px;width:14px;height:14.3px;background:#2f2f33;"></div>
<div style="left:1041px;top:256.4px;width:366px;height:14.3px;background:#222224;"></div>
<div style="left:1027px;top:270.2px;width:380px;height:0.7px;background:#2c2c30;"></div>
<span class="t" style="left:1045.5px;top:258.22px;font-size:9.7px;line-height:11.64px;color:#f0f0f0;font-weight:400;transform:scaleX(0.962);">Number of cycles</span>
<span class="t" style="left:1219.6px;top:258.22px;font-size:9.7px;line-height:11.64px;color:#f0f0f0;font-weight:400;transform:scaleX(0.742);">1</span>
<div style="left:1027px;top:270.70000000000005px;width:380px;height:14.3px;background:#222224;"></div>
<div style="left:1027px;top:284.50000000000006px;width:380px;height:0.7px;background:#2c2c30;"></div>
<span class="t" style="left:1030.7px;top:272.52px;font-size:9.7px;line-height:11.64px;color:#f0f0f0;font-weight:400;transform:scaleX(0.940);">Comment</span>
<div style="left:1216px;top:142px;width:1px;height:263px;background:#3a3a3e;"></div>
<div style="left:1027px;top:405px;width:380px;height:52px;background:#323236;"></div>
<div style="left:711px;top:458.3px;width:312px;height:20px;background:#2c2c2f;"></div>
<span class="t" style="left:711.5px;top:463.24px;font-size:10px;line-height:12.0px;color:#f0f0f0;font-weight:400;transform:scaleX(1.014);">Image Object Information</span>
<div style="left:833.2px;top:467.4px;width:140.79999999999995px;height:2px;background:repeating-linear-gradient(90deg,#4a4a50 0 1px,#39393d 1px 2px);opacity:.85"></div>
<svg style="left:978.9px;top:465.7px;" width="9" height="6" viewBox="0 0 9 6"><path d="M0.500 0.500h8l-4 4.500z" fill="#e8e8e8"/></svg>
<svg style="left:995.5999999999999px;top:463.59999999999997px;" width="7" height="10" viewBox="0 0 7 10"><path d="M1.700 0.900h3.400M2 0.900v4.200M4.800 0.900v4.200M0.600 5.100h5.600M3.400 5.300v3.600" stroke="#e8e8e8" stroke-width="0.900" fill="none"/><path d="M4.300 0.900v4.200" stroke="#e8e8e8" stroke-width="1.100"/></svg>
<svg style="left:1011.0px;top:464.7px;" width="7" height="7" viewBox="0 0 7 7"><path d="M0.600 0.600l5.800 5.800M6.400 0.600l-5.800 5.800" stroke="#e8e8e8" stroke-width="1.300"/></svg>
<div style="left:710.5px;top:478px;width:311.5px;height:315px;background:#252526;border:1px solid #4a4a4e;box-sizing:border-box;"></div>
<div style="left:711.5px;top:479px;width:310px;height:16.2px;background:#2c2c2f;"></div>
<div style="left:867px;top:479px;width:1px;height:16.2px;background:#58585c;"></div>
<div style="left:971.5px;top:479px;width:1px;height:16.2px;background:#58585c;"></div>
<div style="left:711.5px;top:495px;width:310px;height:0.8px;background:#3e3e42;"></div>
<span class="t" style="left:715.4px;top:481.23px;font-size:11.3px;line-height:13.56px;color:#f0f0f0;font-weight:400;transform:scaleX(0.886);">Feature</span>
<span class="t" style="left:871.8px;top:481.23px;font-size:11.3px;line-height:13.56px;color:#f0f0f0;font-weight:400;transform:scaleX(0.873);">Value</span>
<div style="left:711.5px;top:495.4px;width:260.3px;height:15.6px;background:#546a9c;"></div>
<span class="t" style="left:712.4px;top:496.43px;font-size:11.3px;line-height:13.56px;color:#fff;font-weight:700;transform:scaleX(0.851);">Object features</span>
<div style="left:711.5px;top:511.0px;width:260.3px;height:15.6px;background:#3d3d5a;"></div>
<span class="t" style="left:722.8px;top:512.03px;font-size:11.3px;line-height:13.56px;color:#fff;font-weight:700;transform:scaleX(0.846);">Sub-objects</span>
<span class="t" style="left:879px;top:512.03px;font-size:11.3px;line-height:13.56px;color:#fff;font-weight:700;transform:scaleX(0.894);">Number of</span>
<span class="t" style="left:727.6px;top:527.63px;font-size:11.3px;line-height:13.56px;color:#f0f0f0;font-weight:400;transform:scaleX(0.863);">bare soil (1)</span>
<span class="t" style="left:884px;top:527.63px;font-size:11.3px;line-height:13.56px;color:#f0f0f0;font-weight:400;transform:scaleX(0.873);">2</span>
<span class="t" style="left:727.6px;top:543.23px;font-size:11.3px;line-height:13.56px;color:#f0f0f0;font-weight:400;transform:scaleX(0.863);">forest (1)</span>
<span class="t" style="left:884px;top:543.23px;font-size:11.3px;line-height:13.56px;color:#f0f0f0;font-weight:400;transform:scaleX(0.873);">6</span>
<span class="t" style="left:727.6px;top:558.83px;font-size:11.3px;line-height:13.56px;color:#f0f0f0;font-weight:400;transform:scaleX(0.864);">grassland (1)</span>
<span class="t" style="left:884px;top:558.83px;font-size:11.3px;line-height:13.56px;color:#f0f0f0;font-weight:400;transform:scaleX(0.875);">10</span>
<span class="t" style="left:727.6px;top:574.43px;font-size:11.3px;line-height:13.56px;color:#f0f0f0;font-weight:400;transform:scaleX(0.873);">urban (1)</span>
<span class="t" style="left:884px;top:574.43px;font-size:11.3px;line-height:13.56px;color:#f0f0f0;font-weight:400;transform:scaleX(0.873);">3</span>
<span class="t" style="left:727.6px;top:590.03px;font-size:11.3px;line-height:13.56px;color:#f0f0f0;font-weight:400;transform:scaleX(0.868);">water (1)</span>
<span class="t" style="left:884px;top:590.03px;font-size:11.3px;line-height:13.56px;color:#f0f0f0;font-weight:400;transform:scaleX(0.873);">5</span>
<div style="left:711.5px;top:604.6px;width:260.3px;height:15.6px;background:#3d3d5a;"></div>
<span class="t" style="left:722.8px;top:605.63px;font-size:11.3px;line-height:13.56px;color:#fff;font-weight:700;transform:scaleX(0.846);">Sub-objects</span>
<span class="t" style="left:879px;top:605.63px;font-size:11.3px;line-height:13.56px;color:#fff;font-weight:700;transform:scaleX(0.842);">Rel. area of</span>
<span class="t" style="left:727.6px;top:621.23px;font-size:11.3px;line-height:13.56px;color:#f0f0f0;font-weight:400;transform:scaleX(0.863);">bare soil (1)</span>
<span class="t" style="left:884px;top:621.23px;font-size:11.3px;line-height:13.56px;color:#f0f0f0;font-weight:400;transform:scaleX(0.824);">0.7048000</span>
<div style="left:711.5px;top:635.8px;width:260.3px;height:15.6px;background:#0078d7;"></div>
<span class="t" style="left:727.6px;top:636.83px;font-size:11.3px;line-height:13.56px;color:#f0f0f0;font-weight:400;transform:scaleX(0.863);">forest (1)</span>
<span class="t" style="left:884px;top:636.83px;font-size:11.3px;line-height:13.56px;color:#f0f0f0;font-weight:400;transform:scaleX(0.837);">0.1173333</span>
<span class="t" style="left:727.6px;top:652.43px;font-size:11.3px;line-height:13.56px;color:#f0f0f0;font-weight:400;transform:scaleX(0.864);">grassland (1)</span>
<span class="t" style="left:884px;top:652.43px;font-size:11.3px;line-height:13.56px;color:#f0f0f0;font-weight:400;transform:scaleX(0.824);">0.1388000</span>
<span class="t" style="left:727.6px;top:668.03px;font-size:11.3px;line-height:13.56px;color:#f0f0f0;font-weight:400;transform:scaleX(0.873);">urban (1)</span>
<span class="t" style="left:884px;top:668.03px;font-size:11.3px;line-height:13.56px;color:#f0f0f0;font-weight:400;transform:scaleX(0.824);">0.0149333</span>
<span class="t" style="left:727.6px;top:683.63px;font-size:11.3px;line-height:13.56px;color:#f0f0f0;font-weight:400;transform:scaleX(0.868);">water (1)</span>
<span class="t" style="left:884px;top:683.63px;font-size:11.3px;line-height:13.56px;color:#f0f0f0;font-weight:400;transform:scaleX(0.824);">0.0241333</span>
<div style="left:711.5px;top:698.1999999999999px;width:260.3px;height:15.6px;background:#3d3d5a;"></div>
<span class="t" style="left:722.8px;top:699.23px;font-size:11.3px;line-height:13.56px;color:#fff;font-weight:700;transform:scaleX(0.846);">Sub-objects</span>
<span class="t" style="left:879px;top:699.23px;font-size:11.3px;line-height:13.56px;color:#fff;font-weight:700;transform:scaleX(0.893);">Majority Vote Area</span>
<span class="t" style="left:727.6px;top:714.83px;font-size:11.3px;line-height:13.56px;color:#f0f0f0;font-weight:400;transform:scaleX(0.888);">Majority Vote Area (1)</span>
<span class="t" style="left:884px;top:714.83px;font-size:11.3px;line-height:13.56px;color:#f0f0f0;font-weight:400;transform:scaleX(0.878);">bare soil</span>
<div style="left:711.5px;top:729.4px;width:260.3px;height:15.6px;background:#3d3d5a;"></div>
<span class="t" style="left:722.8px;top:730.43px;font-size:11.3px;line-height:13.56px;color:#fff;font-weight:700;transform:scaleX(0.846);">Sub-objects</span>
<span class="t" style="left:879px;top:730.43px;font-size:11.3px;line-height:13.56px;color:#fff;font-weight:700;transform:scaleX(0.879);">Majority Vote Cou...</span>
<span class="t" style="left:727.6px;top:746.03px;font-size:11.3px;line-height:13.56px;color:#f0f0f0;font-weight:400;transform:scaleX(0.887);">Majority Vote Count (1)</span>
<span class="t" style="left:884px;top:746.03px;font-size:11.3px;line-height:13.56px;color:#f0f0f0;font-weight:400;transform:scaleX(0.878);">grassland</span>
<div style="left:1022px;top:458.3px;width:4px;height:337px;background:#2c2c2f;"></div>
<div style="left:1024px;top:458.3px;width:1.3px;height:337px;background:#6a6a6e;"></div>
<div style="left:707px;top:793px;width:700px;height:2px;background:#000;"></div>
<div style="left:1026.3px;top:458.3px;width:381px;height:20px;background:#2c2c2f;"></div>
<span class="t" style="left:1027.5px;top:463.24px;font-size:10px;line-height:12.0px;color:#f0f0f0;font-weight:400;transform:scaleX(0.930);">Class Hierar...</span>
<svg style="left:1093.8px;top:465.7px;" width="9" height="6" viewBox="0 0 9 6"><path d="M0.500 0.500h8l-4 4.500z" fill="#e8e8e8"/></svg>
<svg style="left:1110.3999999999999px;top:463.59999999999997px;" width="7" height="10" viewBox="0 0 7 10"><path d="M1.700 0.900h3.400M2 0.900v4.200M4.800 0.900v4.200M0.600 5.100h5.600M3.400 5.300v3.600" stroke="#e8e8e8" stroke-width="0.900" fill="none"/><path d="M4.300 0.900v4.200" stroke="#e8e8e8" stroke-width="1.100"/></svg>
<svg style="left:1126.1px;top:464.7px;" width="7" height="7" viewBox="0 0 7 7"><path d="M0.600 0.600l5.800 5.800M6.400 0.600l-5.800 5.800" stroke="#e8e8e8" stroke-width="1.300"/></svg>
<div style="left:1026.3px;top:478.3px;width:111.7px;height:315px;background:#252526;border:1px solid #4a4a4e;box-sizing:border-box;"></div>
<div style="left:1139.5px;top:458.3px;width:1.2px;height:335px;background:#5a5a5e;"></div>
<svg style="left:1031.5px;top:483.2px;" width="8" height="8" viewBox="0 0 8 8"><rect x="0.500" y="0.500" width="7" height="7" fill="#e4e4e4" stroke="#fafafa" stroke-width="0.800"/><path d="M1.800 4h4.400" stroke="#222" stroke-width="1.100"/></svg>
<div style="left:1047.6px;top:484.0px;width:5.8px;height:5.8px;background:#e8e8e8;"></div>
<span class="t" style="left:1059.9px;top:480.63px;font-size:11.3px;line-height:13.56px;color:#f0f0f0;font-weight:400;transform:scaleX(0.826);">classes</span>
<div style="left:1050px;top:494px;width:1px;height:68px;background:#434347;"></div>
<div style="left:1050px;top:501.9px;width:9px;height:1px;background:#434347;"></div>
<svg style="left:1058.9px;top:494.9px;" width="14" height="14" viewBox="0 0 14 14"><circle cx="7" cy="7" r="6" fill="#ffc000" stroke="#d8d8e0" stroke-width="0.900"/></svg>
<span class="t" style="left:1075.6px;top:495.33px;font-size:11.3px;line-height:13.56px;color:#f0f0f0;font-weight:400;transform:scaleX(0.888);">bare soil</span>
<div style="left:1050px;top:516.73px;width:9px;height:1px;background:#434347;"></div>
<div style="left:1073.9px;top:509.73px;width:28.6px;height:14px;background:#3c3c40;"></div>
<svg style="left:1058.9px;top:509.73px;" width="14" height="14" viewBox="0 0 14 14"><circle cx="7" cy="7" r="6" fill="#128c78" stroke="#d8d8e0" stroke-width="0.900"/></svg>
<span class="t" style="left:1075.6px;top:510.16px;font-size:11.3px;line-height:13.56px;color:#f0f0f0;font-weight:400;transform:scaleX(0.920);">forest</span>
<div style="left:1050px;top:531.56px;width:9px;height:1px;background:#434347;"></div>
<svg style="left:1058.9px;top:524.56px;" width="14" height="14" viewBox="0 0 14 14"><circle cx="7" cy="7" r="6" fill="#84c206" stroke="#d8d8e0" stroke-width="0.900"/></svg>
<span class="t" style="left:1075.6px;top:524.99px;font-size:11.3px;line-height:13.56px;color:#f0f0f0;font-weight:400;transform:scaleX(0.878);">grassland</span>
<div style="left:1050px;top:546.39px;width:9px;height:1px;background:#434347;"></div>
<svg style="left:1058.9px;top:539.39px;" width="14" height="14" viewBox="0 0 14 14"><circle cx="7" cy="7" r="6" fill="#8c0c34" stroke="#d8d8e0" stroke-width="0.900"/></svg>
<span class="t" style="left:1075.6px;top:539.82px;font-size:11.3px;line-height:13.56px;color:#f0f0f0;font-weight:400;transform:scaleX(0.917);">urban</span>
<div style="left:1050px;top:561.22px;width:9px;height:1px;background:#434347;"></div>
<svg style="left:1058.9px;top:554.22px;" width="14" height="14" viewBox="0 0 14 14"><circle cx="7" cy="7" r="6" fill="#176c8c" stroke="#d8d8e0" stroke-width="0.900"/></svg>
<span class="t" style="left:1075.6px;top:554.65px;font-size:11.3px;line-height:13.56px;color:#f0f0f0;font-weight:400;transform:scaleX(0.887);">water</span>
<span class="t" style="left:1142.6px;top:463.24px;font-size:10px;line-height:12.0px;color:#f0f0f0;font-weight:400;transform:scaleX(0.957);">Feature View</span>
<div style="left:1206px;top:467.4px;width:149.5px;height:2px;background:repeating-linear-gradient(90deg,#4a4a50 0 1px,#39393d 1px 2px);opacity:.85"></div>
<svg style="left:1360.5px;top:465.7px;" width="9" height="6" viewBox="0 0 9 6"><path d="M0.500 0.500h8l-4 4.500z" fill="#e8e8e8"/></svg>
<svg style="left:1377.5px;top:463.59999999999997px;" width="7" height="10" viewBox="0 0 7 10"><path d="M1.700 0.900h3.400M2 0.900v4.200M4.800 0.900v4.200M0.600 5.100h5.600M3.400 5.300v3.600" stroke="#e8e8e8" stroke-width="0.900" fill="none"/><path d="M4.300 0.900v4.200" stroke="#e8e8e8" stroke-width="1.100"/></svg>
<svg style="left:1393.0px;top:464.7px;" width="7" height="7" viewBox="0 0 7 7"><path d="M0.600 0.600l5.800 5.800M6.400 0.600l-5.800 5.800" stroke="#e8e8e8" stroke-width="1.300"/></svg>
<div style="left:1141px;top:479px;width:263px;height:17px;background:#252526;border:1px solid #4a4a4e;box-sizing:border-box;"></div>
<span class="t" style="left:1146.5px;top:480.93px;font-size:11.3px;line-height:13.56px;color:#8c8c8c;font-weight:400;transform:scaleX(0.846);">Search feature</span>
<svg style="left:1389px;top:481px;" width="13" height="13" viewBox="0 0 13 13"><circle cx="8" cy="5" r="3.700" fill="none" stroke="#24649c" stroke-width="1.400"/><path d="M5.500 7.700l-4.500 4.500" stroke="#24649c" stroke-width="1.800"/></svg>
<div style="left:1141px;top:496px;width:263px;height:297.5px;background:#252526;border:1px solid #4a4a4e;box-sizing:border-box;"></div>
<div style="left:1391.3px;top:497px;width:12px;height:296px;background:#3a3a3e;"></div>
<svg style="left:1393.5px;top:501px;" width="8" height="6" viewBox="0 0 8 6"><path d="M0.500 5.500h7l-3.500-4.500z" fill="#b8b8bc"/></svg>
<div style="left:1392.4px;top:570.5px;width:10.6px;height:222.5px;background:#747478;"></div>
<div style="left:1149.5px;top:497px;width:1px;height:296px;background:repeating-linear-gradient(#4c4c50 0 1px,transparent 1px 2px)"></div>
<div style="left:1164.5px;top:497px;width:1px;height:48px;background:repeating-linear-gradient(#4c4c50 0 1px,transparent 1px 2px)"></div>
<div style="left:1164.5px;top:555px;width:1px;height:238px;background:repeating-linear-gradient(#4c4c50 0 1px,transparent 1px 2px)"></div>
<div style="left:1179.5px;top:555px;width:1px;height:238px;background:repeating-linear-gradient(#4c4c50 0 1px,transparent 1px 2px)"></div>
<div style="left:1194.5px;top:614px;width:1px;height:179px;background:repeating-linear-gradient(#4c4c50 0 1px,transparent 1px 2px)"></div>
<div style="left:1210px;top:732px;width:1px;height:30px;background:repeating-linear-gradient(#4c4c50 0 1px,transparent 1px 2px)"></div>
<svg style="left:1160.6px;top:500.5px;" width="8" height="8" viewBox="0 0 8 8"><rect x="0.500" y="0.500" width="7" height="7" fill="#e4e4e4" stroke="#fafafa" stroke-width="0.800"/><path d="M1.800 4h4.400" stroke="#222" stroke-width="1.100"/><path d="M4 1.800v4.400" stroke="#222" stroke-width="1.100"/></svg>
<svg style="left:1173.2px;top:498.0px;" width="14" height="13" viewBox="0 0 14 13"><rect x="0.600" y="0.600" width="12.500" height="11.800" fill="none" stroke="#e0e0e0" stroke-width="1"/><path d="M0.600 4.300h12.500M0.600 8.300h12.500M5.200 0.600v11.800" stroke="#e0e0e0" stroke-width="0.900"/></svg>
<span class="t" style="left:1188.6px;top:497.93px;font-size:11.3px;line-height:13.56px;color:#f0f0f0;font-weight:400;transform:scaleX(0.910);">Thematic layer</span>
<svg style="left:1160.6px;top:515.25px;" width="8" height="8" viewBox="0 0 8 8"><rect x="0.500" y="0.500" width="7" height="7" fill="#e4e4e4" stroke="#fafafa" stroke-width="0.800"/><path d="M1.800 4h4.400" stroke="#222" stroke-width="1.100"/><path d="M4 1.800v4.400" stroke="#222" stroke-width="1.100"/></svg>
<svg style="left:1173.2px;top:513.75px;" width="14" height="11" viewBox="0 0 14 11"><path d="M3.500 10a3 3 0 0 1-.5-5.900a4 4 0 0 1 7.500-.8a3.300 3.300 0 0 1 .5 6.700z" fill="#5a3a48" stroke="#e4e0e4" stroke-width="0.900"/></svg>
<span class="t" style="left:1188.6px;top:512.68px;font-size:11.3px;line-height:13.56px;color:#f0f0f0;font-weight:400;transform:scaleX(0.921);">Point cloud</span>
<svg style="left:1160.6px;top:530.0px;" width="8" height="8" viewBox="0 0 8 8"><rect x="0.500" y="0.500" width="7" height="7" fill="#e4e4e4" stroke="#fafafa" stroke-width="0.800"/><path d="M1.800 4h4.400" stroke="#222" stroke-width="1.100"/><path d="M4 1.800v4.400" stroke="#222" stroke-width="1.100"/></svg>
<svg style="left:1173.2px;top:527.5px;" width="14" height="13" viewBox="0 0 14 13"><circle cx="6.800" cy="6.500" r="5.900" fill="#2a4a6a" stroke="#d8d8d8" stroke-width="0.900"/><path d="M6.800 1v11" stroke="#c04040" stroke-width="1.200"/><circle cx="6.800" cy="4" r="1.500" fill="#e8e8e8"/></svg>
<span class="t" style="left:1188.6px;top:527.43px;font-size:11.3px;line-height:13.56px;color:#f0f0f0;font-weight:400;transform:scaleX(0.832);">Class</span>
<svg style="left:1160.6px;top:544.75px;" width="8" height="8" viewBox="0 0 8 8"><rect x="0.500" y="0.500" width="7" height="7" fill="#e4e4e4" stroke="#fafafa" stroke-width="0.800"/><path d="M1.800 4h4.400" stroke="#222" stroke-width="1.100"/></svg>
<div style="left:1176.6px;top:545.25px;width:5.8px;height:5.8px;background:#e8e8e8;"></div>
<span class="t" style="left:1188.6px;top:542.18px;font-size:11.3px;line-height:13.56px;color:#f0f0f0;font-weight:400;transform:scaleX(0.913);">Relations to objects</span>
<svg style="left:1175.6999999999998px;top:559.5px;" width="8" height="8" viewBox="0 0 8 8"><rect x="0.500" y="0.500" width="7" height="7" fill="#e4e4e4" stroke="#fafafa" stroke-width="0.800"/><path d="M1.800 4h4.400" stroke="#222" stroke-width="1.100"/><path d="M4 1.800v4.400" stroke="#222" stroke-width="1.100"/></svg>
<div style="left:1191.8999999999999px;top:560.0px;width:5.8px;height:5.8px;background:#e8e8e8;"></div>
<span class="t" style="left:1203.8999999999999px;top:556.93px;font-size:11.3px;line-height:13.56px;color:#f0f0f0;font-weight:400;transform:scaleX(0.923);">Linked object features</span>
<svg style="left:1175.6999999999998px;top:574.25px;" width="8" height="8" viewBox="0 0 8 8"><rect x="0.500" y="0.500" width="7" height="7" fill="#e4e4e4" stroke="#fafafa" stroke-width="0.800"/><path d="M1.800 4h4.400" stroke="#222" stroke-width="1.100"/><path d="M4 1.800v4.400" stroke="#222" stroke-width="1.100"/></svg>
<div style="left:1191.8999999999999px;top:574.75px;width:5.8px;height:5.8px;background:#e8e8e8;"></div>
<span class="t" style="left:1203.8999999999999px;top:571.68px;font-size:11.3px;line-height:13.56px;color:#f0f0f0;font-weight:400;transform:scaleX(0.926);">Neighbors</span>
<svg style="left:1175.6999999999998px;top:589.0px;" width="8" height="8" viewBox="0 0 8 8"><rect x="0.500" y="0.500" width="7" height="7" fill="#e4e4e4" stroke="#fafafa" stroke-width="0.800"/><path d="M1.800 4h4.400" stroke="#222" stroke-width="1.100"/><path d="M4 1.800v4.400" stroke="#222" stroke-width="1.100"/></svg>
<div style="left:1191.8999999999999px;top:589.5px;width:5.8px;height:5.8px;background:#e8e8e8;"></div>
<span class="t" style="left:1203.8999999999999px;top:586.43px;font-size:11.3px;line-height:13.56px;color:#f0f0f0;font-weight:400;transform:scaleX(0.873);">Process features</span>
<svg style="left:1175.6999999999998px;top:603.75px;" width="8" height="8" viewBox="0 0 8 8"><rect x="0.500" y="0.500" width="7" height="7" fill="#e4e4e4" stroke="#fafafa" stroke-width="0.800"/><path d="M1.800 4h4.400" stroke="#222" stroke-width="1.100"/></svg>
<div style="left:1191.8999999999999px;top:604.25px;width:5.8px;height:5.8px;background:#e8e8e8;"></div>
<span class="t" style="left:1203.8999999999999px;top:601.18px;font-size:11.3px;line-height:13.56px;color:#f0f0f0;font-weight:400;transform:scaleX(0.917);">Sub-objects</span>
<svg style="left:1190.8px;top:618.5px;" width="8" height="8" viewBox="0 0 8 8"><rect x="0.500" y="0.500" width="7" height="7" fill="#e4e4e4" stroke="#fafafa" stroke-width="0.800"/><path d="M1.800 4h4.400" stroke="#222" stroke-width="1.100"/><path d="M4 1.800v4.400" stroke="#222" stroke-width="1.100"/></svg>
<div style="left:1207.1999999999998px;top:619.0px;width:5.8px;height:5.8px;background:#e8e8e8;"></div>
<span class="t" style="left:1219.1999999999998px;top:615.93px;font-size:11.3px;line-height:13.56px;color:#f0f0f0;font-weight:400;transform:scaleX(0.910);">Layer value texture</span>
<svg style="left:1190.8px;top:633.25px;" width="8" height="8" viewBox="0 0 8 8"><rect x="0.500" y="0.500" width="7" height="7" fill="#e4e4e4" stroke="#fafafa" stroke-width="0.800"/><path d="M1.800 4h4.400" stroke="#222" stroke-width="1.100"/><path d="M4 1.800v4.400" stroke="#222" stroke-width="1.100"/></svg>
<div style="left:1207.1999999999998px;top:633.75px;width:5.8px;height:5.8px;background:#e8e8e8;"></div>
<span class="t" style="left:1219.1999999999998px;top:630.68px;font-size:11.3px;line-height:13.56px;color:#f0f0f0;font-weight:400;transform:scaleX(0.910);">Shape texture</span>
<svg style="left:1190.8px;top:648.0px;" width="8" height="8" viewBox="0 0 8 8"><rect x="0.500" y="0.500" width="7" height="7" fill="#e4e4e4" stroke="#fafafa" stroke-width="0.800"/><path d="M1.800 4h4.400" stroke="#222" stroke-width="1.100"/><path d="M4 1.800v4.400" stroke="#222" stroke-width="1.100"/></svg>
<div style="left:1207.1999999999998px;top:648.5px;width:5.8px;height:5.8px;background:#e8e8e8;"></div>
<span class="t" style="left:1219.1999999999998px;top:645.43px;font-size:11.3px;line-height:13.56px;color:#f0f0f0;font-weight:400;transform:scaleX(0.894);">Existence of</span>
<svg style="left:1190.8px;top:662.75px;" width="8" height="8" viewBox="0 0 8 8"><rect x="0.500" y="0.500" width="7" height="7" fill="#e4e4e4" stroke="#fafafa" stroke-width="0.800"/><path d="M1.800 4h4.400" stroke="#222" stroke-width="1.100"/><path d="M4 1.800v4.400" stroke="#222" stroke-width="1.100"/></svg>
<div style="left:1207.1999999999998px;top:663.25px;width:5.8px;height:5.8px;background:#e8e8e8;"></div>
<span class="t" style="left:1219.1999999999998px;top:660.18px;font-size:11.3px;line-height:13.56px;color:#f0f0f0;font-weight:400;transform:scaleX(0.957);">Number of</span>
<svg style="left:1190.8px;top:677.5px;" width="8" height="8" viewBox="0 0 8 8"><rect x="0.500" y="0.500" width="7" height="7" fill="#e4e4e4" stroke="#fafafa" stroke-width="0.800"/><path d="M1.800 4h4.400" stroke="#222" stroke-width="1.100"/><path d="M4 1.800v4.400" stroke="#222" stroke-width="1.100"/></svg>
<div style="left:1207.1999999999998px;top:678.0px;width:5.8px;height:5.8px;background:#e8e8e8;"></div>
<span class="t" style="left:1219.1999999999998px;top:674.93px;font-size:11.3px;line-height:13.56px;color:#f0f0f0;font-weight:400;transform:scaleX(0.919);">Area of</span>
<svg style="left:1190.8px;top:692.25px;" width="8" height="8" viewBox="0 0 8 8"><rect x="0.500" y="0.500" width="7" height="7" fill="#e4e4e4" stroke="#fafafa" stroke-width="0.800"/><path d="M1.800 4h4.400" stroke="#222" stroke-width="1.100"/><path d="M4 1.800v4.400" stroke="#222" stroke-width="1.100"/></svg>
<div style="left:1207.1999999999998px;top:692.75px;width:5.8px;height:5.8px;background:#e8e8e8;"></div>
<div style="left:1218px;top:689.25px;width:53.6px;height:14px;background:#3c3c40;"></div>
<span class="t" style="left:1219.1999999999998px;top:689.68px;font-size:11.3px;line-height:13.56px;color:#f0f0f0;font-weight:400;transform:scaleX(0.878);">Rel. area of</span>
<svg style="left:1190.8px;top:707.0px;" width="8" height="8" viewBox="0 0 8 8"><rect x="0.500" y="0.500" width="7" height="7" fill="#e4e4e4" stroke="#fafafa" stroke-width="0.800"/><path d="M1.800 4h4.400" stroke="#222" stroke-width="1.100"/><path d="M4 1.800v4.400" stroke="#222" stroke-width="1.100"/></svg>
<div style="left:1207.1999999999998px;top:707.5px;width:5.8px;height:5.8px;background:#e8e8e8;"></div>
<span class="t" style="left:1219.1999999999998px;top:704.43px;font-size:11.3px;line-height:13.56px;color:#f0f0f0;font-weight:400;transform:scaleX(0.922);">Clark Aggregation Index</span>
<svg style="left:1190.8px;top:721.75px;" width="8" height="8" viewBox="0 0 8 8"><rect x="0.500" y="0.500" width="7" height="7" fill="#e4e4e4" stroke="#fafafa" stroke-width="0.800"/><path d="M1.800 4h4.400" stroke="#222" stroke-width="1.100"/></svg>
<div style="left:1207.1999999999998px;top:722.25px;width:5.8px;height:5.8px;background:#e8e8e8;"></div>
<span class="t" style="left:1219.1999999999998px;top:719.18px;font-size:11.3px;line-height:13.56px;color:#f0f0f0;font-weight:400;transform:scaleX(0.943);">Majority Vote Area</span>
<div style="left:1222.5px;top:737.0px;width:5.8px;height:5.8px;background:#e8e8e8;"></div>
<span class="t" style="left:1234.5px;top:733.93px;font-size:11.3px;line-height:13.56px;color:#f0f0f0;font-weight:400;transform:scaleX(0.932);">Create new 'Majority Vote Area'</span>
<svg style="left:1217.5px;top:748.25px;" width="15" height="14" viewBox="0 0 15 14"><path d="M1 0.500v12.500h13" fill="none" stroke="#b0b0b8" stroke-width="0.900"/><path d="M2 11c2-1 3-3 4-2.500s2 .5 3-1.500l4.500-6.500" fill="none" stroke="#e03030" stroke-width="1.300"/></svg>
<span class="t" style="left:1234.5px;top:748.68px;font-size:11.3px;line-height:13.56px;color:#f0f0f0;font-weight:400;transform:scaleX(0.932);">Majority Vote Area (1)</span>
<svg style="left:1190.8px;top:766.0px;" width="8" height="8" viewBox="0 0 8 8"><rect x="0.500" y="0.500" width="7" height="7" fill="#e4e4e4" stroke="#fafafa" stroke-width="0.800"/><path d="M1.800 4h4.400" stroke="#222" stroke-width="1.100"/></svg>
<div style="left:1207.1999999999998px;top:766.5px;width:5.8px;height:5.8px;background:#e8e8e8;"></div>
<span class="t" style="left:1219.1999999999998px;top:763.43px;font-size:11.3px;line-height:13.56px;color:#f0f0f0;font-weight:400;transform:scaleX(0.951);">Majority Vote Count</span>
<div style="left:1222.5px;top:781.25px;width:5.8px;height:5.8px;background:#e8e8e8;"></div>
<span class="t" style="left:1234.5px;top:778.18px;font-size:11.3px;line-height:13.56px;color:#f0f0f0;font-weight:400;transform:scaleX(0.937);">Create new 'Majority Vote Count'</span>
<div style="left:1141px;top:793px;width:266px;height:2px;background:#000;"></div>
<div style="left:1404px;top:458.3px;width:3px;height:337px;background:#2c2c2f;"></div>
<div style="left:707px;top:457.4px;width:698px;height:1.3px;background:#6a6a6e;"></div>
<div style="left:1404.7px;top:1.7px;width:2.3px;height:791.3px;background:#e6e6ea;"></div>
<div style="left:0px;top:793px;width:1407px;height:2px;background:#000;"></div>
</body></html>
